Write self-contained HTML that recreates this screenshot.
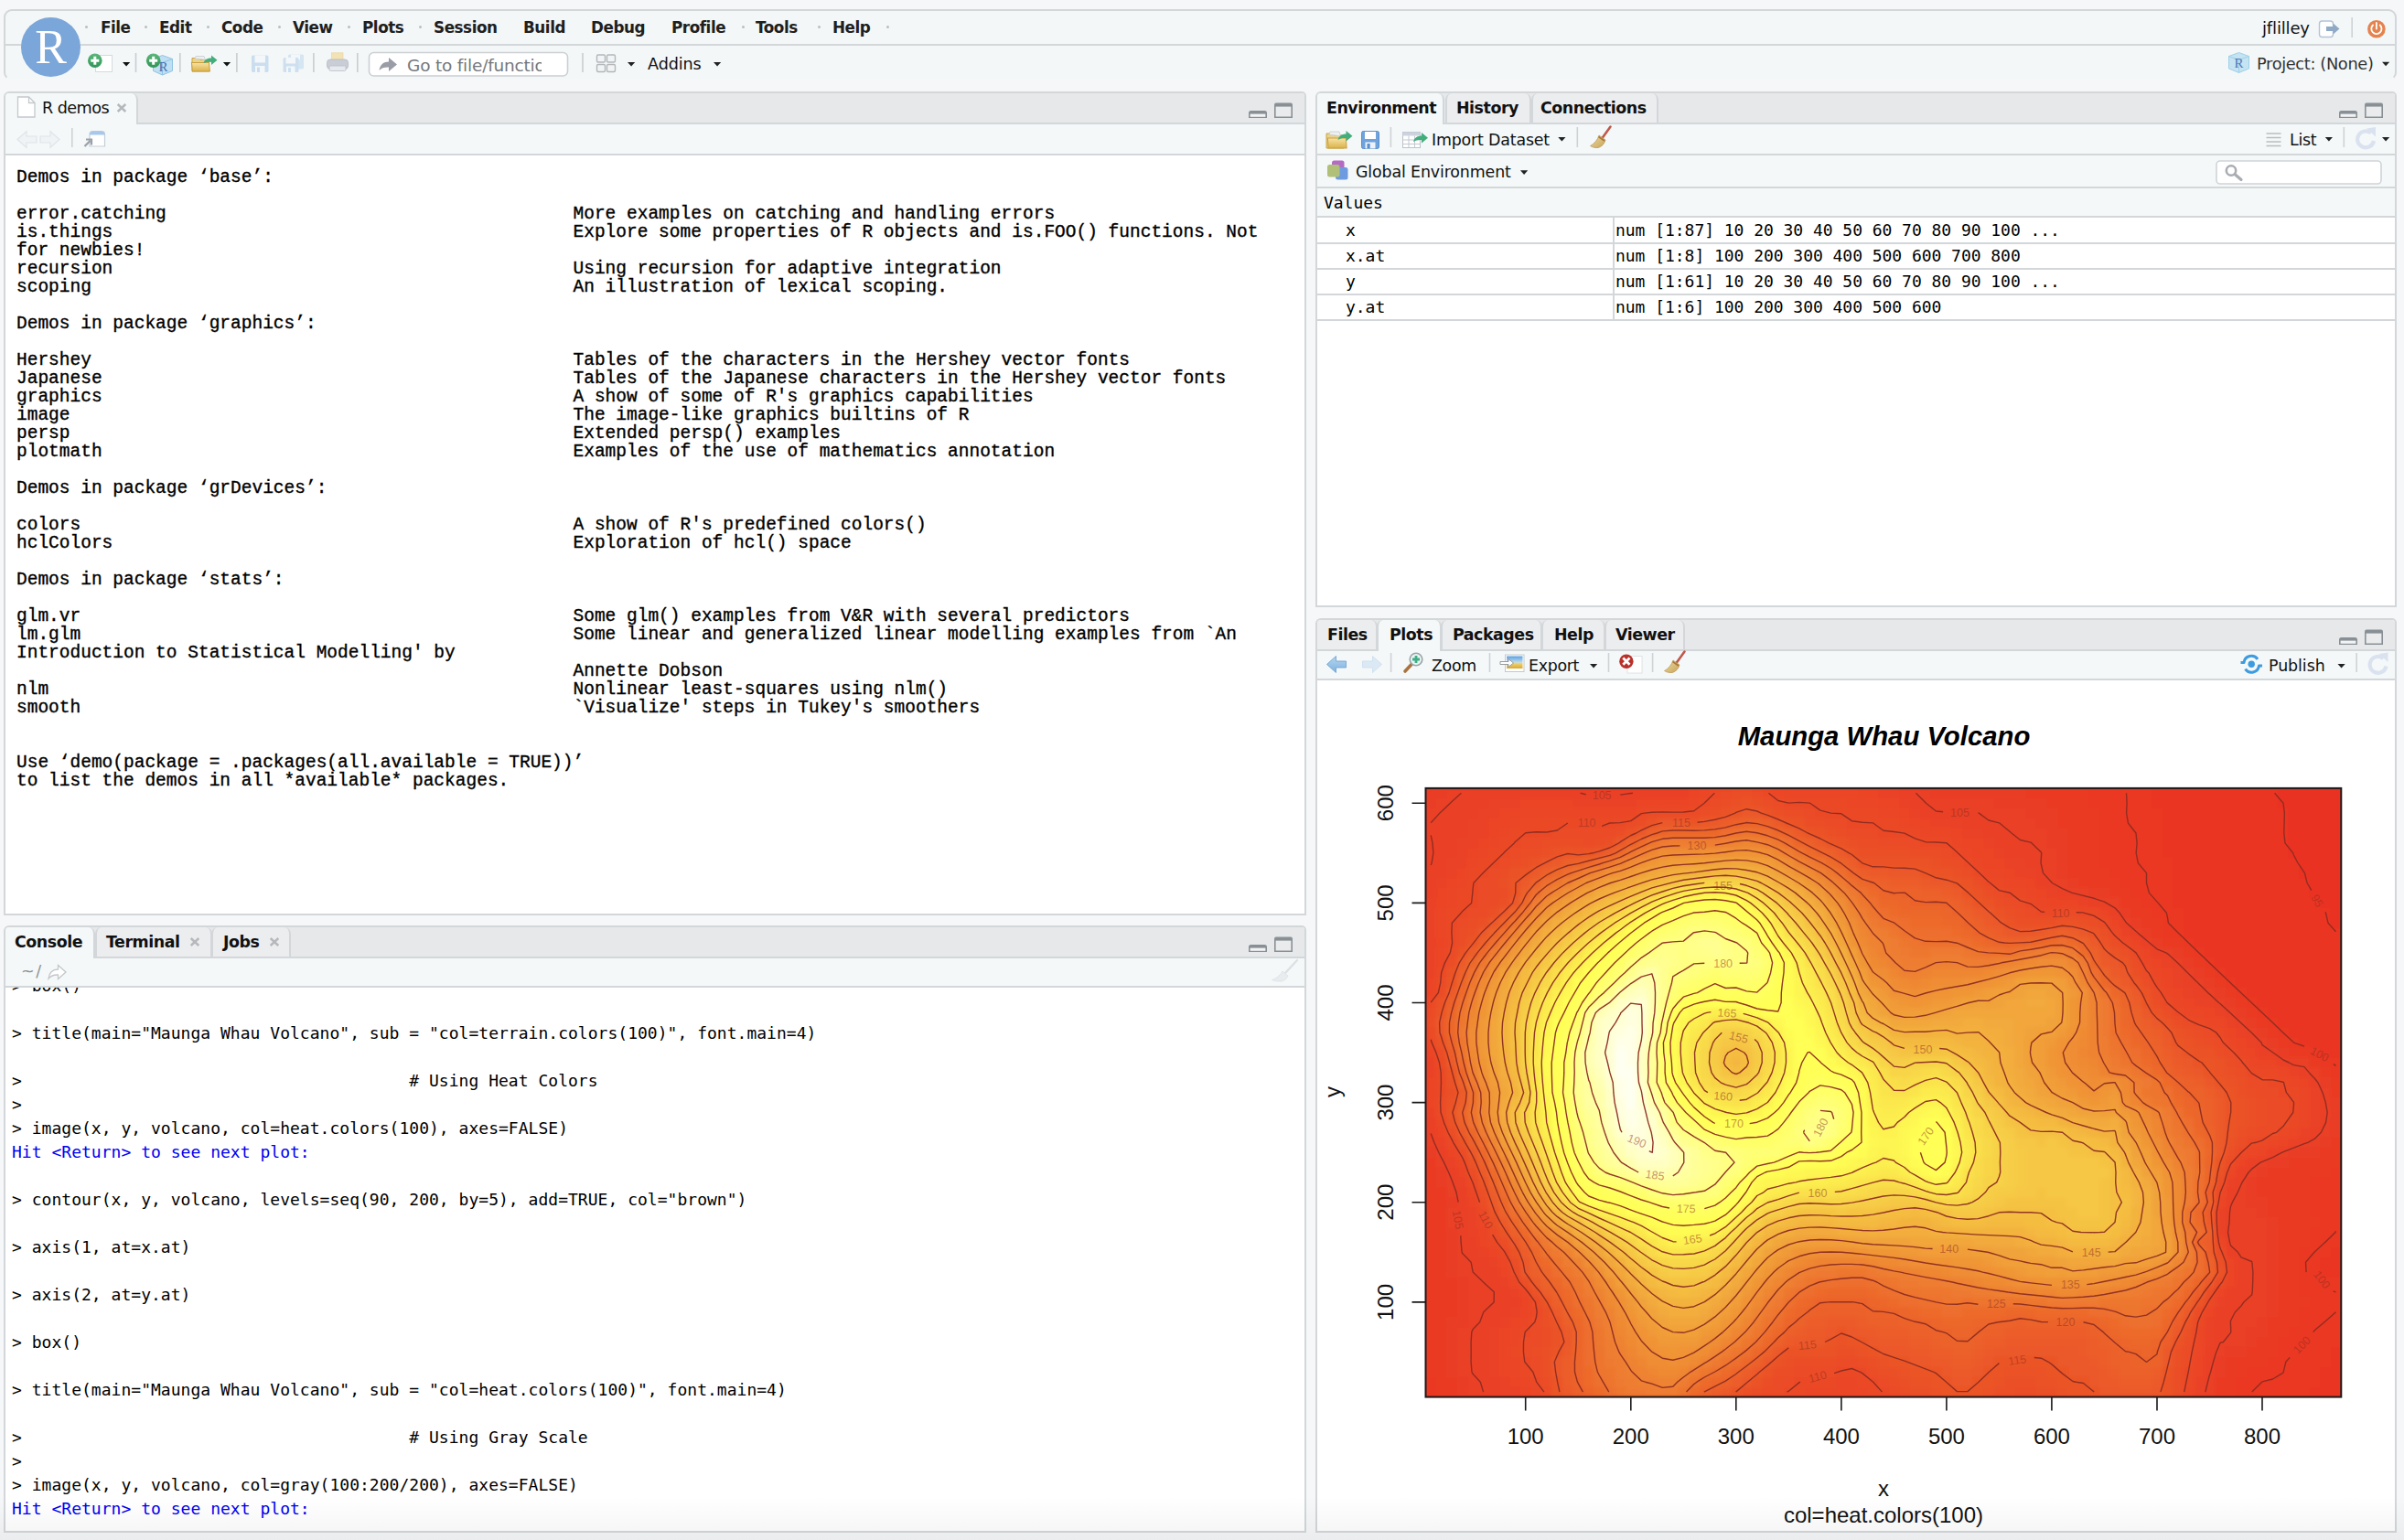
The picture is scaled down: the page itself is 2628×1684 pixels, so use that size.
<!DOCTYPE html>
<html lang="en">
<head>
<meta charset="utf-8">
<title>RStudio</title>
<style>
*{box-sizing:border-box;margin:0;padding:0}
html,body{width:2628px;height:1684px;overflow:hidden;background:#f5f7f8}
body{position:relative;font-family:"DejaVu Sans","Liberation Sans",sans-serif;font-size:17px;color:#000}
.abs{position:absolute}
.ui{position:absolute;font-family:"DejaVu Sans","Liberation Sans",sans-serif;font-size:17.4px;letter-spacing:-0.3px;white-space:nowrap;color:#111;line-height:22px}
#top{position:absolute;left:4px;top:10px;width:2616px;height:78px;border:2px solid #d3d7da;border-bottom-color:transparent;border-radius:9px;background:#f4f7f8;background-clip:padding-box}
#menuline{position:absolute;left:6px;top:48px;width:2612px;height:2px;background:#d3d7da}
#logo{position:absolute;left:23px;top:19px;width:65px;height:65px;border-radius:50%;background:#7ba6d9}
#logo span{position:absolute;left:0;top:0;width:65px;text-align:center;font-family:"Liberation Serif",serif;font-size:52px;line-height:65px;color:#fff}
.menu{position:absolute;top:19px;font-weight:bold;font-size:16.8px;letter-spacing:-0.45px;color:#202020;white-space:nowrap;line-height:22px}
.dot{position:absolute;top:28px;width:3px;height:3px;border-radius:50%;background:#b9bec2}
.pane{position:absolute;border:2px solid #d3d7da;background:#fff;border-radius:6px 5px 0 0}
.tabbar{position:absolute;height:34px;background:#e6e8ea;border-bottom:2px solid #d3d7da;border-radius:4px 3px 0 0}
.tab{position:absolute;height:32px;background:#ecedef;border:2px solid #d3d7da;border-bottom:0;border-top:0;border-radius:7px 7px 0 0}
.tab.sel{background:#f4f8f9;height:34px}
.tl{position:absolute;font-weight:bold;font-size:17.4px;letter-spacing:-0.45px;line-height:22px;white-space:nowrap;color:#111}
.tbar{position:absolute;background:#f4f8f9;border-bottom:2px solid #d3d7da}
.x{position:absolute;color:#b3b6b9;font-weight:bold;font-size:17px;line-height:22px}
pre{position:absolute;margin:0}
#help{left:18px;top:183.5px;font-family:"Liberation Mono",monospace;font-size:19.5px;line-height:20px;color:#000;-webkit-text-stroke:0.35px #000}
#conwrap{position:absolute;left:6px;top:1079.5px;width:1420px;height:594.5px;overflow:hidden;background:#fff}
#con{left:7px;top:-14.5px;font-family:"DejaVu Sans Mono",monospace;font-size:18px;line-height:26px;letter-spacing:0.02px;color:#000}
#con i{font-style:normal;color:#0000f0}
.mono{position:absolute;margin-top:1px;font-family:"DejaVu Sans Mono",monospace;font-size:18px;line-height:26px;white-space:pre;letter-spacing:-0.04px;color:#000}
.hl{position:absolute;height:2px;background:#d3d7da}
.vl{position:absolute;width:2px;background:#d3d7da}
</style>
</head>
<body>

<div id="top"></div><div id="menuline"></div><div id="logo"><span>R</span></div>

<div class="dot" style="left:93px"></div>
<div class="dot" style="left:158px"></div>
<div class="dot" style="left:226px"></div>
<div class="dot" style="left:304px"></div>
<div class="dot" style="left:380px"></div>
<div class="dot" style="left:458px"></div>
<div class="dot" style="left:811px"></div>
<div class="dot" style="left:894px"></div>
<div class="dot" style="left:969px"></div>
<div class="menu" style="left:110px">File</div>
<div class="menu" style="left:174px">Edit</div>
<div class="menu" style="left:242px">Code</div>
<div class="menu" style="left:320px">View</div>
<div class="menu" style="left:396px">Plots</div>
<div class="menu" style="left:474px">Session</div>
<div class="menu" style="left:572px">Build</div>
<div class="menu" style="left:646px">Debug</div>
<div class="menu" style="left:734px">Profile</div>
<div class="menu" style="left:826px">Tools</div>
<div class="menu" style="left:910px">Help</div>


<svg class="abs" style="left:90px;top:52px" width="720" height="36" viewBox="90 52 720 36">
<defs>
<linearGradient id="gfold" x1="0" y1="0" x2="0" y2="1"><stop offset="0" stop-color="#f7e3a3"/><stop offset="1" stop-color="#dcb24c"/></linearGradient>
<linearGradient id="ggreen" x1="0" y1="0" x2="0" y2="1"><stop offset="0" stop-color="#5cb87a"/><stop offset="1" stop-color="#2f9457"/></linearGradient>
</defs>
<!-- new file -->
<rect x="104.5" y="60.5" width="18" height="18" fill="#fff" stroke="#d5dadd" stroke-width="1"/>
<circle cx="103.8" cy="66.2" r="7.8" fill="url(#ggreen)"/>
<path d="M99.3 66.2h9M103.8 61.7v9" stroke="#fff" stroke-width="3" fill="none"/>
<path d="M134 68h8.2l-4.1 4.6z" fill="#111"/>
<path d="M148.5 58v21M196.8 58v21M258.9 58v21M342.9 58v21M390.8 58v21M637 58v21" stroke="#c9cdd0" stroke-width="1.6"/>
<!-- new project -->
<path d="M177.5 60.5l11 4v13l-11 4.5l-10-4.5v-13z" fill="#bfdff2" stroke="#8fc3e4" stroke-width="1"/>
<path d="M167.5 64.5l10 4l11-4M177.5 68.5v13.5" stroke="#8fc3e4" stroke-width="1" fill="none"/>
<text x="178.5" y="78" font-family="Liberation Serif,serif" font-size="15" fill="#3f6fb0" text-anchor="middle">R</text>
<circle cx="167.7" cy="66.2" r="7.8" fill="url(#ggreen)"/>
<path d="M163.2 66.2h9M167.7 61.7v9" stroke="#fff" stroke-width="3" fill="none"/>
<!-- open folder -->
<path d="M210 63.5h7l2 2h9.5v12.5h-18.5z" fill="#e9d28d" stroke="#c9a545" stroke-width="1"/>
<path d="M213 64l1-2.5h9l1.500 4z" fill="#eef0f0" stroke="#c8cccc" stroke-width=".8"/>
<path d="M208.500 68.500h19l3 9.500h-19z" fill="url(#gfold)" stroke="#c9a23f" stroke-width="1" transform="skewX(-12) translate(15.500 0)"/>
<path d="M222.500 69c1-4 4.500-5.500 8.500-5.500v-3l6.500 5.200l-6.500 5.200v-3c-3-.3-6 .1-8.500 1.100z" fill="#43ad7c"/>
<path d="M243.900 68h8.200l-4.100 4.600z" fill="#111"/>
<!-- save (disabled) -->
<g opacity=".55"><rect x="275" y="60.500" width="18.500" height="18.500" rx="1.500" fill="#a9cbe8"/><rect x="278.500" y="60.500" width="11.500" height="8" fill="#f4f8fb"/><rect x="279" y="72" width="10.500" height="7" fill="#f4f8fb"/><rect x="281" y="73.500" width="3" height="5.500" fill="#a9cbe8"/></g>
<g opacity=".5"><rect x="315" y="59.500" width="17" height="16" rx="1.500" fill="#b8d5ec"/><rect x="318" y="59.500" width="10" height="6" fill="#f4f8fb"/><rect x="309.500" y="63" width="17" height="16" rx="1.500" fill="#a9cbe8"/><rect x="312.500" y="63" width="10.500" height="6.500" fill="#f4f8fb"/><rect x="313" y="72.500" width="9.500" height="6.500" fill="#f4f8fb"/><rect x="315" y="74" width="3" height="5" fill="#a9cbe8"/></g>
<!-- printer -->
<rect x="362.500" y="57.800" width="12.500" height="10" fill="#f3e2b4" stroke="#e6d29c" stroke-width=".6"/>
<rect x="357.500" y="65" width="23" height="10.500" rx="3.500" fill="#c9ced6" stroke="#b4bac4" stroke-width=".8"/>
<rect x="360" y="72" width="18" height="5.500" rx="1.500" fill="#e6e9ee" stroke="#b9bfc9" stroke-width=".8"/>
<!-- goto box -->
<rect x="403.500" y="57.500" width="217" height="25.500" rx="5" fill="#fff" stroke="#ccd0d3" stroke-width="1.600"/>
<path d="M414.500 77c1-6.500 5-9.500 10.500-9.500v-4.500l9 7.500l-9 7.500v-4.500c-4.500-.2-8 .8-10.500 3.500z" fill="#9a9ca6"/>
<!-- grid icon -->
<g fill="#f1f3f4" stroke="#b3b7ba" stroke-width="1.400"><rect x="652.500" y="60" width="9" height="8" rx="1.500"/><rect x="663.500" y="60" width="9" height="8" rx="1.500"/><rect x="652.500" y="70.500" width="9" height="8" rx="1.500"/><rect x="663.500" y="70.500" width="9" height="8" rx="1.500"/></g>
<path d="M686 68h8.200l-4.100 4.600z" fill="#222"/>
<path d="M780 68h8.200l-4.100 4.600z" fill="#222"/>
</svg>
<div class="ui abs" style="left:445px;top:60.5px;font-size:18.5px;color:#74787c;letter-spacing:-0.2px;width:146.5px;overflow:hidden">Go to file/function</div>
<div class="ui abs" style="left:708px;top:59.2px;font-size:17.6px;color:#111;letter-spacing:-0.1px">Addins</div>



<div class="ui" style="left:2473px;top:20px;font-size:18px;letter-spacing:-0.15px">jflilley</div>
<div class="ui" style="left:2467px;top:59px;font-size:17.800px;letter-spacing:-0.35px;color:#333">Project: (None)</div>
<svg class="abs" style="left:2430px;top:14px" width="190" height="72" viewBox="2430 14 190 72">
<rect x="2535.500" y="23" width="15" height="17.500" rx="3" fill="#fff" stroke="#b5c3d6" stroke-width="1.400"/>
<path d="M2543 29h7.500v-3.500l7 6l-7 6v-3.500h-7.500z" fill="#8fa9c6"/>
<path d="M2571.200 19v22" stroke="#cfd3d6" stroke-width="1.600"/>
<circle cx="2597.900" cy="31.700" r="9.800" fill="#e5834f"/>
<path d="M2594 27.500a5.600 5.600 0 1 0 7.800 0" fill="none" stroke="#fff" stroke-width="1.800" stroke-linecap="round"/>
<path d="M2597.900 25v6.500" stroke="#fff" stroke-width="1.800" stroke-linecap="round"/>
<path d="M2447.500 57.500l11 4v13.500l-11 4.500l-11-4.500v-13.500z" fill="#c4e3f3" stroke="#9fd0e6" stroke-width="1"/>
<path d="M2436.500 61.500l11 4l11-4M2447.500 65.500v14" stroke="#9fd0e6" stroke-width="1" fill="none"/>
<text x="2447.500" y="74" font-family="Liberation Serif,serif" font-size="15" fill="#4b78b8" text-anchor="middle">R</text>
<path d="M2604 67.700h8.200l-4.100 4.600z" fill="#222"/>
</svg>


<div class="pane" style="left:4px;top:100px;width:1424px;height:901px"></div>
<div class="tabbar" style="left:6px;top:102px;width:1420px"></div>
<div class="tab sel" style="left:6px;top:102px;width:145px;border-left:0;border-top-left-radius:4px"></div>
<div class="tbar" style="left:6px;top:136px;width:1420px;height:34px"></div>
<svg class="abs" style="left:10px;top:102px" width="120" height="68" viewBox="10 102 120 68">
<path d="M19.500 106h12l6.500 6.500v15.500h-18.500z" fill="#fff" stroke="#c4c8cb" stroke-width="1.300"/>
<path d="M31.500 106v6.500h6.500" fill="none" stroke="#c4c8cb" stroke-width="1.300"/>
<path d="M19 152.500l10-9v5.500h11v7h-11v5.500z" fill="#f0f3f5" stroke="#dfe4e8" stroke-width="1.200"/>
<path d="M65 152.500l-10-9v5.500h-11v7h11v5.500z" fill="#f0f3f5" stroke="#dfe4e8" stroke-width="1.200"/>
<path d="M78.800 140v21" stroke="#cfd3d6" stroke-width="1.600"/>
<path d="M98 160h16.500v-13a3.500 3.500 0 0 0-3.500-3.500h-9.500a3.500 3.500 0 0 0-3.500 3.500z" fill="#fff" stroke="#c3cdd8" stroke-width="1.200"/>
<path d="M98 147.500a3.500 3.500 0 0 1 3.500-4h9.500a3.500 3.500 0 0 1 3.500 4z" fill="#a9c7ea"/>
<path d="M92.500 160l6-6M94 152.500h6v6" fill="none" stroke="#9aa0a8" stroke-width="2.200"/>
</svg>

<div class="tl" style="left:46px;top:107px;font-weight:normal;letter-spacing:-0.55px;font-size:17.6px">R demos</div><svg class="abs" style="left:127.30000000000001px;top:112.3px" width="12" height="12" viewBox="0 0 12 12"><path d="M1.700 2l8.600 8M10.300 2l-8.600 8" stroke="#b6b9bc" stroke-width="2.500" fill="none"/></svg>
<svg class="abs" style="left:1365px;top:111.5px" width="50" height="20" viewBox="0 0 50 20">
<path d="M0 17v-5.500a2.500 2.500 0 0 1 2.500-2.500h15a2.500 2.500 0 0 1 2.500 2.500v5.500z" fill="#899095"/><rect x="1.600" y="12.600" width="16.800" height="3.200" fill="#f2f3f4"/>
<path d="M28 17v-14.500a2 2 0 0 1 2-2h16a2 2 0 0 1 2 2v14.500z" fill="#899095"/><rect x="29.600" y="4.600" width="16.800" height="10.900" fill="#e9ebec"/>
</svg>
<pre id="help">Demos in package ‘base’:

error.catching                                      More examples on catching and handling errors
is.things                                           Explore some properties of R objects and is.FOO() functions. Not
for newbies!
recursion                                           Using recursion for adaptive integration
scoping                                             An illustration of lexical scoping.

Demos in package ‘graphics’:

Hershey                                             Tables of the characters in the Hershey vector fonts
Japanese                                            Tables of the Japanese characters in the Hershey vector fonts
graphics                                            A show of some of R's graphics capabilities
image                                               The image-like graphics builtins of R
persp                                               Extended persp() examples
plotmath                                            Examples of the use of mathematics annotation

Demos in package ‘grDevices’:

colors                                              A show of R's predefined colors()
hclColors                                           Exploration of hcl() space

Demos in package ‘stats’:

glm.vr                                              Some glm() examples from V&amp;R with several predictors
lm.glm                                              Some linear and generalized linear modelling examples from `An
Introduction to Statistical Modelling' by
                                                    Annette Dobson
nlm                                                 Nonlinear least-squares using nlm()
smooth                                              `Visualize' steps in Tukey's smoothers


Use ‘demo(package = .packages(all.available = TRUE))’
to list the demos in all *available* packages.</pre>

<div class="pane" style="left:4px;top:1012px;width:1424px;height:664px"></div>
<div class="tabbar" style="left:6px;top:1014px;width:1420px"></div>
<div class="tab sel" style="left:6px;top:1014px;width:98px;border-left:0;border-top-left-radius:4px"></div>
<div class="tab" style="left:104px;top:1014px;width:128px"></div>
<div class="tab" style="left:231px;top:1014px;width:87px"></div>
<div class="tl" style="left:16px;top:1019px">Console</div>
<div class="tl" style="left:116px;top:1019px">Terminal</div><svg class="abs" style="left:206.7px;top:1024.3px" width="12" height="12" viewBox="0 0 12 12"><path d="M1.700 2l8.600 8M10.300 2l-8.600 8" stroke="#b6b9bc" stroke-width="2.500" fill="none"/></svg>
<div class="tl" style="left:244px;top:1019px">Jobs</div><svg class="abs" style="left:293.6px;top:1024.3px" width="12" height="12" viewBox="0 0 12 12"><path d="M1.700 2l8.600 8M10.300 2l-8.600 8" stroke="#b6b9bc" stroke-width="2.500" fill="none"/></svg>
<svg class="abs" style="left:1365px;top:1023.5px" width="50" height="20" viewBox="0 0 50 20">
<path d="M0 17v-5.500a2.500 2.500 0 0 1 2.500-2.500h15a2.500 2.500 0 0 1 2.500 2.500v5.500z" fill="#899095"/><rect x="1.600" y="12.600" width="16.800" height="3.200" fill="#f2f3f4"/>
<path d="M28 17v-14.500a2 2 0 0 1 2-2h16a2 2 0 0 1 2 2v14.500z" fill="#899095"/><rect x="29.600" y="4.600" width="16.800" height="10.900" fill="#e9ebec"/>
</svg>
<div class="tbar" style="left:6px;top:1048px;width:1420px;height:31.500px"></div>
<div class="ui" style="left:23px;top:1051px;color:#8d9194;font-size:17.5px;letter-spacing:1.5px">~/</div>
<svg class="abs" style="left:50px;top:1048px" width="30" height="30" viewBox="50 1048 30 30">
<path d="M53 1070c1-7 5-10 10.500-10v-4.500l8.500 7.500l-8.500 7.500v-4.500c-4.500-.2-8 1-10.500 4z" fill="#fff" stroke="#c3c7ca" stroke-width="1.300"/>
</svg>
<svg class="abs" style="left:1385px;top:1046px" width="40" height="32" viewBox="1385 1046 40 32" opacity=".55">
<path d="M1418 1050l-13 14" stroke="#c9ced3" stroke-width="2.400" stroke-linecap="round"/>
<path d="M1402 1062l6 5c-1 3-3.500 5-7 6c-4 .3-8-.3-10.500-1.300c5-2 9-5 11.500-9.700z" fill="#dfe3e6" stroke="#c9ced3" stroke-width=".8"/>
</svg>

<div id="conwrap"><pre id="con">&gt; box()

&gt; title(main="Maunga Whau Volcano", sub = "col=terrain.colors(100)", font.main=4)

&gt;                                       # Using Heat Colors
&gt; 
&gt; image(x, y, volcano, col=heat.colors(100), axes=FALSE)
<i>Hit &lt;Return&gt; to see next plot: </i>

&gt; contour(x, y, volcano, levels=seq(90, 200, by=5), add=TRUE, col="brown")

&gt; axis(1, at=x.at)

&gt; axis(2, at=y.at)

&gt; box()

&gt; title(main="Maunga Whau Volcano", sub = "col=heat.colors(100)", font.main=4)

&gt;                                       # Using Gray Scale
&gt; 
&gt; image(x, y, volcano, col=gray(100:200/200), axes=FALSE)
<i>Hit &lt;Return&gt; to see next plot: </i></pre></div>

<div class="pane" style="left:1438px;top:100px;width:1182px;height:564px"></div>
<div class="tabbar" style="left:1440px;top:102px;width:1178px"></div>
<div class="tab sel" style="left:1440px;top:102px;width:139px;border-left:0;border-top-left-radius:4px"></div>
<div class="tab" style="left:1580px;top:102px;width:94px"></div>
<div class="tab" style="left:1674px;top:102px;width:139px"></div>
<div class="tl" style="left:1450px;top:107px">Environment</div>
<div class="tl" style="left:1592px;top:107px">History</div>
<div class="tl" style="left:1684px;top:107px">Connections</div>
<svg class="abs" style="left:2557px;top:111.5px" width="50" height="20" viewBox="0 0 50 20">
<path d="M0 17v-5.500a2.500 2.500 0 0 1 2.500-2.500h15a2.500 2.500 0 0 1 2.500 2.500v5.500z" fill="#899095"/><rect x="1.600" y="12.600" width="16.800" height="3.200" fill="#f2f3f4"/>
<path d="M28 17v-14.500a2 2 0 0 1 2-2h16a2 2 0 0 1 2 2v14.500z" fill="#899095"/><rect x="29.600" y="4.600" width="16.800" height="10.900" fill="#e9ebec"/>
</svg>
<div class="tbar" style="left:1440px;top:136px;width:1178px;height:34px"></div>
<div class="tbar" style="left:1440px;top:170px;width:1178px;height:36px"></div>
<div class="tbar" style="left:1440px;top:206px;width:1178px;height:32px"></div>
<svg class="abs" style="left:1444px;top:136px" width="330" height="70" viewBox="1444 136 330 70">
<!-- open -->
<path d="M1450 146h7l2 2h10v14h-19z" fill="#e9d28d" stroke="#c9a545" stroke-width="1"/>
<path d="M1453 147l1-3h10l1.500 5z" fill="#eef0f0" stroke="#c8cccc" stroke-width=".8"/>
<path d="M1448 151h20l3.500 11h-20z" fill="url(#gfold)" stroke="#c9a23f" stroke-width="1" transform="translate(4.500 0) skewX(-14) translate(36.500 0)"/>
<path d="M1462.500 153c1-4.500 5-6.500 9-6.500v-3.500l7 5.700l-7 5.700v-3.400c-3.500-.3-6.500 .3-9 2z" fill="#43ad7c"/>
<!-- save -->
<rect x="1488.500" y="143.500" width="19" height="19" rx="2" fill="#6fa3dc" stroke="#5a8fcb" stroke-width="1"/>
<rect x="1492" y="144" width="12" height="8" fill="#fff"/>
<rect x="1492.500" y="155.500" width="11" height="7" fill="#eef3f9"/><rect x="1494.500" y="157" width="3.200" height="5.500" fill="#5a8fcb"/>
<path d="M1520.400 139v22M1724.300 139v22" stroke="#cfd3d6" stroke-width="1.600"/>
<!-- import dataset -->
<rect x="1533.500" y="144.500" width="19" height="17" fill="#fff" stroke="#bcc2cb" stroke-width="1"/>
<rect x="1533.500" y="144.500" width="19" height="4" fill="#cdd3de"/>
<path d="M1533.500 153h19M1533.500 157.500h19M1540 148.500v13M1546.500 148.500v13" stroke="#c3c8d1" stroke-width="1"/>
<path d="M1545 155c1-4.500 5-6.500 9-6.500v-3.500l7 5.700l-7 5.700v-3.400c-3.500-.3-6.500 .3-9 2z" fill="#43ad7c"/>
<path d="M1703.300 150h8.200l-4.100 4.600z" fill="#222"/>
<!-- broom -->
<path d="M1760.500 138.500l-9 12.500" stroke="#c0584a" stroke-width="2.600" stroke-linecap="round"/>
<path d="M1748 148l7 5c-1 4-4 7.500-8 8.500c-3 .3-6.500-.5-8.500-2c4-2 8-6.500 9.500-11.500z" fill="url(#gbroom)" stroke="#b8934d" stroke-width=".7"/>
<path d="M1747.500 149.500l6.500 4.500" stroke="#a8773a" stroke-width="1.600"/>
<!-- global env icon -->
<rect x="1456" y="175.500" width="13.500" height="13.500" rx="2.500" fill="#b36bc4"/>
<rect x="1460" y="183" width="13.500" height="13.500" rx="2.500" fill="#6e9be0"/>
<rect x="1451" y="180" width="13.500" height="13.500" rx="2.500" fill="#b0c078"/>
<path d="M1662 186.300h8.200l-4.100 4.600z" fill="#222"/>
</svg>
<svg class="abs" style="left:2415px;top:136px" width="204" height="70" viewBox="2415 136 204 70">
<path d="M2477.500 146h16M2477.500 150.500h16M2477.500 155h16M2477.500 159.500h16" stroke="#b9bdc0" stroke-width="1.500"/>
<path d="M2541.800 150h8.200l-4.100 4.600z" fill="#222"/>
<path d="M2562.300 139v22" stroke="#cfd3d6" stroke-width="1.600"/>
<path d="M2592 145.500a9 9 0 1 0 3 8.500" fill="none" stroke="#dbe2ef" stroke-width="4.200"/>
<path d="M2587 140.500l10-1.500v10.500z" fill="#dbe2ef"/>
<path d="M2604 150h8.200l-4.100 4.600z" fill="#222"/>
<rect x="2423" y="176" width="180" height="25" rx="4" fill="#fff" stroke="#d0d4d7" stroke-width="1.600"/>
<circle cx="2439" cy="186.500" r="5.200" fill="none" stroke="#a9adb2" stroke-width="2.600"/>
<path d="M2443 190.500l7 6" stroke="#a9adb2" stroke-width="3.200" stroke-linecap="round"/>
</svg>

<div class="ui" style="left:1565px;top:142px;letter-spacing:-0.17px">Import Dataset</div>
<div class="ui" style="left:2503px;top:142px">List</div>
<div class="ui" style="left:1482px;top:177px;letter-spacing:-0.13px">Global Environment</div>
<div class="mono" style="left:1447px;top:208px">Values</div>
<div class="mono" style="left:1471px;top:238px">x</div><div class="mono" style="left:1766px;top:238px">num [1:87] 10 20 30 40 50 60 70 80 90 100 ...</div><div class="hl" style="left:1440px;top:265px;width:1178px"></div>
<div class="mono" style="left:1471px;top:266px">x.at</div><div class="mono" style="left:1766px;top:266px">num [1:8] 100 200 300 400 500 600 700 800</div><div class="hl" style="left:1440px;top:293px;width:1178px"></div>
<div class="mono" style="left:1471px;top:294px">y</div><div class="mono" style="left:1766px;top:294px">num [1:61] 10 20 30 40 50 60 70 80 90 100 ...</div><div class="hl" style="left:1440px;top:321px;width:1178px"></div>
<div class="mono" style="left:1471px;top:322px">y.at</div><div class="mono" style="left:1766px;top:322px">num [1:6] 100 200 300 400 500 600</div><div class="hl" style="left:1440px;top:349px;width:1178px"></div>
<div class="vl" style="left:1763px;top:238px;height:112px"></div>

<div class="pane" style="left:1438px;top:676px;width:1182px;height:1000px"></div>
<div class="tabbar" style="left:1440px;top:678px;width:1178px;height:34px"></div>
<div class="tab" style="left:1440px;top:678px;width:66px;border-left:0;height:32px;border-top-left-radius:4px"></div>
<div class="tab sel" style="left:1505px;top:678px;width:71px;height:34px"></div>
<div class="tab" style="left:1575px;top:678px;width:111px;height:32px"></div>
<div class="tab" style="left:1685px;top:678px;width:70px;height:32px"></div>
<div class="tab" style="left:1754px;top:678px;width:88px;height:32px"></div>
<div class="tl" style="left:1451px;top:683px">Files</div>
<div class="tl" style="left:1519px;top:683px">Plots</div>
<div class="tl" style="left:1588px;top:683px">Packages</div>
<div class="tl" style="left:1699px;top:683px">Help</div>
<div class="tl" style="left:1766px;top:683px">Viewer</div>
<svg class="abs" style="left:2557px;top:687.5px" width="50" height="20" viewBox="0 0 50 20">
<path d="M0 17v-5.500a2.500 2.500 0 0 1 2.500-2.500h15a2.500 2.500 0 0 1 2.500 2.500v5.500z" fill="#899095"/><rect x="1.600" y="12.600" width="16.800" height="3.200" fill="#f2f3f4"/>
<path d="M28 17v-14.500a2 2 0 0 1 2-2h16a2 2 0 0 1 2 2v14.500z" fill="#899095"/><rect x="29.600" y="4.600" width="16.800" height="10.900" fill="#e9ebec"/>
</svg>
<div class="tbar" style="left:1440px;top:712px;width:1178px;height:32px"></div>
<svg class="abs" style="left:1444px;top:708px" width="420" height="36" viewBox="1444 708 420 36">
<defs>
<linearGradient id="gbl" x1="0" y1="0" x2="0" y2="1"><stop offset="0" stop-color="#b5d6f0"/><stop offset="1" stop-color="#7fb2de"/></linearGradient>
<linearGradient id="gsky" x1="0" y1="0" x2="0" y2="1"><stop offset="0" stop-color="#5f9fe0"/><stop offset=".5" stop-color="#b9dcf4"/><stop offset=".55" stop-color="#f0d675"/><stop offset="1" stop-color="#d9a935"/></linearGradient>
<linearGradient id="gbroom" x1="0" y1="0" x2="1" y2="1"><stop offset="0" stop-color="#ecd9a0"/><stop offset="1" stop-color="#c9a55a"/></linearGradient>
</defs>
<path d="M1450.500 726.500l10-9v5.500h11v7h-11v5.500z" fill="url(#gbl)" stroke="#7aaad4" stroke-width="1"/>
<path d="M1510.500 726.500l-10-9v5.500h-11v7h11v5.500z" fill="#dbe9f4" stroke="#d0e1ef" stroke-width="1"/>
<path d="M1520.600 714v21M1628.500 714v21M1758.500 714v21M1806.600 714v21" stroke="#cfd3d6" stroke-width="1.600"/>
<!-- zoom -->
<path d="M1543 726.500l-7 7.500" stroke="#a9733f" stroke-width="3.600" stroke-linecap="round"/>
<circle cx="1548" cy="721" r="6.800" fill="#eaf4f3" stroke="#9aa3a8" stroke-width="1.600"/>
<path d="M1544 721h8M1548 717v8" stroke="#3fae86" stroke-width="2.800"/>
<!-- export -->
<rect x="1645.500" y="716" width="20.500" height="18.500" fill="#fff" stroke="#c5c9cc" stroke-width="1"/>
<rect x="1647" y="717.500" width="17.500" height="13.500" fill="url(#gsky)"/>
<path d="M1640 723.500h9v-3l5.500 4.500l-5.500 4.500v-3h-9z" fill="#fff" stroke="#8c9196" stroke-width=".9"/>
<path d="M1738 726h8.200l-4.100 4.600z" fill="#222"/>
<!-- remove -->
<rect x="1779" y="717.500" width="16" height="18.500" fill="#fff" stroke="#dfe2e4" stroke-width="1"/>
<circle cx="1777.900" cy="723.200" r="7.700" fill="#b8312b"/>
<path d="M1774.300 719.600l7.200 7.200M1781.500 719.600l-7.200 7.200" stroke="#fff" stroke-width="2.800"/>
<!-- broom -->
<path d="M1841.500 712.500l-9 12.500" stroke="#c0584a" stroke-width="2.600" stroke-linecap="round"/>
<path d="M1829 722l7 5c-1 4-4 7.500-8 8.500c-3 .3-6.500-.5-8.500-2c4-2 8-6.500 9.500-11.500z" fill="url(#gbroom)" stroke="#b8934d" stroke-width=".7"/>
<path d="M1828.500 723.500l6.500 4.500" stroke="#a8773a" stroke-width="1.600"/>
</svg>
<svg class="abs" style="left:2440px;top:708px" width="180" height="36" viewBox="2440 708 180 36">
<path d="M2449.500 724.500h3.500a8.300 8.300 0 0 1 15-3.700" fill="none" stroke="#3d9be0" stroke-width="3" stroke-linejoin="round"/>
<path d="M2473 728h-3.500a8.300 8.300 0 0 1-15 3.700" fill="none" stroke="#3d9be0" stroke-width="3" stroke-linejoin="round"/>
<circle cx="2461.200" cy="726.200" r="3.700" fill="#3d9be0"/>
<path d="M2555.500 726h8.200l-4.100 4.600z" fill="#222"/>
<path d="M2576.200 714v21" stroke="#cfd3d6" stroke-width="1.600"/>
<path d="M2605.500 720a9 9 0 1 0 3 8.500" fill="none" stroke="#dbe2ef" stroke-width="4.200"/>
<path d="M2600.500 715l10-1.500v10.500z" fill="#dbe2ef"/>
</svg>

<div class="ui" style="left:1565px;top:717px">Zoom</div>
<div class="ui" style="left:1671px;top:717px">Export</div>
<div class="ui" style="left:2480px;top:717px;letter-spacing:-0.05px">Publish</div>
<div class="abs" style="left:0;top:1636px;width:2628px;height:48px;background:linear-gradient(to bottom,rgba(0,0,0,0),rgba(0,0,0,0.045))"></div>

<!-- PLOT-START -->
<svg id="plot" style="position:absolute;left:1440px;top:746px" width="1179" height="928" viewBox="1440 746 1179 928">
<defs><filter id="soft" x="-2%" y="-2%" width="104%" height="104%"><feGaussianBlur stdDeviation="0.22"/></filter><clipPath id="boxclip"><rect x="1558.5" y="861.9" width="1000.8" height="665.7"/></clipPath></defs>
<g clip-path="url(#boxclip)"><g transform="translate(1558.45 861.85) scale(11.5040 10.9130)" filter="url(#soft)" shape-rendering="crispEdges">
<rect x="-1" y="-1" width="89" height="63" fill="#ea3323"/>
<path fill="#ea3323" stroke="#ea3323" stroke-width="0.04" d="M86 13h1v1h-1zM86 12h1v1h-1zM85 11h2v1h-2zM84 10h3v1h-3zM84 9h3v1h-3zM83 8h4v1h-4zM83 7h4v1h-4zM82 6h5v1h-5zM82 5h5v1h-5zM82 4h5v1h-5zM82 3h5v1h-5zM82 2h5v1h-5zM81 1h6v1h-6zM81 0h6v1h-6z"/>
<path fill="#ea3423" stroke="#ea3423" stroke-width="0.04" d="M86 16h1v1h-1zM85 15h2v1h-2zM85 14h2v1h-2zM84 13h2v1h-2zM83 12h3v1h-3zM83 11h2v1h-2zM82 10h2v1h-2zM82 9h2v1h-2zM81 8h2v1h-2zM81 7h2v1h-2zM80 6h2v1h-2zM80 5h2v1h-2zM79 4h3v1h-3zM79 3h3v1h-3zM79 2h3v1h-3zM78 1h3v1h-3zM78 0h3v1h-3z"/>
<path fill="#ea3524" stroke="#ea3524" stroke-width="0.04" d="M85 24h2v1h-2zM84 23h3v1h-3zM84 22h3v1h-3zM86 21h1v1h-1zM86 19h1v1h-1zM86 18h1v1h-1zM85 17h2v1h-2zM84 16h2v1h-2zM84 15h1v1h-1zM83 14h2v1h-2zM82 13h2v1h-2zM82 12h1v1h-1zM81 11h2v1h-2zM80 10h2v1h-2zM80 9h2v1h-2zM79 8h2v1h-2zM79 7h2v1h-2zM78 6h2v1h-2zM78 5h2v1h-2zM77 4h2v1h-2zM77 3h2v1h-2zM76 2h3v1h-3zM75 1h3v1h-3zM75 0h3v1h-3z"/>
<path fill="#ea3524" stroke="#ea3524" stroke-width="0.04" d="M86 47h1v1h-1zM85 25h2v1h-2zM83 24h2v1h-2zM82 23h2v1h-2zM81 22h3v1h-3zM81 21h5v1h-5zM80 20h7v1h-7zM79 19h7v1h-7zM77 18h9v1h-9zM76 17h9v1h-9zM75 16h9v1h-9zM74 15h10v1h-10zM74 14h9v1h-9zM73 13h9v1h-9zM73 12h9v1h-9zM73 11h8v1h-8zM73 10h7v1h-7zM73 9h7v1h-7zM73 8h6v1h-6zM73 7h6v1h-6zM73 6h5v1h-5zM73 5h5v1h-5zM73 4h4v1h-4zM73 3h4v1h-4zM72 2h4v1h-4zM72 1h3v1h-3zM72 0h3v1h-3z"/>
<path fill="#ea3624" stroke="#ea3624" stroke-width="0.04" d="M84 60h3v1h-3zM85 59h2v1h-2zM85 58h2v1h-2zM86 57h1v1h-1zM86 56h1v1h-1zM85 48h2v1h-2zM85 47h1v1h-1zM86 46h1v1h-1zM85 26h2v1h-2zM83 25h2v1h-2zM82 24h1v1h-1zM81 23h1v1h-1zM80 22h1v1h-1zM79 21h2v1h-2zM78 20h2v1h-2zM77 19h2v1h-2zM76 18h1v1h-1zM75 17h1v1h-1zM74 16h1v1h-1zM73 15h1v1h-1zM72 14h2v1h-2zM72 13h1v1h-1zM72 12h1v1h-1zM71 11h2v1h-2zM71 10h2v1h-2zM71 9h2v1h-2zM71 8h2v1h-2zM71 7h2v1h-2zM70 6h3v1h-3zM70 5h3v1h-3zM70 4h3v1h-3zM70 3h3v1h-3zM70 2h2v1h-2zM69 1h3v1h-3zM69 0h3v1h-3z"/>
<path fill="#ea3724" stroke="#ea3724" stroke-width="0.04" d="M78 60h6v1h-6zM79 59h6v1h-6zM81 58h4v1h-4zM82 57h4v1h-4zM82 56h4v1h-4zM83 55h4v1h-4zM84 54h3v1h-3zM85 53h2v1h-2zM86 52h1v1h-1zM86 50h1v1h-1zM84 49h3v1h-3zM84 48h1v1h-1zM84 47h1v1h-1zM84 46h2v1h-2zM85 45h2v1h-2zM86 44h1v1h-1zM86 27h1v1h-1zM84 26h1v1h-1zM82 25h1v1h-1zM81 24h1v1h-1zM80 23h1v1h-1zM79 22h1v1h-1zM78 21h1v1h-1zM77 20h1v1h-1zM76 19h1v1h-1zM75 18h1v1h-1zM74 17h1v1h-1zM73 16h1v1h-1zM72 15h1v1h-1zM71 14h1v1h-1zM71 13h1v1h-1zM70 12h2v1h-2zM69 11h2v1h-2zM69 10h2v1h-2zM68 9h3v1h-3zM68 8h3v1h-3zM67 7h4v1h-4zM67 6h3v1h-3zM67 5h3v1h-3zM67 4h3v1h-3zM66 3h4v1h-4zM66 2h4v1h-4zM66 1h3v1h-3zM66 0h3v1h-3z"/>
<path fill="#ea3924" stroke="#ea3924" stroke-width="0.04" d="M0 60h1v1h-1zM77 60h1v1h-1zM0 59h1v1h-1zM77 59h2v1h-2zM78 58h3v1h-3zM80 57h2v1h-2zM81 56h1v1h-1zM81 55h2v1h-2zM82 54h2v1h-2zM83 53h2v1h-2zM83 52h3v1h-3zM84 51h3v1h-3zM83 50h3v1h-3zM83 49h1v1h-1zM83 48h1v1h-1zM83 47h1v1h-1zM83 46h1v1h-1zM84 45h1v1h-1zM84 44h2v1h-2zM85 43h2v1h-2zM84 42h3v1h-3zM84 41h3v1h-3zM84 40h3v1h-3zM84 39h3v1h-3zM86 38h1v1h-1zM86 28h1v1h-1zM85 27h1v1h-1zM70 14h1v1h-1zM70 13h1v1h-1zM69 12h1v1h-1zM68 11h1v1h-1zM67 10h2v1h-2zM66 9h2v1h-2zM65 8h3v1h-3zM64 7h3v1h-3zM64 6h3v1h-3zM64 5h3v1h-3zM64 4h3v1h-3zM64 3h2v1h-2zM64 2h2v1h-2zM63 1h3v1h-3zM63 0h3v1h-3z"/>
<path fill="#ea3a24" stroke="#ea3a24" stroke-width="0.04" d="M1 60h1v1h-1zM76 60h1v1h-1zM1 59h1v1h-1zM76 59h1v1h-1zM0 58h1v1h-1zM77 58h1v1h-1zM0 57h1v1h-1zM78 57h2v1h-2zM0 56h1v1h-1zM79 56h2v1h-2zM0 55h1v1h-1zM80 55h1v1h-1zM0 54h1v1h-1zM81 54h1v1h-1zM0 53h1v1h-1zM81 53h2v1h-2zM0 52h1v1h-1zM82 52h1v1h-1zM0 51h1v1h-1zM82 51h2v1h-2zM0 50h1v1h-1zM82 50h1v1h-1zM0 49h1v1h-1zM82 49h1v1h-1zM0 48h1v1h-1zM82 48h1v1h-1zM0 47h1v1h-1zM82 47h1v1h-1zM0 46h1v1h-1zM82 46h1v1h-1zM0 45h1v1h-1zM82 45h2v1h-2zM0 44h1v1h-1zM83 44h1v1h-1zM0 43h1v1h-1zM83 43h2v1h-2zM0 42h1v1h-1zM82 42h2v1h-2zM0 41h1v1h-1zM82 41h2v1h-2zM0 40h1v1h-1zM81 40h3v1h-3zM0 39h1v1h-1zM81 39h3v1h-3zM82 38h4v1h-4zM85 37h2v1h-2zM86 36h1v1h-1zM83 26h1v1h-1zM81 25h1v1h-1zM80 24h1v1h-1zM79 23h1v1h-1zM78 22h1v1h-1zM77 21h1v1h-1zM76 20h1v1h-1zM75 19h1v1h-1zM74 18h1v1h-1zM73 17h1v1h-1zM72 16h1v1h-1zM71 15h1v1h-1zM69 13h1v1h-1zM68 12h1v1h-1zM67 11h1v1h-1zM66 10h1v1h-1zM64 9h2v1h-2zM63 8h2v1h-2zM62 7h2v1h-2zM62 6h2v1h-2zM62 5h2v1h-2zM62 4h2v1h-2zM62 3h2v1h-2zM62 2h2v1h-2zM61 1h2v1h-2zM60 0h3v1h-3z"/>
<path fill="#ea3b24" stroke="#ea3b24" stroke-width="0.04" d="M2 60h1v1h-1zM75 60h1v1h-1zM2 59h1v1h-1zM75 59h1v1h-1zM1 58h1v1h-1zM76 58h1v1h-1zM1 57h1v1h-1zM76 57h2v1h-2zM1 56h1v1h-1zM78 56h1v1h-1zM1 55h1v1h-1zM79 55h1v1h-1zM1 54h1v1h-1zM80 54h1v1h-1zM1 53h1v1h-1zM80 53h1v1h-1zM1 52h2v1h-2zM81 52h1v1h-1zM1 51h2v1h-2zM81 51h1v1h-1zM1 50h2v1h-2zM81 50h1v1h-1zM1 49h2v1h-2zM81 49h1v1h-1zM1 48h1v1h-1zM81 48h1v1h-1zM1 47h1v1h-1zM81 47h1v1h-1zM1 46h1v1h-1zM81 46h1v1h-1zM1 45h1v1h-1zM81 45h1v1h-1zM1 44h1v1h-1zM81 44h2v1h-2zM1 43h1v1h-1zM81 43h2v1h-2zM1 42h1v1h-1zM80 42h2v1h-2zM1 41h1v1h-1zM80 41h2v1h-2zM1 40h1v1h-1zM79 40h2v1h-2zM79 39h2v1h-2zM0 38h1v1h-1zM80 38h2v1h-2zM0 37h1v1h-1zM82 37h3v1h-3zM85 36h1v1h-1zM86 35h1v1h-1zM86 30h1v1h-1zM86 29h1v1h-1zM85 28h1v1h-1zM84 27h1v1h-1zM82 26h1v1h-1zM70 15h1v1h-1zM69 14h1v1h-1zM68 13h1v1h-1zM67 12h1v1h-1zM66 11h1v1h-1zM65 10h1v1h-1zM62 9h2v1h-2zM61 8h2v1h-2zM61 7h1v1h-1zM61 6h1v1h-1zM61 5h1v1h-1zM61 4h1v1h-1zM60 3h2v1h-2zM60 2h2v1h-2zM59 1h2v1h-2zM57 0h3v1h-3z"/>
<path fill="#ea3d25" stroke="#ea3d25" stroke-width="0.04" d="M3 60h1v1h-1zM3 59h1v1h-1zM2 58h1v1h-1zM75 58h1v1h-1zM2 57h1v1h-1zM75 57h1v1h-1zM2 56h1v1h-1zM76 56h2v1h-2zM2 55h1v1h-1zM78 55h1v1h-1zM2 54h1v1h-1zM78 54h2v1h-2zM2 53h2v1h-2zM79 53h1v1h-1zM3 52h1v1h-1zM80 52h1v1h-1zM3 51h1v1h-1zM80 51h1v1h-1zM3 50h1v1h-1zM80 50h1v1h-1zM3 49h1v1h-1zM80 49h1v1h-1zM2 48h1v1h-1zM80 48h1v1h-1zM2 47h1v1h-1zM80 47h1v1h-1zM2 46h1v1h-1zM80 46h1v1h-1zM2 45h1v1h-1zM80 45h1v1h-1zM2 44h1v1h-1zM80 44h1v1h-1zM80 43h1v1h-1zM79 42h1v1h-1zM2 41h1v1h-1zM78 41h2v1h-2zM78 40h1v1h-1zM1 39h1v1h-1zM78 39h1v1h-1zM1 38h1v1h-1zM79 38h1v1h-1zM80 37h2v1h-2zM0 36h1v1h-1zM82 36h3v1h-3zM85 35h1v1h-1zM86 34h1v1h-1zM86 33h1v1h-1zM86 32h1v1h-1zM86 31h1v1h-1zM85 29h1v1h-1zM81 26h1v1h-1zM80 25h1v1h-1zM79 24h1v1h-1zM78 23h1v1h-1zM77 22h1v1h-1zM76 21h1v1h-1zM75 20h1v1h-1zM74 19h1v1h-1zM73 18h1v1h-1zM72 17h1v1h-1zM71 16h1v1h-1zM69 15h1v1h-1zM68 14h1v1h-1zM67 13h1v1h-1zM66 12h1v1h-1zM63 10h2v1h-2zM61 9h1v1h-1zM60 8h1v1h-1zM60 7h1v1h-1zM60 6h1v1h-1zM59 5h2v1h-2zM59 4h2v1h-2zM58 3h2v1h-2zM57 2h3v1h-3zM0 1h1v1h-1zM54 1h5v1h-5zM0 0h2v1h-2zM48 0h9v1h-9z"/>
<path fill="#ea3f25" stroke="#ea3f25" stroke-width="0.04" d="M4 60h2v1h-2zM74 60h1v1h-1zM4 59h1v1h-1zM74 59h1v1h-1zM3 58h2v1h-2zM3 57h1v1h-1zM3 56h1v1h-1zM75 56h1v1h-1zM3 55h1v1h-1zM75 55h3v1h-3zM3 54h2v1h-2zM76 54h2v1h-2zM4 53h1v1h-1zM76 53h3v1h-3zM4 52h2v1h-2zM76 52h4v1h-4zM4 51h3v1h-3zM77 51h3v1h-3zM4 50h3v1h-3zM78 50h2v1h-2zM4 49h2v1h-2zM78 49h2v1h-2zM3 48h2v1h-2zM78 48h2v1h-2zM3 47h2v1h-2zM78 47h2v1h-2zM3 46h1v1h-1zM77 46h3v1h-3zM76 45h4v1h-4zM76 44h4v1h-4zM2 43h1v1h-1zM76 43h4v1h-4zM2 42h1v1h-1zM76 42h3v1h-3zM77 41h1v1h-1zM2 40h1v1h-1zM77 40h1v1h-1zM2 39h1v1h-1zM78 38h1v1h-1zM1 37h1v1h-1zM79 37h1v1h-1zM81 36h1v1h-1zM0 35h1v1h-1zM84 35h1v1h-1zM0 34h1v1h-1zM85 34h1v1h-1zM85 33h1v1h-1zM85 31h1v1h-1zM85 30h1v1h-1zM84 28h1v1h-1zM82 27h2v1h-2zM80 26h1v1h-1zM79 25h1v1h-1zM78 24h1v1h-1zM77 23h1v1h-1zM76 22h1v1h-1zM75 21h1v1h-1zM74 20h1v1h-1zM73 19h1v1h-1zM72 18h1v1h-1zM71 17h1v1h-1zM70 16h1v1h-1zM65 11h1v1h-1zM61 10h2v1h-2zM59 9h2v1h-2zM59 8h1v1h-1zM0 7h1v1h-1zM58 7h2v1h-2zM0 6h1v1h-1zM58 6h2v1h-2zM0 5h1v1h-1zM56 5h3v1h-3zM0 4h1v1h-1zM55 4h4v1h-4zM0 3h1v1h-1zM53 3h5v1h-5zM0 2h2v1h-2zM49 2h8v1h-8zM1 1h2v1h-2zM47 1h7v1h-7zM2 0h2v1h-2zM14 0h6v1h-6zM22 0h1v1h-1zM46 0h2v1h-2z"/>
<path fill="#ea4025" stroke="#ea4025" stroke-width="0.04" d="M6 60h1v1h-1zM5 59h2v1h-2zM5 58h1v1h-1zM74 58h1v1h-1zM4 57h2v1h-2zM74 57h1v1h-1zM4 56h2v1h-2zM74 56h1v1h-1zM4 55h2v1h-2zM5 54h1v1h-1zM75 54h1v1h-1zM5 53h2v1h-2zM75 53h1v1h-1zM6 52h2v1h-2zM75 52h1v1h-1zM7 51h2v1h-2zM76 51h1v1h-1zM7 50h1v1h-1zM76 50h2v1h-2zM6 49h1v1h-1zM77 49h1v1h-1zM5 48h2v1h-2zM77 48h1v1h-1zM5 47h1v1h-1zM77 47h1v1h-1zM4 46h1v1h-1zM76 46h1v1h-1zM3 45h2v1h-2zM3 44h1v1h-1zM3 43h1v1h-1zM3 42h1v1h-1zM3 41h1v1h-1zM76 41h1v1h-1zM3 40h1v1h-1zM76 40h1v1h-1zM77 39h1v1h-1zM2 38h1v1h-1zM77 38h1v1h-1zM78 37h1v1h-1zM1 36h1v1h-1zM80 36h1v1h-1zM83 35h1v1h-1zM84 34h1v1h-1zM0 33h1v1h-1zM85 32h1v1h-1zM84 29h1v1h-1zM83 28h1v1h-1zM81 27h1v1h-1zM79 26h1v1h-1zM73 20h1v1h-1zM72 19h1v1h-1zM69 16h1v1h-1zM68 15h1v1h-1zM67 14h1v1h-1zM66 13h1v1h-1zM65 12h1v1h-1zM63 11h2v1h-2zM0 10h1v1h-1zM60 10h1v1h-1zM0 9h1v1h-1zM58 9h1v1h-1zM0 8h2v1h-2zM58 8h1v1h-1zM1 7h1v1h-1zM57 7h1v1h-1zM1 6h2v1h-2zM55 6h3v1h-3zM1 5h2v1h-2zM54 5h2v1h-2zM1 4h3v1h-3zM53 4h2v1h-2zM1 3h3v1h-3zM51 3h2v1h-2zM2 2h3v1h-3zM47 2h2v1h-2zM3 1h3v1h-3zM46 1h1v1h-1zM4 0h10v1h-10zM20 0h2v1h-2zM23 0h2v1h-2zM45 0h1v1h-1z"/>
<path fill="#ea4225" stroke="#ea4225" stroke-width="0.04" d="M7 60h2v1h-2zM73 60h1v1h-1zM7 59h1v1h-1zM73 59h1v1h-1zM6 58h1v1h-1zM6 57h1v1h-1zM6 56h1v1h-1zM6 55h1v1h-1zM74 55h1v1h-1zM6 54h1v1h-1zM74 54h1v1h-1zM7 53h1v1h-1zM74 53h1v1h-1zM8 52h1v1h-1zM75 51h1v1h-1zM8 50h1v1h-1zM7 49h1v1h-1zM6 47h1v1h-1zM5 46h1v1h-1zM4 44h1v1h-1zM75 44h1v1h-1zM4 43h1v1h-1zM75 43h1v1h-1zM4 42h1v1h-1zM75 42h1v1h-1zM3 39h1v1h-1zM76 39h1v1h-1zM2 37h1v1h-1zM1 35h1v1h-1zM82 35h1v1h-1zM83 34h1v1h-1zM84 33h1v1h-1zM0 32h1v1h-1zM84 32h1v1h-1zM84 31h1v1h-1zM84 30h1v1h-1zM0 28h1v1h-1zM82 28h1v1h-1zM0 27h1v1h-1zM78 25h1v1h-1zM77 24h1v1h-1zM76 23h1v1h-1zM75 22h1v1h-1zM73 21h2v1h-2zM72 20h1v1h-1zM71 19h1v1h-1zM0 18h1v1h-1zM71 18h1v1h-1zM0 17h1v1h-1zM70 17h1v1h-1zM0 16h1v1h-1zM0 15h1v1h-1zM0 14h1v1h-1zM66 14h1v1h-1zM0 13h1v1h-1zM0 12h1v1h-1zM0 11h1v1h-1zM62 11h1v1h-1zM59 10h1v1h-1zM1 9h1v1h-1zM2 8h1v1h-1zM56 8h2v1h-2zM2 7h2v1h-2zM55 7h2v1h-2zM3 6h1v1h-1zM54 6h1v1h-1zM3 5h2v1h-2zM53 5h1v1h-1zM4 4h2v1h-2zM51 4h2v1h-2zM4 3h2v1h-2zM48 3h3v1h-3zM5 2h2v1h-2zM46 2h1v1h-1zM6 1h3v1h-3zM14 1h6v1h-6zM45 1h1v1h-1zM43 0h2v1h-2z"/>
<path fill="#eb4426" stroke="#eb4426" stroke-width="0.04" d="M9 60h1v1h-1zM8 59h1v1h-1zM7 58h1v1h-1zM73 58h1v1h-1zM7 57h1v1h-1zM73 57h1v1h-1zM7 56h1v1h-1zM7 55h1v1h-1zM7 54h1v1h-1zM8 53h1v1h-1zM9 52h1v1h-1zM74 52h1v1h-1zM9 51h1v1h-1zM75 50h1v1h-1zM76 49h1v1h-1zM7 48h1v1h-1zM76 48h1v1h-1zM76 47h1v1h-1zM6 46h1v1h-1zM5 45h1v1h-1zM5 44h1v1h-1zM4 41h1v1h-1zM3 38h1v1h-1zM77 37h1v1h-1zM2 36h1v1h-1zM79 36h1v1h-1zM81 35h1v1h-1zM1 34h1v1h-1zM0 31h1v1h-1zM0 30h1v1h-1zM0 29h1v1h-1zM83 29h1v1h-1zM79 27h2v1h-2zM0 26h1v1h-1zM78 26h1v1h-1zM77 25h1v1h-1zM76 24h1v1h-1zM74 22h1v1h-1zM72 21h1v1h-1zM0 20h1v1h-1zM71 20h1v1h-1zM0 19h1v1h-1zM70 19h1v1h-1zM70 18h1v1h-1zM69 17h1v1h-1zM68 16h1v1h-1zM1 15h1v1h-1zM67 15h1v1h-1zM65 13h1v1h-1zM64 12h1v1h-1zM1 11h1v1h-1zM59 11h3v1h-3zM1 10h1v1h-1zM58 10h1v1h-1zM2 9h1v1h-1zM57 9h1v1h-1zM3 8h1v1h-1zM55 8h1v1h-1zM53 7h2v1h-2zM4 6h1v1h-1zM52 6h2v1h-2zM5 5h1v1h-1zM51 5h2v1h-2zM6 4h1v1h-1zM50 4h1v1h-1zM6 3h2v1h-2zM46 3h2v1h-2zM7 2h2v1h-2zM45 2h1v1h-1zM9 1h5v1h-5zM20 1h5v1h-5zM43 1h2v1h-2zM25 0h1v1h-1zM41 0h2v1h-2z"/>
<path fill="#eb4626" stroke="#eb4626" stroke-width="0.04" d="M10 60h1v1h-1zM36 60h6v1h-6zM72 60h1v1h-1zM9 59h1v1h-1zM39 59h2v1h-2zM8 58h1v1h-1zM8 57h1v1h-1zM73 56h1v1h-1zM8 55h1v1h-1zM73 55h1v1h-1zM8 54h1v1h-1zM73 54h1v1h-1zM9 53h1v1h-1zM9 50h1v1h-1zM8 49h1v1h-1zM7 47h1v1h-1zM75 45h1v1h-1zM5 43h1v1h-1zM75 41h1v1h-1zM4 40h1v1h-1zM76 38h1v1h-1zM3 37h1v1h-1zM78 36h1v1h-1zM80 35h1v1h-1zM82 34h1v1h-1zM1 33h1v1h-1zM83 33h1v1h-1zM83 32h1v1h-1zM83 31h1v1h-1zM83 30h1v1h-1zM82 29h1v1h-1zM81 28h1v1h-1zM78 27h1v1h-1zM77 26h1v1h-1zM76 25h1v1h-1zM74 23h2v1h-2zM72 22h2v1h-2zM71 21h1v1h-1zM70 20h1v1h-1zM69 18h1v1h-1zM1 17h1v1h-1zM68 17h1v1h-1zM1 16h1v1h-1zM1 14h1v1h-1zM1 13h1v1h-1zM1 12h1v1h-1zM2 11h1v1h-1zM58 11h1v1h-1zM2 10h1v1h-1zM57 10h1v1h-1zM3 9h1v1h-1zM55 9h2v1h-2zM53 8h2v1h-2zM4 7h1v1h-1zM52 7h1v1h-1zM5 6h1v1h-1zM51 6h1v1h-1zM6 5h1v1h-1zM50 5h1v1h-1zM7 4h1v1h-1zM47 4h3v1h-3zM8 3h1v1h-1zM45 3h1v1h-1zM9 2h11v1h-11zM43 2h2v1h-2zM25 1h1v1h-1zM40 1h3v1h-3zM26 0h1v1h-1zM33 0h8v1h-8z"/>
<path fill="#eb4926" stroke="#eb4926" stroke-width="0.04" d="M34 60h2v1h-2zM42 60h2v1h-2zM10 59h1v1h-1zM35 59h4v1h-4zM41 59h2v1h-2zM72 59h1v1h-1zM9 58h1v1h-1zM39 58h3v1h-3zM72 58h1v1h-1zM9 57h1v1h-1zM8 56h1v1h-1zM9 54h1v1h-1zM73 53h1v1h-1zM10 52h1v1h-1zM74 51h1v1h-1zM7 46h1v1h-1zM6 45h1v1h-1zM5 42h1v1h-1zM75 40h1v1h-1zM4 39h1v1h-1zM77 36h1v1h-1zM2 35h1v1h-1zM78 35h2v1h-2zM81 34h1v1h-1zM82 33h1v1h-1zM82 32h1v1h-1zM82 31h1v1h-1zM1 30h1v1h-1zM81 30h2v1h-2zM1 29h1v1h-1zM80 29h2v1h-2zM1 28h1v1h-1zM78 28h3v1h-3zM0 25h1v1h-1zM75 24h1v1h-1zM73 23h1v1h-1zM71 22h1v1h-1zM0 21h1v1h-1zM70 21h1v1h-1zM69 19h1v1h-1zM1 18h1v1h-1zM67 16h1v1h-1zM2 15h1v1h-1zM66 15h1v1h-1zM2 14h1v1h-1zM65 14h1v1h-1zM2 13h1v1h-1zM2 12h2v1h-2zM58 12h2v1h-2zM62 12h2v1h-2zM3 11h2v1h-2zM57 11h1v1h-1zM3 10h2v1h-2zM55 10h2v1h-2zM4 9h1v1h-1zM53 9h2v1h-2zM4 8h2v1h-2zM52 8h1v1h-1zM5 7h2v1h-2zM51 7h1v1h-1zM6 6h2v1h-2zM50 6h1v1h-1zM7 5h2v1h-2zM47 5h3v1h-3zM8 4h4v1h-4zM43 4h4v1h-4zM9 3h10v1h-10zM40 3h5v1h-5zM20 2h1v1h-1zM37 2h6v1h-6zM26 1h1v1h-1zM34 1h6v1h-6zM27 0h1v1h-1zM32 0h1v1h-1z"/>
<path fill="#eb4b27" stroke="#eb4b27" stroke-width="0.04" d="M11 60h1v1h-1zM32 60h2v1h-2zM44 60h1v1h-1zM33 59h2v1h-2zM43 59h1v1h-1zM10 58h1v1h-1zM35 58h4v1h-4zM10 57h1v1h-1zM39 57h2v1h-2zM72 57h1v1h-1zM9 56h1v1h-1zM72 56h1v1h-1zM9 55h2v1h-2zM10 54h1v1h-1zM10 53h1v1h-1zM73 52h1v1h-1zM10 51h1v1h-1zM75 49h1v1h-1zM8 48h1v1h-1zM75 46h1v1h-1zM6 44h1v1h-1zM76 37h1v1h-1zM3 36h1v1h-1zM79 34h2v1h-2zM80 33h2v1h-2zM1 32h1v1h-1zM80 32h2v1h-2zM1 31h1v1h-1zM80 31h2v1h-2zM79 30h2v1h-2zM78 29h2v1h-2zM1 27h1v1h-1zM77 27h1v1h-1zM76 26h1v1h-1zM75 25h1v1h-1zM0 24h1v1h-1zM74 24h1v1h-1zM72 23h1v1h-1zM0 22h1v1h-1zM1 20h1v1h-1zM69 20h1v1h-1zM1 19h1v1h-1zM68 18h1v1h-1zM2 16h1v1h-1zM3 13h1v1h-1zM64 13h1v1h-1zM4 12h2v1h-2zM57 12h1v1h-1zM60 12h2v1h-2zM5 11h2v1h-2zM55 11h2v1h-2zM5 10h2v1h-2zM54 10h1v1h-1zM5 9h2v1h-2zM6 8h1v1h-1zM7 7h1v1h-1zM8 6h1v1h-1zM49 6h1v1h-1zM9 5h2v1h-2zM15 5h1v1h-1zM43 5h4v1h-4zM12 4h6v1h-6zM40 4h3v1h-3zM19 3h1v1h-1zM38 3h2v1h-2zM21 2h5v1h-5zM36 2h1v1h-1zM27 1h1v1h-1zM33 1h1v1h-1zM28 0h1v1h-1zM31 0h1v1h-1z"/>
<path fill="#eb4d27" stroke="#eb4d27" stroke-width="0.04" d="M31 60h1v1h-1zM45 60h1v1h-1zM56 60h2v1h-2zM71 60h1v1h-1zM11 59h1v1h-1zM32 59h1v1h-1zM44 59h1v1h-1zM71 59h1v1h-1zM33 58h2v1h-2zM42 58h1v1h-1zM71 58h1v1h-1zM35 57h4v1h-4zM41 57h1v1h-1zM10 56h1v1h-1zM11 55h1v1h-1zM72 55h1v1h-1zM11 54h1v1h-1zM74 50h1v1h-1zM8 47h1v1h-1zM7 45h1v1h-1zM5 41h1v1h-1zM75 39h1v1h-1zM4 38h1v1h-1zM77 35h1v1h-1zM2 34h1v1h-1zM78 34h1v1h-1zM79 33h1v1h-1zM79 32h1v1h-1zM79 31h1v1h-1zM78 30h1v1h-1zM77 28h1v1h-1zM76 27h1v1h-1zM1 26h1v1h-1zM75 26h1v1h-1zM74 25h1v1h-1zM73 24h1v1h-1zM0 23h1v1h-1zM71 23h1v1h-1zM70 22h1v1h-1zM69 21h1v1h-1zM68 19h1v1h-1zM2 17h1v1h-1zM67 17h1v1h-1zM3 15h1v1h-1zM65 15h1v1h-1zM3 14h1v1h-1zM4 13h1v1h-1zM63 13h1v1h-1zM56 12h1v1h-1zM54 11h1v1h-1zM7 10h1v1h-1zM53 10h1v1h-1zM52 9h1v1h-1zM7 8h1v1h-1zM51 8h1v1h-1zM8 7h1v1h-1zM49 7h2v1h-2zM9 6h2v1h-2zM46 6h3v1h-3zM11 5h4v1h-4zM16 5h1v1h-1zM41 5h2v1h-2zM18 4h1v1h-1zM39 4h1v1h-1zM20 3h1v1h-1zM36 3h2v1h-2zM26 2h1v1h-1zM34 2h2v1h-2zM28 1h1v1h-1zM32 1h1v1h-1zM29 0h2v1h-2z"/>
<path fill="#eb5027" stroke="#eb5027" stroke-width="0.04" d="M30 60h1v1h-1zM46 60h2v1h-2zM54 60h2v1h-2zM58 60h2v1h-2zM45 59h1v1h-1zM55 59h3v1h-3zM11 58h1v1h-1zM43 58h2v1h-2zM11 57h1v1h-1zM34 57h1v1h-1zM42 57h1v1h-1zM71 57h1v1h-1zM11 56h1v1h-1zM39 56h2v1h-2zM71 56h1v1h-1zM72 54h1v1h-1zM11 53h1v1h-1zM11 52h1v1h-1zM9 49h1v1h-1zM75 47h1v1h-1zM6 43h1v1h-1zM5 40h1v1h-1zM76 36h1v1h-1zM77 34h1v1h-1zM78 33h1v1h-1zM78 32h1v1h-1zM78 31h1v1h-1zM2 30h1v1h-1zM77 30h1v1h-1zM77 29h1v1h-1zM76 28h1v1h-1zM73 25h1v1h-1zM72 24h1v1h-1zM67 18h1v1h-1zM66 16h1v1h-1zM4 14h1v1h-1zM64 14h1v1h-1zM5 13h1v1h-1zM56 13h4v1h-4zM62 13h1v1h-1zM6 12h1v1h-1zM55 12h1v1h-1zM7 11h1v1h-1zM7 9h1v1h-1zM50 8h1v1h-1zM9 7h1v1h-1zM48 7h1v1h-1zM11 6h1v1h-1zM41 6h5v1h-5zM17 5h1v1h-1zM40 5h1v1h-1zM38 4h1v1h-1zM27 2h1v1h-1zM33 2h1v1h-1zM29 1h1v1h-1zM31 1h1v1h-1z"/>
<path fill="#eb5228" stroke="#eb5228" stroke-width="0.04" d="M48 60h1v1h-1zM53 60h1v1h-1zM60 60h1v1h-1zM70 60h1v1h-1zM31 59h1v1h-1zM46 59h2v1h-2zM54 59h1v1h-1zM58 59h2v1h-2zM70 59h1v1h-1zM32 58h1v1h-1zM45 58h1v1h-1zM55 58h4v1h-4zM33 57h1v1h-1zM43 57h1v1h-1zM34 56h5v1h-5zM41 56h1v1h-1zM12 55h1v1h-1zM39 55h1v1h-1zM71 55h1v1h-1zM12 54h1v1h-1zM72 53h1v1h-1zM10 50h1v1h-1zM75 48h1v1h-1zM8 46h1v1h-1zM75 38h1v1h-1zM4 37h1v1h-1zM3 35h1v1h-1zM76 35h1v1h-1zM2 33h1v1h-1zM77 33h1v1h-1zM77 32h1v1h-1zM2 31h1v1h-1zM77 31h1v1h-1zM2 29h1v1h-1zM76 29h1v1h-1zM75 28h1v1h-1zM75 27h1v1h-1zM73 26h2v1h-2zM1 25h1v1h-1zM72 25h1v1h-1zM71 24h1v1h-1zM70 23h1v1h-1zM69 22h1v1h-1zM1 21h1v1h-1zM68 20h1v1h-1zM2 18h1v1h-1zM3 16h1v1h-1zM65 16h1v1h-1zM64 15h1v1h-1zM55 13h1v1h-1zM60 13h2v1h-2zM54 12h1v1h-1zM53 11h1v1h-1zM52 10h1v1h-1zM51 9h1v1h-1zM8 8h1v1h-1zM48 8h2v1h-2zM10 7h1v1h-1zM42 7h6v1h-6zM12 6h1v1h-1zM14 6h1v1h-1zM39 5h1v1h-1zM19 4h1v1h-1zM37 4h1v1h-1zM21 3h1v1h-1zM35 3h1v1h-1zM28 2h1v1h-1zM32 2h1v1h-1zM30 1h1v1h-1z"/>
<path fill="#eb5528" stroke="#eb5528" stroke-width="0.04" d="M12 60h1v1h-1zM29 60h1v1h-1zM49 60h4v1h-4zM61 60h3v1h-3zM12 59h1v1h-1zM48 59h2v1h-2zM52 59h2v1h-2zM60 59h3v1h-3zM46 58h3v1h-3zM53 58h2v1h-2zM59 58h2v1h-2zM70 58h1v1h-1zM44 57h2v1h-2zM54 57h6v1h-6zM12 56h1v1h-1zM42 56h1v1h-1zM38 55h1v1h-1zM40 55h2v1h-2zM39 54h1v1h-1zM12 53h1v1h-1zM11 51h1v1h-1zM73 51h1v1h-1zM7 44h1v1h-1zM6 42h1v1h-1zM5 39h1v1h-1zM75 37h1v1h-1zM76 34h1v1h-1zM76 33h1v1h-1zM2 32h1v1h-1zM76 32h1v1h-1zM76 31h1v1h-1zM76 30h1v1h-1zM75 29h1v1h-1zM2 28h1v1h-1zM74 28h1v1h-1zM73 27h2v1h-2zM72 26h1v1h-1zM71 25h1v1h-1zM1 22h1v1h-1zM68 21h1v1h-1zM2 19h1v1h-1zM67 19h1v1h-1zM66 17h1v1h-1zM4 15h1v1h-1zM63 14h1v1h-1zM52 11h1v1h-1zM8 10h1v1h-1zM51 10h1v1h-1zM8 9h1v1h-1zM50 9h1v1h-1zM9 8h1v1h-1zM47 8h1v1h-1zM41 7h1v1h-1zM13 6h1v1h-1zM15 6h1v1h-1zM40 6h1v1h-1zM38 5h1v1h-1zM36 4h1v1h-1zM25 3h1v1h-1zM34 3h1v1h-1zM29 2h1v1h-1z"/>
<path fill="#eb5829" stroke="#eb5829" stroke-width="0.04" d="M64 60h2v1h-2zM69 60h1v1h-1zM30 59h1v1h-1zM50 59h2v1h-2zM63 59h1v1h-1zM12 58h1v1h-1zM31 58h1v1h-1zM49 58h1v1h-1zM52 58h1v1h-1zM61 58h3v1h-3zM12 57h1v1h-1zM32 57h1v1h-1zM46 57h2v1h-2zM53 57h1v1h-1zM60 57h3v1h-3zM70 57h1v1h-1zM33 56h1v1h-1zM43 56h3v1h-3zM54 56h8v1h-8zM70 56h1v1h-1zM13 55h1v1h-1zM35 55h3v1h-3zM42 55h1v1h-1zM38 54h1v1h-1zM40 54h1v1h-1zM71 54h1v1h-1zM72 52h1v1h-1zM74 49h1v1h-1zM9 48h1v1h-1zM9 47h1v1h-1zM8 45h1v1h-1zM4 36h1v1h-1zM75 30h1v1h-1zM74 29h1v1h-1zM73 28h1v1h-1zM72 27h1v1h-1zM71 26h1v1h-1zM1 24h1v1h-1zM70 24h1v1h-1zM1 23h1v1h-1zM69 23h1v1h-1zM68 22h1v1h-1zM66 18h1v1h-1zM65 17h1v1h-1zM64 16h1v1h-1zM5 14h1v1h-1zM55 14h3v1h-3zM62 14h1v1h-1zM6 13h1v1h-1zM54 13h1v1h-1zM7 12h1v1h-1zM53 12h1v1h-1zM8 11h1v1h-1zM48 9h2v1h-2zM44 8h3v1h-3zM11 7h1v1h-1zM16 6h1v1h-1zM18 5h1v1h-1zM20 4h1v1h-1zM22 3h3v1h-3zM26 3h1v1h-1zM30 2h2v1h-2z"/>
<path fill="#ec5a29" stroke="#ec5a29" stroke-width="0.04" d="M13 60h1v1h-1zM28 60h1v1h-1zM66 60h3v1h-3zM64 59h2v1h-2zM69 59h1v1h-1zM50 58h2v1h-2zM64 58h1v1h-1zM48 57h2v1h-2zM52 57h1v1h-1zM63 57h1v1h-1zM13 56h1v1h-1zM46 56h2v1h-2zM53 56h1v1h-1zM62 56h1v1h-1zM34 55h1v1h-1zM43 55h3v1h-3zM55 55h8v1h-8zM13 54h1v1h-1zM36 54h2v1h-2zM41 54h2v1h-2zM38 53h3v1h-3zM12 52h1v1h-1zM10 49h1v1h-1zM7 43h1v1h-1zM74 43h1v1h-1zM74 42h1v1h-1zM6 41h1v1h-1zM5 38h1v1h-1zM75 36h1v1h-1zM75 35h1v1h-1zM3 34h1v1h-1zM75 34h1v1h-1zM75 33h1v1h-1zM75 32h1v1h-1zM75 31h1v1h-1zM3 30h1v1h-1zM72 28h1v1h-1zM2 27h1v1h-1zM71 27h1v1h-1zM70 25h1v1h-1zM2 20h1v1h-1zM67 20h1v1h-1zM66 19h1v1h-1zM65 18h1v1h-1zM3 17h1v1h-1zM64 17h1v1h-1zM63 15h1v1h-1zM58 14h1v1h-1zM53 13h1v1h-1zM52 12h1v1h-1zM51 11h1v1h-1zM50 10h1v1h-1zM9 9h1v1h-1zM47 9h1v1h-1zM10 8h1v1h-1zM42 8h2v1h-2zM12 7h1v1h-1zM39 6h1v1h-1zM37 5h1v1h-1zM35 4h1v1h-1zM27 3h1v1h-1zM33 3h1v1h-1z"/>
<path fill="#ec5d2a" stroke="#ec5d2a" stroke-width="0.04" d="M27 60h1v1h-1zM13 59h1v1h-1zM29 59h1v1h-1zM66 59h3v1h-3zM13 58h1v1h-1zM30 58h1v1h-1zM65 58h1v1h-1zM69 58h1v1h-1zM13 57h1v1h-1zM50 57h2v1h-2zM64 57h1v1h-1zM48 56h2v1h-2zM52 56h1v1h-1zM63 56h2v1h-2zM46 55h2v1h-2zM53 55h2v1h-2zM63 55h1v1h-1zM70 55h1v1h-1zM35 54h1v1h-1zM43 54h3v1h-3zM55 54h8v1h-8zM36 53h2v1h-2zM41 53h1v1h-1zM71 53h1v1h-1zM11 50h1v1h-1zM73 50h1v1h-1zM9 46h1v1h-1zM74 46h1v1h-1zM74 45h1v1h-1zM6 40h1v1h-1zM74 40h1v1h-1zM3 31h1v1h-1zM74 30h1v1h-1zM73 29h1v1h-1zM71 28h1v1h-1zM2 26h1v1h-1zM70 26h1v1h-1zM69 24h1v1h-1zM68 23h1v1h-1zM67 21h1v1h-1zM4 16h1v1h-1zM54 14h1v1h-1zM59 14h1v1h-1zM61 14h1v1h-1zM49 10h1v1h-1zM44 9h3v1h-3zM41 8h1v1h-1zM40 7h1v1h-1zM17 6h1v1h-1zM28 3h1v1h-1z"/>
<path fill="#ec602a" stroke="#ec602a" stroke-width="0.04" d="M14 60h1v1h-1zM66 58h3v1h-3zM31 57h1v1h-1zM65 57h2v1h-2zM32 56h1v1h-1zM50 56h2v1h-2zM65 56h1v1h-1zM33 55h1v1h-1zM48 55h1v1h-1zM52 55h1v1h-1zM64 55h1v1h-1zM34 54h1v1h-1zM46 54h2v1h-2zM53 54h2v1h-2zM63 54h1v1h-1zM13 53h1v1h-1zM42 53h3v1h-3zM56 53h1v1h-1zM37 52h5v1h-5zM12 51h1v1h-1zM72 51h1v1h-1zM10 48h1v1h-1zM73 45h1v1h-1zM8 44h1v1h-1zM74 44h1v1h-1zM74 41h1v1h-1zM5 37h1v1h-1zM4 35h1v1h-1zM3 33h1v1h-1zM74 33h1v1h-1zM74 32h1v1h-1zM74 31h1v1h-1zM72 29h1v1h-1zM70 27h1v1h-1zM69 25h1v1h-1zM68 24h1v1h-1zM67 22h1v1h-1zM2 21h1v1h-1zM65 19h1v1h-1zM3 18h1v1h-1zM63 16h1v1h-1zM5 15h1v1h-1zM53 14h1v1h-1zM60 14h1v1h-1zM52 13h1v1h-1zM51 12h1v1h-1zM50 11h1v1h-1zM9 10h1v1h-1zM47 10h2v1h-2zM43 9h1v1h-1zM11 8h1v1h-1zM13 7h1v1h-1zM38 6h1v1h-1zM19 5h1v1h-1zM36 5h1v1h-1zM21 4h1v1h-1zM34 4h1v1h-1zM29 3h1v1h-1zM32 3h1v1h-1z"/>
<path fill="#ec632b" stroke="#ec632b" stroke-width="0.04" d="M26 60h1v1h-1zM14 59h1v1h-1zM28 59h1v1h-1zM67 57h3v1h-3zM66 56h2v1h-2zM69 56h1v1h-1zM49 55h3v1h-3zM65 55h1v1h-1zM48 54h2v1h-2zM52 54h1v1h-1zM64 54h1v1h-1zM70 54h1v1h-1zM35 53h1v1h-1zM45 53h3v1h-3zM54 53h2v1h-2zM57 53h6v1h-6zM13 52h1v1h-1zM36 52h1v1h-1zM42 52h3v1h-3zM71 52h1v1h-1zM37 51h5v1h-5zM12 50h1v1h-1zM11 49h1v1h-1zM74 48h1v1h-1zM10 47h1v1h-1zM74 47h1v1h-1zM9 45h1v1h-1zM7 42h1v1h-1zM74 39h1v1h-1zM74 34h1v1h-1zM3 32h1v1h-1zM73 31h1v1h-1zM72 30h2v1h-2zM3 29h1v1h-1zM71 29h1v1h-1zM70 28h1v1h-1zM69 26h1v1h-1zM2 25h1v1h-1zM67 23h1v1h-1zM66 20h1v1h-1zM64 18h1v1h-1zM54 15h3v1h-3zM62 15h1v1h-1zM6 14h1v1h-1zM52 14h1v1h-1zM7 13h1v1h-1zM51 13h1v1h-1zM50 12h1v1h-1zM46 11h4v1h-4zM44 10h3v1h-3zM10 9h1v1h-1zM42 9h1v1h-1zM14 7h1v1h-1zM39 7h1v1h-1zM30 3h2v1h-2z"/>
<path fill="#ec652b" stroke="#ec652b" stroke-width="0.04" d="M15 60h1v1h-1zM14 58h1v1h-1zM29 58h1v1h-1zM14 57h1v1h-1zM14 56h1v1h-1zM68 56h1v1h-1zM14 55h1v1h-1zM66 55h1v1h-1zM69 55h1v1h-1zM14 54h1v1h-1zM50 54h2v1h-2zM34 53h1v1h-1zM48 53h1v1h-1zM52 53h2v1h-2zM63 53h1v1h-1zM35 52h1v1h-1zM45 52h1v1h-1zM42 51h1v1h-1zM73 49h1v1h-1zM11 48h1v1h-1zM6 39h1v1h-1zM74 38h1v1h-1zM74 37h1v1h-1zM74 35h1v1h-1zM73 33h1v1h-1zM73 32h1v1h-1zM72 31h1v1h-1zM69 27h1v1h-1zM68 25h1v1h-1zM67 24h1v1h-1zM2 22h1v1h-1zM66 21h1v1h-1zM3 19h1v1h-1zM63 17h1v1h-1zM57 15h1v1h-1zM8 12h1v1h-1zM49 12h1v1h-1zM45 11h1v1h-1zM43 10h1v1h-1zM40 8h1v1h-1zM37 6h1v1h-1zM35 5h1v1h-1zM22 4h1v1h-1z"/>
<path fill="#ec682c" stroke="#ec682c" stroke-width="0.04" d="M27 59h1v1h-1zM30 57h1v1h-1zM31 56h1v1h-1zM32 55h1v1h-1zM67 55h2v1h-2zM33 54h1v1h-1zM65 54h1v1h-1zM14 53h1v1h-1zM49 53h3v1h-3zM64 53h1v1h-1zM70 53h1v1h-1zM46 52h1v1h-1zM55 52h3v1h-3zM13 51h1v1h-1zM36 51h1v1h-1zM43 51h1v1h-1zM38 50h4v1h-4zM72 50h1v1h-1zM12 49h1v1h-1zM10 46h1v1h-1zM8 43h1v1h-1zM73 42h1v1h-1zM7 41h1v1h-1zM5 36h1v1h-1zM74 36h1v1h-1zM4 34h1v1h-1zM73 34h1v1h-1zM72 32h1v1h-1zM71 30h1v1h-1zM3 28h1v1h-1zM68 26h1v1h-1zM67 25h1v1h-1zM2 24h1v1h-1zM2 23h1v1h-1zM66 23h1v1h-1zM66 22h1v1h-1zM65 20h1v1h-1zM64 19h1v1h-1zM4 17h1v1h-1zM53 15h1v1h-1zM58 15h1v1h-1zM51 14h1v1h-1zM49 13h2v1h-2zM45 12h4v1h-4zM9 11h1v1h-1zM43 11h2v1h-2zM41 9h1v1h-1zM12 8h1v1h-1zM15 7h1v1h-1zM18 6h1v1h-1zM23 4h5v1h-5zM33 4h1v1h-1z"/>
<path fill="#ed6b2c" stroke="#ed6b2c" stroke-width="0.04" d="M16 60h1v1h-1zM25 60h1v1h-1zM15 59h1v1h-1zM26 59h1v1h-1zM15 58h1v1h-1zM28 58h1v1h-1zM66 54h4v1h-4zM65 53h1v1h-1zM14 52h1v1h-1zM34 52h1v1h-1zM47 52h2v1h-2zM51 52h4v1h-4zM58 52h5v1h-5zM70 52h1v1h-1zM35 51h1v1h-1zM44 51h1v1h-1zM71 51h1v1h-1zM13 50h1v1h-1zM37 50h1v1h-1zM42 50h1v1h-1zM11 47h1v1h-1zM9 44h1v1h-1zM73 43h1v1h-1zM6 38h1v1h-1zM71 31h1v1h-1zM70 29h1v1h-1zM69 28h1v1h-1zM68 27h1v1h-1zM66 24h1v1h-1zM3 20h1v1h-1zM5 16h1v1h-1zM62 16h1v1h-1zM52 15h1v1h-1zM59 15h1v1h-1zM61 15h1v1h-1zM50 14h1v1h-1zM46 13h3v1h-3zM44 12h1v1h-1zM42 10h1v1h-1zM38 7h1v1h-1zM36 6h1v1h-1zM20 5h1v1h-1z"/>
<path fill="#ed6e2d" stroke="#ed6e2d" stroke-width="0.04" d="M15 57h1v1h-1zM29 57h1v1h-1zM15 56h1v1h-1zM15 55h1v1h-1zM15 54h1v1h-1zM32 54h1v1h-1zM33 53h1v1h-1zM66 53h1v1h-1zM69 53h1v1h-1zM49 52h2v1h-2zM63 52h2v1h-2zM45 51h2v1h-2zM36 50h1v1h-1zM43 50h1v1h-1zM39 49h3v1h-3zM72 49h1v1h-1zM12 48h1v1h-1zM73 48h1v1h-1zM73 47h1v1h-1zM73 46h1v1h-1zM10 45h1v1h-1zM73 44h1v1h-1zM7 40h1v1h-1zM73 35h1v1h-1zM72 33h1v1h-1zM3 27h1v1h-1zM67 26h1v1h-1zM66 25h1v1h-1zM65 21h1v1h-1zM63 18h1v1h-1zM55 16h1v1h-1zM6 15h1v1h-1zM51 15h1v1h-1zM60 15h1v1h-1zM46 14h4v1h-4zM45 13h1v1h-1zM43 12h1v1h-1zM10 10h1v1h-1zM11 9h1v1h-1zM40 9h1v1h-1zM13 8h1v1h-1zM39 8h1v1h-1zM16 7h1v1h-1zM34 5h1v1h-1zM28 4h1v1h-1zM32 4h1v1h-1z"/>
<path fill="#ed712e" stroke="#ed712e" stroke-width="0.04" d="M17 60h1v1h-1zM16 59h1v1h-1zM27 58h1v1h-1zM30 56h1v1h-1zM31 55h1v1h-1zM15 53h1v1h-1zM67 53h2v1h-2zM65 52h1v1h-1zM68 52h2v1h-2zM14 51h1v1h-1zM34 51h1v1h-1zM47 51h2v1h-2zM51 51h1v1h-1zM70 51h1v1h-1zM35 50h1v1h-1zM44 50h1v1h-1zM71 50h1v1h-1zM13 49h1v1h-1zM37 49h2v1h-2zM42 49h1v1h-1zM8 42h1v1h-1zM73 41h1v1h-1zM73 40h1v1h-1zM73 39h1v1h-1zM73 37h1v1h-1zM73 36h1v1h-1zM5 35h1v1h-1zM72 34h1v1h-1zM4 33h1v1h-1zM71 32h1v1h-1zM4 31h1v1h-1zM4 30h1v1h-1zM70 30h1v1h-1zM68 28h1v1h-1zM67 27h1v1h-1zM66 26h1v1h-1zM65 24h1v1h-1zM65 23h1v1h-1zM65 22h1v1h-1zM3 21h1v1h-1zM4 18h1v1h-1zM53 16h2v1h-2zM47 15h4v1h-4zM7 14h1v1h-1zM45 14h1v1h-1zM44 13h1v1h-1zM42 11h1v1h-1zM41 10h1v1h-1zM29 4h1v1h-1zM31 4h1v1h-1z"/>
<path fill="#ed742e" stroke="#ed742e" stroke-width="0.04" d="M24 60h1v1h-1zM17 59h1v1h-1zM25 59h1v1h-1zM16 58h1v1h-1zM16 57h1v1h-1zM28 57h1v1h-1zM16 56h1v1h-1zM32 53h1v1h-1zM15 52h1v1h-1zM33 52h1v1h-1zM66 52h2v1h-2zM49 51h2v1h-2zM52 51h5v1h-5zM68 51h2v1h-2zM14 50h1v1h-1zM45 50h2v1h-2zM70 50h1v1h-1zM36 49h1v1h-1zM43 49h1v1h-1zM71 49h1v1h-1zM72 48h1v1h-1zM12 47h1v1h-1zM11 46h1v1h-1zM9 43h1v1h-1zM72 43h1v1h-1zM72 42h1v1h-1zM73 38h1v1h-1zM6 37h1v1h-1zM72 35h1v1h-1zM71 33h1v1h-1zM4 32h1v1h-1zM70 31h1v1h-1zM69 30h1v1h-1zM69 29h1v1h-1zM66 27h1v1h-1zM3 26h1v1h-1zM65 25h1v1h-1zM64 20h1v1h-1zM52 16h1v1h-1zM56 16h1v1h-1zM46 15h1v1h-1zM8 13h1v1h-1zM43 13h1v1h-1zM42 12h1v1h-1zM37 7h1v1h-1zM19 6h1v1h-1zM35 6h1v1h-1zM21 5h1v1h-1zM30 4h1v1h-1z"/>
<path fill="#ed772f" stroke="#ed772f" stroke-width="0.04" d="M18 60h1v1h-1zM17 58h1v1h-1zM26 58h1v1h-1zM29 56h1v1h-1zM16 55h1v1h-1zM30 55h1v1h-1zM16 54h1v1h-1zM31 54h1v1h-1zM15 51h1v1h-1zM57 51h2v1h-2zM64 51h4v1h-4zM34 50h1v1h-1zM47 50h3v1h-3zM69 50h1v1h-1zM14 49h1v1h-1zM44 49h1v1h-1zM13 48h1v1h-1zM39 48h3v1h-3zM7 39h1v1h-1zM71 34h1v1h-1zM69 31h1v1h-1zM68 30h1v1h-1zM67 28h1v1h-1zM65 26h1v1h-1zM3 25h1v1h-1zM3 23h1v1h-1zM3 22h1v1h-1zM4 19h1v1h-1zM63 19h1v1h-1zM5 17h1v1h-1zM46 16h2v1h-2zM51 16h1v1h-1zM45 15h1v1h-1zM44 14h1v1h-1zM9 12h1v1h-1zM41 11h1v1h-1zM12 9h1v1h-1zM14 8h1v1h-1zM38 8h1v1h-1zM17 7h1v1h-1zM33 5h1v1h-1z"/>
<path fill="#ee7a30" stroke="#ee7a30" stroke-width="0.04" d="M19 60h2v1h-2zM18 59h1v1h-1zM17 57h1v1h-1zM27 57h1v1h-1zM16 53h1v1h-1zM32 52h1v1h-1zM33 51h1v1h-1zM59 51h5v1h-5zM50 50h2v1h-2zM68 50h1v1h-1zM35 49h1v1h-1zM45 49h2v1h-2zM70 49h1v1h-1zM37 48h2v1h-2zM42 48h1v1h-1zM71 48h1v1h-1zM12 46h1v1h-1zM11 45h1v1h-1zM10 44h1v1h-1zM72 44h1v1h-1zM8 41h1v1h-1zM72 37h1v1h-1zM72 36h1v1h-1zM71 35h1v1h-1zM70 32h1v1h-1zM4 29h1v1h-1zM68 29h1v1h-1zM65 27h1v1h-1zM3 24h1v1h-1zM64 24h1v1h-1zM64 23h1v1h-1zM64 22h1v1h-1zM64 21h1v1h-1zM62 17h1v1h-1zM45 16h1v1h-1zM48 16h3v1h-3zM57 16h1v1h-1zM61 16h1v1h-1zM42 13h1v1h-1zM40 10h1v1h-1zM39 9h1v1h-1zM36 7h1v1h-1zM22 5h1v1h-1z"/>
<path fill="#ee7d30" stroke="#ee7d30" stroke-width="0.04" d="M21 60h3v1h-3zM19 59h1v1h-1zM24 59h1v1h-1zM18 58h1v1h-1zM25 58h1v1h-1zM18 57h1v1h-1zM17 56h1v1h-1zM28 56h1v1h-1zM17 55h1v1h-1zM31 53h1v1h-1zM16 52h1v1h-1zM15 50h1v1h-1zM52 50h2v1h-2zM67 50h1v1h-1zM47 49h2v1h-2zM69 49h1v1h-1zM14 48h1v1h-1zM36 48h1v1h-1zM43 48h1v1h-1zM13 47h1v1h-1zM72 47h1v1h-1zM72 45h1v1h-1zM72 41h1v1h-1zM72 40h1v1h-1zM72 39h1v1h-1zM72 38h1v1h-1zM6 36h1v1h-1zM71 36h1v1h-1zM5 34h1v1h-1zM70 34h1v1h-1zM70 33h1v1h-1zM68 31h1v1h-1zM67 29h1v1h-1zM65 28h2v1h-2zM64 26h1v1h-1zM64 25h1v1h-1zM4 20h1v1h-1zM45 17h3v1h-3zM51 17h3v1h-3zM6 16h1v1h-1zM44 16h1v1h-1zM58 16h1v1h-1zM44 15h1v1h-1zM43 14h1v1h-1zM41 12h1v1h-1zM10 11h1v1h-1zM11 10h1v1h-1zM20 6h1v1h-1zM34 6h1v1h-1zM23 5h5v1h-5zM32 5h1v1h-1z"/>
<path fill="#ee8031" stroke="#ee8031" stroke-width="0.04" d="M20 59h2v1h-2zM19 58h1v1h-1zM18 56h1v1h-1zM29 55h1v1h-1zM17 54h1v1h-1zM30 54h1v1h-1zM17 53h1v1h-1zM16 51h1v1h-1zM32 51h1v1h-1zM33 50h1v1h-1zM54 50h2v1h-2zM65 50h2v1h-2zM15 49h1v1h-1zM34 49h1v1h-1zM49 49h2v1h-2zM68 49h1v1h-1zM35 48h1v1h-1zM44 48h2v1h-2zM72 46h1v1h-1zM9 42h1v1h-1zM7 38h1v1h-1zM67 30h1v1h-1zM4 28h1v1h-1zM64 27h1v1h-1zM63 20h1v1h-1zM5 18h1v1h-1zM45 18h2v1h-2zM62 18h1v1h-1zM44 17h1v1h-1zM48 17h3v1h-3zM54 17h1v1h-1zM43 16h1v1h-1zM59 16h2v1h-2zM7 15h1v1h-1zM43 15h1v1h-1zM42 14h1v1h-1zM40 11h1v1h-1zM13 9h1v1h-1zM15 8h1v1h-1zM37 8h1v1h-1zM18 7h1v1h-1zM28 5h1v1h-1z"/>
<path fill="#ee8332" stroke="#ee8332" stroke-width="0.04" d="M22 59h2v1h-2zM20 58h1v1h-1zM19 57h1v1h-1zM26 57h1v1h-1zM18 55h1v1h-1zM17 52h1v1h-1zM31 52h1v1h-1zM16 50h1v1h-1zM56 50h2v1h-2zM64 50h1v1h-1zM51 49h1v1h-1zM46 48h1v1h-1zM70 48h1v1h-1zM14 47h1v1h-1zM37 47h5v1h-5zM13 46h1v1h-1zM8 40h1v1h-1zM71 37h1v1h-1zM70 35h1v1h-1zM5 33h1v1h-1zM69 32h1v1h-1zM64 28h1v1h-1zM63 26h1v1h-1zM63 25h1v1h-1zM63 24h1v1h-1zM63 23h1v1h-1zM63 22h1v1h-1zM4 21h1v1h-1zM63 21h1v1h-1zM47 18h1v1h-1zM55 17h1v1h-1zM42 15h1v1h-1zM8 14h1v1h-1zM41 13h1v1h-1zM39 10h1v1h-1zM38 9h1v1h-1zM35 7h1v1h-1zM29 5h1v1h-1zM31 5h1v1h-1z"/>
<path fill="#ef8633" stroke="#ef8633" stroke-width="0.04" d="M21 58h1v1h-1zM24 58h1v1h-1zM20 57h1v1h-1zM19 56h1v1h-1zM27 56h1v1h-1zM28 55h1v1h-1zM18 54h1v1h-1zM29 54h1v1h-1zM30 53h1v1h-1zM32 50h1v1h-1zM58 50h2v1h-2zM62 50h2v1h-2zM33 49h1v1h-1zM52 49h1v1h-1zM67 49h1v1h-1zM15 48h1v1h-1zM34 48h1v1h-1zM47 48h2v1h-2zM36 47h1v1h-1zM42 47h1v1h-1zM71 47h1v1h-1zM12 45h1v1h-1zM11 44h1v1h-1zM10 43h1v1h-1zM71 38h1v1h-1zM7 37h1v1h-1zM70 36h1v1h-1zM6 35h1v1h-1zM69 34h1v1h-1zM69 33h1v1h-1zM5 32h1v1h-1zM5 31h1v1h-1zM67 31h1v1h-1zM5 30h1v1h-1zM4 27h1v1h-1zM63 27h1v1h-1zM62 26h1v1h-1zM4 22h1v1h-1zM46 19h1v1h-1zM62 19h1v1h-1zM44 18h1v1h-1zM48 18h5v1h-5zM43 17h1v1h-1zM56 17h1v1h-1zM61 17h1v1h-1zM42 16h1v1h-1zM41 14h1v1h-1zM9 13h1v1h-1zM40 12h1v1h-1zM12 10h1v1h-1zM16 8h1v1h-1zM21 6h1v1h-1zM33 6h1v1h-1zM30 5h1v1h-1z"/>
<path fill="#ef8a33" stroke="#ef8a33" stroke-width="0.04" d="M22 58h2v1h-2zM25 57h1v1h-1zM19 55h1v1h-1zM18 53h1v1h-1zM17 51h1v1h-1zM31 51h1v1h-1zM60 50h2v1h-2zM16 49h1v1h-1zM53 49h2v1h-2zM66 49h1v1h-1zM49 48h1v1h-1zM69 48h1v1h-1zM35 47h1v1h-1zM43 47h2v1h-2zM71 43h1v1h-1zM71 42h1v1h-1zM71 41h1v1h-1zM71 40h1v1h-1zM8 39h1v1h-1zM71 39h1v1h-1zM68 32h1v1h-1zM66 30h1v1h-1zM66 29h1v1h-1zM63 28h1v1h-1zM62 27h1v1h-1zM4 26h1v1h-1zM62 25h1v1h-1zM62 24h1v1h-1zM4 23h1v1h-1zM5 19h1v1h-1zM45 19h1v1h-1zM47 19h1v1h-1zM53 18h1v1h-1zM6 17h1v1h-1zM42 17h1v1h-1zM57 17h1v1h-1zM41 15h1v1h-1zM10 12h1v1h-1zM11 11h1v1h-1zM14 9h1v1h-1zM36 8h1v1h-1zM19 7h1v1h-1z"/>
<path fill="#ef8d34" stroke="#ef8d34" stroke-width="0.04" d="M21 57h2v1h-2zM24 57h1v1h-1zM20 56h1v1h-1zM26 56h1v1h-1zM27 55h1v1h-1zM19 54h1v1h-1zM18 52h1v1h-1zM30 52h1v1h-1zM17 50h1v1h-1zM32 49h1v1h-1zM55 49h1v1h-1zM65 49h1v1h-1zM33 48h1v1h-1zM50 48h2v1h-2zM45 47h1v1h-1zM71 44h1v1h-1zM9 41h1v1h-1zM70 37h1v1h-1zM69 35h1v1h-1zM68 33h1v1h-1zM66 31h1v1h-1zM5 29h1v1h-1zM63 29h1v1h-1zM62 28h1v1h-1zM61 27h1v1h-1zM61 26h1v1h-1zM4 25h1v1h-1zM61 25h1v1h-1zM4 24h1v1h-1zM62 23h1v1h-1zM62 22h1v1h-1zM62 21h1v1h-1zM46 20h1v1h-1zM44 19h1v1h-1zM48 19h3v1h-3zM43 18h1v1h-1zM54 18h1v1h-1zM61 18h1v1h-1zM58 17h3v1h-3zM7 16h1v1h-1zM40 13h1v1h-1zM39 11h1v1h-1zM38 10h1v1h-1zM37 9h1v1h-1zM34 7h1v1h-1zM22 6h4v1h-4zM32 6h1v1h-1z"/>
<path fill="#f09035" stroke="#f09035" stroke-width="0.04" d="M23 57h1v1h-1zM21 56h1v1h-1zM25 56h1v1h-1zM20 55h1v1h-1zM28 54h1v1h-1zM19 53h1v1h-1zM29 53h1v1h-1zM18 51h1v1h-1zM31 50h1v1h-1zM56 49h2v1h-2zM64 49h1v1h-1zM16 48h1v1h-1zM52 48h2v1h-2zM68 48h1v1h-1zM15 47h1v1h-1zM34 47h1v1h-1zM46 47h2v1h-2zM70 47h1v1h-1zM14 46h1v1h-1zM37 46h4v1h-4zM71 46h1v1h-1zM13 45h1v1h-1zM71 45h1v1h-1zM69 36h1v1h-1zM6 34h1v1h-1zM63 30h1v1h-1zM62 29h1v1h-1zM64 29h2v1h-2zM61 28h1v1h-1zM60 26h1v1h-1zM5 20h1v1h-1zM44 20h2v1h-2zM47 20h1v1h-1zM62 20h1v1h-1zM51 19h2v1h-2zM6 18h1v1h-1zM42 18h1v1h-1zM55 18h1v1h-1zM41 16h1v1h-1zM8 15h1v1h-1zM13 10h1v1h-1zM17 8h1v1h-1zM20 7h1v1h-1zM26 6h2v1h-2z"/>
<path fill="#f09336" stroke="#f09336" stroke-width="0.04" d="M22 56h1v1h-1zM24 56h1v1h-1zM21 55h1v1h-1zM26 55h1v1h-1zM20 54h1v1h-1zM30 51h1v1h-1zM17 49h1v1h-1zM58 49h6v1h-6zM54 48h1v1h-1zM67 48h1v1h-1zM48 47h2v1h-2zM35 46h2v1h-2zM41 46h1v1h-1zM12 44h1v1h-1zM10 42h1v1h-1zM8 38h1v1h-1zM70 38h1v1h-1zM7 36h1v1h-1zM68 34h1v1h-1zM67 32h1v1h-1zM62 30h1v1h-1zM61 29h1v1h-1zM5 28h1v1h-1zM60 28h1v1h-1zM60 27h1v1h-1zM60 25h1v1h-1zM61 24h1v1h-1zM5 21h1v1h-1zM46 21h1v1h-1zM48 20h2v1h-2zM43 19h1v1h-1zM53 19h1v1h-1zM61 19h1v1h-1zM56 18h1v1h-1zM60 18h1v1h-1zM9 14h1v1h-1zM40 14h1v1h-1zM39 12h1v1h-1zM15 9h1v1h-1zM18 8h1v1h-1zM35 8h1v1h-1zM28 6h4v1h-4z"/>
<path fill="#f09636" stroke="#f09636" stroke-width="0.04" d="M23 56h1v1h-1zM27 54h1v1h-1zM28 53h1v1h-1zM19 52h1v1h-1zM29 52h1v1h-1zM18 50h1v1h-1zM31 49h1v1h-1zM32 48h1v1h-1zM55 48h1v1h-1zM66 48h1v1h-1zM33 47h1v1h-1zM50 47h3v1h-3zM42 46h3v1h-3zM11 43h1v1h-1zM9 40h1v1h-1zM70 40h1v1h-1zM70 39h1v1h-1zM69 37h1v1h-1zM68 35h1v1h-1zM6 33h1v1h-1zM67 33h1v1h-1zM63 31h1v1h-1zM64 30h1v1h-1zM5 27h1v1h-1zM59 27h1v1h-1zM59 26h1v1h-1zM61 23h1v1h-1zM5 22h1v1h-1zM61 22h1v1h-1zM45 21h1v1h-1zM47 21h1v1h-1zM61 21h1v1h-1zM50 20h2v1h-2zM42 19h1v1h-1zM54 19h1v1h-1zM57 18h3v1h-3zM7 17h1v1h-1zM41 17h1v1h-1zM40 15h1v1h-1zM10 13h1v1h-1zM11 12h1v1h-1zM12 11h1v1h-1zM38 11h1v1h-1zM36 9h1v1h-1zM21 7h1v1h-1zM33 7h1v1h-1z"/>
<path fill="#f09937" stroke="#f09937" stroke-width="0.04" d="M22 55h4v1h-4zM21 54h1v1h-1zM26 54h1v1h-1zM20 53h1v1h-1zM19 51h1v1h-1zM30 50h1v1h-1zM56 48h1v1h-1zM64 48h2v1h-2zM16 47h1v1h-1zM53 47h1v1h-1zM69 47h1v1h-1zM15 46h1v1h-1zM34 46h1v1h-1zM45 46h2v1h-2zM70 43h1v1h-1zM70 42h1v1h-1zM70 41h1v1h-1zM67 34h1v1h-1zM6 32h1v1h-1zM66 32h1v1h-1zM6 31h1v1h-1zM62 31h1v1h-1zM64 31h1v1h-1zM6 30h1v1h-1zM61 30h1v1h-1zM65 30h1v1h-1zM60 29h1v1h-1zM59 28h1v1h-1zM5 26h1v1h-1zM5 25h1v1h-1zM59 25h1v1h-1zM5 24h1v1h-1zM60 24h1v1h-1zM5 23h1v1h-1zM44 21h1v1h-1zM48 21h2v1h-2zM43 20h1v1h-1zM52 20h1v1h-1zM61 20h1v1h-1zM6 19h1v1h-1zM55 19h1v1h-1zM8 16h1v1h-1zM39 13h1v1h-1zM14 10h1v1h-1zM37 10h1v1h-1zM16 9h1v1h-1zM19 8h1v1h-1zM34 8h1v1h-1zM22 7h1v1h-1z"/>
<path fill="#f19d38" stroke="#f19d38" stroke-width="0.04" d="M22 54h1v1h-1zM21 53h1v1h-1zM27 53h1v1h-1zM20 52h1v1h-1zM28 52h1v1h-1zM29 51h1v1h-1zM17 48h1v1h-1zM31 48h1v1h-1zM57 48h2v1h-2zM60 48h1v1h-1zM62 48h2v1h-2zM32 47h1v1h-1zM54 47h1v1h-1zM68 47h1v1h-1zM33 46h1v1h-1zM47 46h5v1h-5zM14 45h1v1h-1zM36 45h4v1h-4zM70 44h1v1h-1zM69 38h1v1h-1zM8 37h1v1h-1zM68 36h1v1h-1zM7 35h1v1h-1zM65 31h1v1h-1zM60 30h1v1h-1zM6 29h1v1h-1zM59 29h1v1h-1zM58 27h1v1h-1zM58 26h1v1h-1zM58 25h1v1h-1zM44 22h4v1h-4zM50 21h1v1h-1zM6 20h1v1h-1zM53 20h1v1h-1zM60 19h1v1h-1zM41 18h1v1h-1zM9 15h1v1h-1zM13 11h1v1h-1zM23 7h2v1h-2zM32 7h1v1h-1z"/>
<path fill="#f1a039" stroke="#f1a039" stroke-width="0.04" d="M23 54h3v1h-3zM19 50h1v1h-1zM18 49h1v1h-1zM30 49h1v1h-1zM59 48h1v1h-1zM61 48h1v1h-1zM55 47h5v1h-5zM66 47h2v1h-2zM52 46h2v1h-2zM70 46h1v1h-1zM35 45h1v1h-1zM40 45h1v1h-1zM70 45h1v1h-1zM13 44h1v1h-1zM10 41h1v1h-1zM9 39h1v1h-1zM69 39h1v1h-1zM68 37h1v1h-1zM67 35h1v1h-1zM66 33h1v1h-1zM64 32h2v1h-2zM61 31h1v1h-1zM59 30h1v1h-1zM58 29h1v1h-1zM6 28h1v1h-1zM58 28h1v1h-1zM57 27h1v1h-1zM57 26h1v1h-1zM57 25h1v1h-1zM58 24h2v1h-2zM60 23h1v1h-1zM48 22h1v1h-1zM60 22h1v1h-1zM6 21h1v1h-1zM43 21h1v1h-1zM51 21h1v1h-1zM53 21h1v1h-1zM60 21h1v1h-1zM42 20h1v1h-1zM54 20h2v1h-2zM60 20h1v1h-1zM56 19h4v1h-4zM7 18h1v1h-1zM40 16h1v1h-1zM10 14h1v1h-1zM39 14h1v1h-1zM12 12h1v1h-1zM38 12h1v1h-1zM15 10h1v1h-1zM17 9h1v1h-1zM35 9h1v1h-1zM20 8h1v1h-1zM25 7h2v1h-2zM31 7h1v1h-1z"/>
<path fill="#f1a33a" stroke="#f1a33a" stroke-width="0.04" d="M22 53h1v1h-1zM26 53h1v1h-1zM21 52h1v1h-1zM27 52h1v1h-1zM20 51h1v1h-1zM28 51h1v1h-1zM29 50h1v1h-1zM60 47h1v1h-1zM32 46h1v1h-1zM54 46h3v1h-3zM69 46h1v1h-1zM34 45h1v1h-1zM41 45h5v1h-5zM69 42h1v1h-1zM69 41h1v1h-1zM69 40h1v1h-1zM68 38h1v1h-1zM67 36h1v1h-1zM7 34h1v1h-1zM66 34h1v1h-1zM62 32h2v1h-2zM60 31h1v1h-1zM58 30h1v1h-1zM57 28h1v1h-1zM6 27h1v1h-1zM57 24h1v1h-1zM59 23h1v1h-1zM6 22h1v1h-1zM43 22h1v1h-1zM49 22h1v1h-1zM52 21h1v1h-1zM54 21h1v1h-1zM56 20h1v1h-1zM59 20h1v1h-1zM41 19h1v1h-1zM8 17h1v1h-1zM11 13h1v1h-1zM37 11h1v1h-1zM36 10h1v1h-1zM33 8h1v1h-1zM27 7h2v1h-2zM30 7h1v1h-1z"/>
<path fill="#f2a63b" stroke="#f2a63b" stroke-width="0.04" d="M23 53h3v1h-3zM18 48h1v1h-1zM30 48h1v1h-1zM17 47h1v1h-1zM31 47h1v1h-1zM61 47h5v1h-5zM16 46h1v1h-1zM57 46h1v1h-1zM67 46h2v1h-2zM33 45h1v1h-1zM46 45h6v1h-6zM69 45h1v1h-1zM69 44h1v1h-1zM12 43h1v1h-1zM69 43h1v1h-1zM11 42h1v1h-1zM67 37h1v1h-1zM8 36h1v1h-1zM61 32h1v1h-1zM59 31h1v1h-1zM7 30h1v1h-1zM57 29h1v1h-1zM56 27h1v1h-1zM6 26h1v1h-1zM56 26h1v1h-1zM6 25h1v1h-1zM56 25h1v1h-1zM6 24h1v1h-1zM56 24h1v1h-1zM6 23h1v1h-1zM44 23h4v1h-4zM56 23h3v1h-3zM50 22h10v1h-10zM42 21h1v1h-1zM55 21h2v1h-2zM59 21h1v1h-1zM41 20h1v1h-1zM57 20h2v1h-2zM7 19h1v1h-1zM40 17h1v1h-1zM9 16h1v1h-1zM39 15h1v1h-1zM38 13h1v1h-1zM14 11h1v1h-1zM18 9h1v1h-1zM21 8h1v1h-1zM29 7h1v1h-1z"/>
<path fill="#f2a93c" stroke="#f2a93c" stroke-width="0.04" d="M22 52h1v1h-1zM26 52h1v1h-1zM21 51h1v1h-1zM27 51h1v1h-1zM20 50h1v1h-1zM28 50h1v1h-1zM19 49h1v1h-1zM29 49h1v1h-1zM58 46h2v1h-2zM66 46h1v1h-1zM15 45h1v1h-1zM52 45h4v1h-4zM68 45h1v1h-1zM35 44h4v1h-4zM68 39h1v1h-1zM9 38h1v1h-1zM66 35h1v1h-1zM7 33h1v1h-1zM63 33h2v1h-2zM60 32h1v1h-1zM7 31h1v1h-1zM58 31h1v1h-1zM57 30h1v1h-1zM7 29h1v1h-1zM56 29h1v1h-1zM56 28h1v1h-1zM55 25h1v1h-1zM55 24h1v1h-1zM48 23h3v1h-3zM53 23h3v1h-3zM42 22h1v1h-1zM57 21h2v1h-2zM7 20h1v1h-1zM10 15h1v1h-1zM13 12h1v1h-1zM16 10h1v1h-1zM19 9h1v1h-1zM34 9h1v1h-1zM22 8h1v1h-1zM32 8h1v1h-1z"/>
<path fill="#f3ad3c" stroke="#f3ad3c" stroke-width="0.04" d="M23 52h3v1h-3zM31 46h1v1h-1zM60 46h1v1h-1zM32 45h1v1h-1zM56 45h1v1h-1zM67 45h1v1h-1zM14 44h1v1h-1zM34 44h1v1h-1zM39 44h3v1h-3zM43 44h5v1h-5zM68 44h1v1h-1zM68 43h1v1h-1zM68 42h1v1h-1zM68 41h1v1h-1zM10 40h1v1h-1zM68 40h1v1h-1zM67 38h1v1h-1zM62 33h1v1h-1zM65 33h1v1h-1zM7 32h1v1h-1zM59 32h1v1h-1zM57 31h1v1h-1zM56 30h1v1h-1zM7 28h1v1h-1zM55 28h1v1h-1zM55 27h1v1h-1zM55 26h1v1h-1zM54 25h1v1h-1zM53 24h2v1h-2zM51 23h2v1h-2zM7 21h1v1h-1zM8 18h1v1h-1zM40 18h1v1h-1zM11 14h1v1h-1zM12 13h1v1h-1zM37 12h1v1h-1zM15 11h1v1h-1zM36 11h1v1h-1zM17 10h1v1h-1zM35 10h1v1h-1zM23 8h1v1h-1z"/>
<path fill="#f3b03d" stroke="#f3b03d" stroke-width="0.04" d="M22 51h1v1h-1zM26 51h1v1h-1zM21 50h1v1h-1zM19 48h1v1h-1zM29 48h1v1h-1zM18 47h1v1h-1zM30 47h1v1h-1zM61 46h5v1h-5zM57 45h1v1h-1zM66 45h1v1h-1zM42 44h1v1h-1zM48 44h3v1h-3zM67 44h1v1h-1zM66 36h1v1h-1zM8 35h1v1h-1zM64 34h2v1h-2zM61 33h1v1h-1zM55 29h1v1h-1zM7 27h1v1h-1zM54 27h1v1h-1zM7 26h1v1h-1zM54 26h1v1h-1zM53 25h1v1h-1zM45 24h3v1h-3zM50 24h3v1h-3zM43 23h1v1h-1zM7 22h1v1h-1zM41 21h1v1h-1zM9 17h1v1h-1zM39 16h1v1h-1zM38 14h1v1h-1zM20 9h1v1h-1zM33 9h1v1h-1zM24 8h2v1h-2zM31 8h1v1h-1z"/>
<path fill="#f3b33e" stroke="#f3b33e" stroke-width="0.04" d="M23 51h3v1h-3zM27 50h1v1h-1zM20 49h1v1h-1zM28 49h1v1h-1zM17 46h1v1h-1zM16 45h1v1h-1zM58 45h2v1h-2zM33 44h1v1h-1zM51 44h6v1h-6zM13 43h1v1h-1zM45 43h3v1h-3zM67 43h1v1h-1zM67 42h1v1h-1zM11 41h1v1h-1zM67 39h1v1h-1zM9 37h1v1h-1zM66 37h1v1h-1zM65 35h1v1h-1zM63 34h1v1h-1zM60 33h1v1h-1zM58 32h1v1h-1zM56 31h1v1h-1zM8 30h1v1h-1zM55 30h1v1h-1zM54 29h1v1h-1zM54 28h1v1h-1zM53 26h1v1h-1zM7 25h1v1h-1zM51 25h2v1h-2zM7 24h1v1h-1zM44 24h1v1h-1zM48 24h2v1h-2zM7 23h1v1h-1zM8 19h1v1h-1zM10 16h1v1h-1zM37 13h1v1h-1zM14 12h1v1h-1zM18 10h1v1h-1zM26 8h1v1h-1z"/>
<path fill="#f4b63f" stroke="#f4b63f" stroke-width="0.04" d="M22 50h1v1h-1zM26 50h1v1h-1zM30 46h1v1h-1zM31 45h1v1h-1zM60 45h1v1h-1zM65 45h1v1h-1zM32 44h1v1h-1zM57 44h1v1h-1zM66 44h1v1h-1zM35 43h4v1h-4zM43 43h2v1h-2zM48 43h1v1h-1zM12 42h1v1h-1zM67 41h1v1h-1zM67 40h1v1h-1zM10 39h1v1h-1zM62 34h1v1h-1zM57 32h1v1h-1zM55 31h1v1h-1zM8 29h1v1h-1zM53 28h1v1h-1zM29 27h1v1h-1zM53 27h1v1h-1zM52 26h1v1h-1zM50 25h1v1h-1zM42 23h1v1h-1zM41 22h1v1h-1zM8 20h1v1h-1zM40 19h1v1h-1zM39 17h1v1h-1zM11 15h1v1h-1zM38 15h1v1h-1zM12 14h1v1h-1zM13 13h1v1h-1zM36 12h1v1h-1zM16 11h1v1h-1zM35 11h1v1h-1zM34 10h1v1h-1zM21 9h1v1h-1zM27 8h1v1h-1zM30 8h1v1h-1z"/>
<path fill="#f4ba40" stroke="#f4ba40" stroke-width="0.04" d="M23 50h1v1h-1zM25 50h1v1h-1zM21 49h1v1h-1zM27 49h1v1h-1zM20 48h1v1h-1zM28 48h1v1h-1zM29 47h1v1h-1zM61 45h4v1h-4zM15 44h1v1h-1zM58 44h2v1h-2zM34 43h1v1h-1zM39 43h4v1h-4zM49 43h1v1h-1zM53 43h4v1h-4zM66 43h1v1h-1zM46 42h1v1h-1zM66 39h1v1h-1zM66 38h1v1h-1zM65 36h1v1h-1zM64 35h1v1h-1zM8 34h1v1h-1zM61 34h1v1h-1zM58 33h2v1h-2zM56 32h1v1h-1zM8 31h1v1h-1zM54 30h1v1h-1zM53 29h1v1h-1zM8 28h1v1h-1zM52 27h1v1h-1zM51 26h1v1h-1zM45 25h5v1h-5zM8 21h1v1h-1zM9 18h1v1h-1zM15 12h1v1h-1zM19 10h1v1h-1zM22 9h1v1h-1zM32 9h1v1h-1zM28 8h2v1h-2z"/>
<path fill="#f5bd41" stroke="#f5bd41" stroke-width="0.04" d="M24 50h1v1h-1zM19 47h1v1h-1zM18 46h1v1h-1zM60 44h1v1h-1zM65 44h1v1h-1zM33 43h1v1h-1zM50 43h3v1h-3zM57 43h2v1h-2zM44 42h2v1h-2zM47 42h1v1h-1zM66 42h1v1h-1zM66 40h1v1h-1zM9 36h1v1h-1zM63 35h1v1h-1zM57 33h1v1h-1zM55 32h1v1h-1zM29 28h1v1h-1zM8 27h1v1h-1zM28 27h1v1h-1zM30 27h1v1h-1zM8 26h1v1h-1zM29 26h1v1h-1zM50 26h1v1h-1zM44 25h1v1h-1zM43 24h1v1h-1zM41 23h1v1h-1zM8 22h1v1h-1zM40 20h1v1h-1zM9 19h1v1h-1zM10 17h1v1h-1zM11 16h1v1h-1zM37 14h1v1h-1zM14 13h1v1h-1zM17 11h1v1h-1z"/>
<path fill="#f5c042" stroke="#f5c042" stroke-width="0.04" d="M22 49h1v1h-1zM26 49h1v1h-1zM17 45h1v1h-1zM30 45h1v1h-1zM31 44h1v1h-1zM61 44h4v1h-4zM14 43h1v1h-1zM59 43h2v1h-2zM65 43h1v1h-1zM43 42h1v1h-1zM48 42h1v1h-1zM54 42h6v1h-6zM65 42h1v1h-1zM65 41h2v1h-2zM11 40h1v1h-1zM65 40h1v1h-1zM65 39h1v1h-1zM10 38h1v1h-1zM65 38h1v1h-1zM65 37h1v1h-1zM63 36h2v1h-2zM61 35h2v1h-2zM57 34h4v1h-4zM8 33h1v1h-1zM56 33h1v1h-1zM8 32h1v1h-1zM54 31h1v1h-1zM53 30h1v1h-1zM52 28h1v1h-1zM51 27h1v1h-1zM28 26h1v1h-1zM30 26h1v1h-1zM8 25h1v1h-1zM8 24h1v1h-1zM8 23h1v1h-1zM39 18h1v1h-1zM38 16h1v1h-1zM12 15h1v1h-1zM13 14h1v1h-1zM36 13h1v1h-1zM33 10h1v1h-1zM23 9h1v1h-1z"/>
<path fill="#f5c343" stroke="#f5c343" stroke-width="0.04" d="M23 49h3v1h-3zM21 48h1v1h-1zM27 48h1v1h-1zM28 47h1v1h-1zM29 46h1v1h-1zM16 44h1v1h-1zM32 43h1v1h-1zM61 43h4v1h-4zM35 42h4v1h-4zM40 42h3v1h-3zM49 42h1v1h-1zM53 42h1v1h-1zM60 42h2v1h-2zM64 42h1v1h-1zM55 41h6v1h-6zM64 41h1v1h-1zM58 40h1v1h-1zM64 40h1v1h-1zM64 39h1v1h-1zM64 37h1v1h-1zM61 36h2v1h-2zM9 35h1v1h-1zM58 35h1v1h-1zM60 35h1v1h-1zM56 34h1v1h-1zM55 33h1v1h-1zM9 30h1v1h-1zM28 28h1v1h-1zM30 28h1v1h-1zM45 26h5v1h-5zM29 25h1v1h-1zM42 24h1v1h-1zM40 21h1v1h-1zM9 20h1v1h-1zM10 18h1v1h-1zM16 12h1v1h-1zM35 12h1v1h-1zM18 11h1v1h-1zM34 11h1v1h-1zM20 10h1v1h-1zM31 9h1v1h-1z"/>
<path fill="#f6c744" stroke="#f6c744" stroke-width="0.04" d="M20 47h1v1h-1zM19 46h1v1h-1zM34 42h1v1h-1zM39 42h1v1h-1zM50 42h3v1h-3zM62 42h2v1h-2zM44 41h3v1h-3zM54 41h1v1h-1zM61 41h3v1h-3zM56 40h2v1h-2zM59 40h5v1h-5zM57 39h7v1h-7zM57 38h8v1h-8zM10 37h1v1h-1zM57 37h7v1h-7zM57 36h4v1h-4zM56 35h2v1h-2zM59 35h1v1h-1zM54 32h1v1h-1zM9 31h1v1h-1zM53 31h1v1h-1zM52 29h1v1h-1zM50 27h1v1h-1zM44 26h1v1h-1zM28 25h1v1h-1zM30 25h1v1h-1zM43 25h1v1h-1zM40 22h1v1h-1zM39 19h1v1h-1zM11 17h1v1h-1zM38 17h1v1h-1zM37 15h1v1h-1zM15 13h1v1h-1zM24 9h1v1h-1z"/>
<path fill="#f6ca45" stroke="#f6ca45" stroke-width="0.04" d="M22 48h1v1h-1zM25 48h2v1h-2zM18 45h1v1h-1zM30 44h1v1h-1zM13 42h1v1h-1zM12 41h1v1h-1zM43 41h1v1h-1zM47 41h1v1h-1zM53 41h1v1h-1zM54 40h2v1h-2zM56 39h1v1h-1zM56 38h1v1h-1zM56 37h1v1h-1zM56 36h1v1h-1zM9 34h1v1h-1zM55 34h1v1h-1zM54 33h1v1h-1zM9 29h1v1h-1zM29 29h1v1h-1zM51 28h1v1h-1zM27 27h1v1h-1zM31 27h1v1h-1zM27 26h1v1h-1zM31 26h1v1h-1zM42 25h1v1h-1zM41 24h1v1h-1zM9 21h1v1h-1zM10 19h1v1h-1zM12 16h1v1h-1zM13 15h1v1h-1zM14 14h1v1h-1zM36 14h1v1h-1zM17 12h1v1h-1zM21 10h1v1h-1zM32 10h1v1h-1zM30 9h1v1h-1z"/>
<path fill="#f7cd46" stroke="#f7cd46" stroke-width="0.04" d="M23 48h2v1h-2zM21 47h1v1h-1zM27 47h1v1h-1zM28 46h1v1h-1zM29 45h1v1h-1zM15 43h1v1h-1zM31 43h1v1h-1zM33 42h1v1h-1zM41 41h2v1h-2zM52 41h1v1h-1zM53 40h1v1h-1zM11 39h1v1h-1zM55 39h1v1h-1zM55 38h1v1h-1zM55 37h1v1h-1zM55 36h1v1h-1zM55 35h1v1h-1zM54 34h1v1h-1zM53 32h1v1h-1zM52 30h1v1h-1zM28 29h1v1h-1zM30 29h1v1h-1zM9 28h1v1h-1zM27 28h1v1h-1zM31 28h1v1h-1zM44 27h2v1h-2zM43 26h1v1h-1zM27 25h1v1h-1zM28 24h2v1h-2zM40 23h1v1h-1zM9 22h1v1h-1zM39 20h1v1h-1zM37 16h1v1h-1zM35 13h1v1h-1zM34 12h1v1h-1zM19 11h1v1h-1zM33 11h1v1h-1zM25 9h1v1h-1z"/>
<path fill="#f7d147" stroke="#f7d147" stroke-width="0.04" d="M20 46h1v1h-1zM17 44h1v1h-1zM32 42h1v1h-1zM36 41h2v1h-2zM40 41h1v1h-1zM48 41h1v1h-1zM51 41h1v1h-1zM53 39h2v1h-2zM54 38h1v1h-1zM54 37h1v1h-1zM10 36h1v1h-1zM54 36h1v1h-1zM54 35h1v1h-1zM9 33h1v1h-1zM53 33h1v1h-1zM9 32h1v1h-1zM52 31h1v1h-1zM51 29h1v1h-1zM50 28h1v1h-1zM9 27h1v1h-1zM46 27h4v1h-4zM9 26h1v1h-1zM9 25h1v1h-1zM31 25h1v1h-1zM41 25h1v1h-1zM9 24h1v1h-1zM30 24h1v1h-1zM9 23h1v1h-1zM10 20h1v1h-1zM11 18h1v1h-1zM38 18h1v1h-1zM16 13h1v1h-1zM26 9h1v1h-1zM29 9h1v1h-1z"/>
<path fill="#f8d447" stroke="#f8d447" stroke-width="0.04" d="M22 47h1v1h-1zM26 47h1v1h-1zM19 45h1v1h-1zM35 41h1v1h-1zM38 41h2v1h-2zM49 41h2v1h-2zM43 40h3v1h-3zM52 40h1v1h-1zM11 38h1v1h-1zM53 38h1v1h-1zM53 37h1v1h-1zM53 34h1v1h-1zM52 32h1v1h-1zM51 30h1v1h-1zM27 29h1v1h-1zM44 28h2v1h-2zM43 27h1v1h-1zM42 26h1v1h-1zM27 24h1v1h-1zM40 24h1v1h-1zM39 21h1v1h-1zM12 17h1v1h-1zM13 16h1v1h-1zM14 15h1v1h-1zM36 15h1v1h-1zM15 14h1v1h-1zM35 14h1v1h-1zM18 12h1v1h-1zM22 10h1v1h-1zM27 9h2v1h-2z"/>
<path fill="#f8d748" stroke="#f8d748" stroke-width="0.04" d="M23 47h3v1h-3zM27 46h1v1h-1zM16 43h1v1h-1zM30 43h1v1h-1zM14 42h1v1h-1zM34 41h1v1h-1zM12 40h1v1h-1zM42 40h1v1h-1zM46 40h1v1h-1zM52 39h1v1h-1zM53 36h1v1h-1zM10 35h1v1h-1zM53 35h1v1h-1zM29 30h1v1h-1zM31 29h1v1h-1zM26 28h1v1h-1zM46 28h1v1h-1zM49 28h1v1h-1zM26 27h1v1h-1zM32 27h1v1h-1zM26 26h1v1h-1zM32 26h1v1h-1zM31 24h1v1h-1zM39 22h1v1h-1zM10 21h1v1h-1zM11 19h1v1h-1zM38 19h1v1h-1zM37 17h1v1h-1zM34 13h1v1h-1zM20 11h1v1h-1zM31 10h1v1h-1z"/>
<path fill="#f9da49" stroke="#f9da49" stroke-width="0.04" d="M21 46h1v1h-1zM28 45h1v1h-1zM18 44h1v1h-1zM29 44h1v1h-1zM31 42h1v1h-1zM13 41h1v1h-1zM33 41h1v1h-1zM41 40h1v1h-1zM51 40h1v1h-1zM52 38h1v1h-1zM11 37h1v1h-1zM52 37h1v1h-1zM52 34h1v1h-1zM52 33h1v1h-1zM51 31h1v1h-1zM28 30h1v1h-1zM30 30h1v1h-1zM26 29h1v1h-1zM45 29h1v1h-1zM50 29h1v1h-1zM32 28h1v1h-1zM47 28h1v1h-1zM26 25h1v1h-1zM32 25h1v1h-1zM40 25h1v1h-1zM28 23h2v1h-2zM39 23h1v1h-1zM36 16h1v1h-1zM17 13h1v1h-1zM33 12h1v1h-1zM32 11h1v1h-1z"/>
<path fill="#f9de4a" stroke="#f9de4a" stroke-width="0.04" d="M26 46h1v1h-1zM20 45h1v1h-1zM39 40h2v1h-2zM47 40h1v1h-1zM43 39h2v1h-2zM51 39h1v1h-1zM52 36h1v1h-1zM52 35h1v1h-1zM10 34h1v1h-1zM51 32h1v1h-1zM27 30h1v1h-1zM44 29h1v1h-1zM46 29h1v1h-1zM43 28h1v1h-1zM48 28h1v1h-1zM41 26h1v1h-1zM27 23h1v1h-1zM30 23h1v1h-1zM10 22h1v1h-1zM38 20h1v1h-1zM12 18h1v1h-1zM37 18h1v1h-1zM35 15h1v1h-1zM16 14h1v1h-1zM23 10h1v1h-1z"/>
<path fill="#fae14b" stroke="#fae14b" stroke-width="0.04" d="M22 46h1v1h-1zM25 46h1v1h-1zM19 44h1v1h-1zM17 43h1v1h-1zM15 42h1v1h-1zM32 41h1v1h-1zM35 40h4v1h-4zM50 40h1v1h-1zM12 39h1v1h-1zM42 39h1v1h-1zM45 39h1v1h-1zM51 38h1v1h-1zM11 36h1v1h-1zM10 33h1v1h-1zM51 33h1v1h-1zM10 32h1v1h-1zM10 31h1v1h-1zM29 31h1v1h-1zM10 30h1v1h-1zM26 30h1v1h-1zM31 30h1v1h-1zM44 30h2v1h-2zM50 30h1v1h-1zM32 29h1v1h-1zM43 29h1v1h-1zM47 29h1v1h-1zM49 29h1v1h-1zM25 28h1v1h-1zM25 27h1v1h-1zM42 27h1v1h-1zM25 26h1v1h-1zM26 24h1v1h-1zM32 24h1v1h-1zM39 24h1v1h-1zM10 23h1v1h-1zM38 21h1v1h-1zM11 20h1v1h-1zM37 19h1v1h-1zM13 17h1v1h-1zM36 17h1v1h-1zM14 16h1v1h-1zM15 15h1v1h-1zM34 14h1v1h-1zM19 12h1v1h-1zM30 10h1v1h-1z"/>
<path fill="#fae44c" stroke="#fae44c" stroke-width="0.04" d="M23 46h2v1h-2zM21 45h1v1h-1zM27 45h1v1h-1zM48 40h2v1h-2zM41 39h1v1h-1zM51 34h1v1h-1zM28 31h1v1h-1zM30 31h1v1h-1zM50 31h1v1h-1zM43 30h1v1h-1zM46 30h1v1h-1zM10 29h1v1h-1zM48 29h1v1h-1zM10 28h1v1h-1zM33 27h1v1h-1zM10 26h1v1h-1zM33 26h1v1h-1zM40 26h1v1h-1zM10 25h1v1h-1zM25 25h1v1h-1zM10 24h1v1h-1zM31 23h1v1h-1zM38 22h1v1h-1zM12 19h1v1h-1zM33 13h1v1h-1zM21 11h1v1h-1z"/>
<path fill="#fbe84d" stroke="#fbe84d" stroke-width="0.04" d="M20 44h1v1h-1zM28 44h1v1h-1zM18 43h1v1h-1zM29 43h1v1h-1zM34 40h1v1h-1zM40 39h1v1h-1zM46 39h1v1h-1zM50 39h1v1h-1zM12 38h1v1h-1zM43 38h2v1h-2zM51 37h1v1h-1zM11 35h1v1h-1zM51 35h1v1h-1zM50 32h1v1h-1zM27 31h1v1h-1zM43 31h3v1h-3zM32 30h1v1h-1zM49 30h1v1h-1zM25 29h1v1h-1zM33 28h1v1h-1zM42 28h1v1h-1zM10 27h1v1h-1zM41 27h1v1h-1zM33 25h1v1h-1zM39 25h1v1h-1zM25 24h1v1h-1zM26 23h1v1h-1zM38 23h1v1h-1zM11 21h1v1h-1zM37 20h1v1h-1zM36 18h1v1h-1zM35 16h1v1h-1zM18 13h1v1h-1zM31 11h1v1h-1zM24 10h1v1h-1z"/>
<path fill="#fceb4e" stroke="#fceb4e" stroke-width="0.04" d="M22 45h1v1h-1zM26 45h1v1h-1zM30 42h1v1h-1zM31 41h1v1h-1zM13 40h1v1h-1zM33 40h1v1h-1zM38 39h2v1h-2zM42 38h1v1h-1zM51 36h1v1h-1zM43 32h2v1h-2zM31 31h1v1h-1zM47 30h2v1h-2zM42 29h1v1h-1zM38 24h1v1h-1zM11 22h1v1h-1zM37 21h1v1h-1zM36 19h1v1h-1zM13 18h1v1h-1zM14 17h1v1h-1zM16 15h1v1h-1zM34 15h1v1h-1zM17 14h1v1h-1zM32 12h1v1h-1zM25 10h1v1h-1zM29 10h1v1h-1z"/>
<path fill="#fcee4f" stroke="#fcee4f" stroke-width="0.04" d="M25 45h1v1h-1zM19 43h1v1h-1zM16 42h1v1h-1zM14 41h1v1h-1zM32 40h1v1h-1zM36 39h2v1h-2zM47 39h1v1h-1zM41 38h1v1h-1zM45 38h1v1h-1zM50 38h1v1h-1zM12 37h1v1h-1zM43 37h1v1h-1zM11 34h1v1h-1zM43 33h2v1h-2zM50 33h1v1h-1zM29 32h1v1h-1zM45 32h1v1h-1zM26 31h1v1h-1zM42 31h1v1h-1zM46 31h1v1h-1zM49 31h1v1h-1zM42 30h1v1h-1zM33 29h1v1h-1zM24 28h1v1h-1zM24 27h1v1h-1zM40 27h1v1h-1zM24 26h1v1h-1zM39 26h1v1h-1zM24 25h1v1h-1zM25 23h1v1h-1zM27 22h3v1h-3zM37 22h1v1h-1zM12 20h1v1h-1zM36 20h1v1h-1zM35 17h1v1h-1zM15 16h1v1h-1zM33 14h1v1h-1zM20 12h1v1h-1zM22 11h1v1h-1z"/>
<path fill="#fdf250" stroke="#fdf250" stroke-width="0.04" d="M23 45h2v1h-2zM21 44h1v1h-1zM27 44h1v1h-1zM17 42h1v1h-1zM34 39h2v1h-2zM49 39h1v1h-1zM40 38h1v1h-1zM42 37h1v1h-1zM44 37h1v1h-1zM43 36h1v1h-1zM43 34h2v1h-2zM50 34h1v1h-1zM11 33h1v1h-1zM42 33h1v1h-1zM11 32h1v1h-1zM28 32h1v1h-1zM30 32h1v1h-1zM42 32h1v1h-1zM32 31h1v1h-1zM47 31h2v1h-2zM25 30h1v1h-1zM41 28h1v1h-1zM38 25h1v1h-1zM24 24h1v1h-1zM33 24h1v1h-1zM11 23h1v1h-1zM32 23h1v1h-1zM37 23h1v1h-1zM26 22h1v1h-1zM13 19h1v1h-1zM35 18h1v1h-1zM19 13h1v1h-1zM26 10h3v1h-3z"/>
<path fill="#fdf551" stroke="#fdf551" stroke-width="0.04" d="M20 43h1v1h-1zM31 40h1v1h-1zM13 39h1v1h-1zM32 39h2v1h-2zM48 39h1v1h-1zM36 38h4v1h-4zM46 38h1v1h-1zM41 37h1v1h-1zM45 37h1v1h-1zM50 37h1v1h-1zM12 36h1v1h-1zM42 36h1v1h-1zM44 36h1v1h-1zM43 35h2v1h-2zM50 35h1v1h-1zM42 34h1v1h-1zM45 33h1v1h-1zM27 32h1v1h-1zM31 32h1v1h-1zM46 32h1v1h-1zM49 32h1v1h-1zM11 31h1v1h-1zM33 30h1v1h-1zM24 29h1v1h-1zM34 28h1v1h-1zM34 27h1v1h-1zM39 27h1v1h-1zM34 26h1v1h-1zM38 26h1v1h-1zM11 24h1v1h-1zM37 24h1v1h-1zM24 23h1v1h-1zM25 22h1v1h-1zM30 22h1v1h-1zM12 21h1v1h-1zM36 21h1v1h-1zM35 20h1v1h-1zM35 19h1v1h-1zM14 18h1v1h-1zM34 16h1v1h-1zM18 14h1v1h-1zM32 13h1v1h-1zM30 11h1v1h-1z"/>
<path fill="#fef852" stroke="#fef852" stroke-width="0.04" d="M22 44h1v1h-1zM25 44h2v1h-2zM28 43h1v1h-1zM18 42h1v1h-1zM29 42h1v1h-1zM30 41h1v1h-1zM31 39h1v1h-1zM34 38h2v1h-2zM40 37h1v1h-1zM45 36h1v1h-1zM50 36h1v1h-1zM42 35h1v1h-1zM45 35h1v1h-1zM45 34h1v1h-1zM46 33h1v1h-1zM47 32h1v1h-1zM11 30h1v1h-1zM11 29h1v1h-1zM41 29h1v1h-1zM40 28h1v1h-1zM11 26h1v1h-1zM11 25h1v1h-1zM34 25h1v1h-1zM37 25h1v1h-1zM33 23h1v1h-1zM36 23h1v1h-1zM12 22h1v1h-1zM36 22h1v1h-1zM35 21h1v1h-1zM13 20h1v1h-1zM15 17h1v1h-1zM16 16h1v1h-1zM17 15h1v1h-1zM33 15h1v1h-1zM21 12h1v1h-1zM31 12h1v1h-1zM23 11h1v1h-1z"/>
<path fill="#fefc53" stroke="#fefc53" stroke-width="0.04" d="M23 44h2v1h-2zM21 43h1v1h-1zM15 41h1v1h-1zM14 40h1v1h-1zM13 38h1v1h-1zM33 38h1v1h-1zM47 38h1v1h-1zM49 38h1v1h-1zM39 37h1v1h-1zM46 37h1v1h-1zM41 36h1v1h-1zM12 35h1v1h-1zM46 34h1v1h-1zM49 33h1v1h-1zM26 32h1v1h-1zM32 32h1v1h-1zM48 32h1v1h-1zM25 31h1v1h-1zM33 31h1v1h-1zM41 31h1v1h-1zM41 30h1v1h-1zM34 29h1v1h-1zM11 28h1v1h-1zM11 27h1v1h-1zM38 27h1v1h-1zM23 26h1v1h-1zM23 25h1v1h-1zM34 24h1v1h-1zM36 24h1v1h-1zM24 22h1v1h-1zM31 22h1v1h-1zM35 22h1v1h-1zM34 20h1v1h-1zM34 19h1v1h-1zM34 18h1v1h-1zM34 17h1v1h-1z"/>
<path fill="#ffff54" stroke="#ffff54" stroke-width="0.04" d="M27 43h1v1h-1zM19 42h1v1h-1zM16 41h1v1h-1zM30 40h1v1h-1zM32 38h1v1h-1zM48 38h1v1h-1zM35 37h4v1h-4zM40 36h1v1h-1zM46 36h1v1h-1zM41 35h1v1h-1zM46 35h1v1h-1zM12 34h1v1h-1zM41 34h1v1h-1zM49 34h1v1h-1zM27 33h4v1h-4zM41 33h1v1h-1zM47 33h1v1h-1zM41 32h1v1h-1zM24 30h1v1h-1zM34 30h1v1h-1zM23 28h1v1h-1zM39 28h1v1h-1zM23 27h1v1h-1zM35 27h1v1h-1zM37 26h1v1h-1zM35 25h2v1h-2zM23 24h1v1h-1zM35 24h1v1h-1zM12 23h1v1h-1zM34 23h2v1h-2zM32 22h1v1h-1zM34 22h1v1h-1zM13 21h1v1h-1zM26 21h4v1h-4zM34 21h1v1h-1zM14 19h1v1h-1zM32 14h1v1h-1zM20 13h1v1h-1z"/>
<path fill="#ffff55" stroke="#ffff55" stroke-width="0.04" d="M22 43h2v1h-2zM26 43h1v1h-1zM20 42h1v1h-1zM17 41h1v1h-1zM13 37h1v1h-1zM47 37h1v1h-1zM49 37h1v1h-1zM49 36h1v1h-1zM49 35h1v1h-1zM47 34h1v1h-1zM12 33h1v1h-1zM31 33h1v1h-1zM48 33h1v1h-1zM12 32h1v1h-1zM35 28h1v1h-1zM38 28h1v1h-1zM37 27h1v1h-1zM35 26h2v1h-2zM12 24h1v1h-1zM23 23h1v1h-1zM33 22h1v1h-1zM25 21h1v1h-1zM33 21h1v1h-1zM33 20h1v1h-1zM15 18h1v1h-1zM16 17h1v1h-1zM17 16h1v1h-1zM33 16h1v1h-1zM18 15h1v1h-1zM19 14h1v1h-1zM22 12h1v1h-1zM30 12h1v1h-1zM24 11h1v1h-1zM29 11h1v1h-1z"/>
<path fill="#ffff56" stroke="#ffff56" stroke-width="0.04" d="M24 43h2v1h-2zM28 42h1v1h-1zM18 41h1v1h-1zM29 41h1v1h-1zM15 40h1v1h-1zM14 39h1v1h-1zM31 38h1v1h-1zM48 37h1v1h-1zM39 36h1v1h-1zM47 36h1v1h-1zM47 35h2v1h-2zM48 34h1v1h-1zM32 33h1v1h-1zM33 32h1v1h-1zM12 31h1v1h-1zM23 29h1v1h-1zM35 29h1v1h-1zM40 29h1v1h-1zM36 27h1v1h-1zM12 26h1v1h-1zM12 25h1v1h-1zM13 22h1v1h-1zM30 21h1v1h-1zM14 20h1v1h-1zM33 19h1v1h-1zM31 13h1v1h-1zM25 11h1v1h-1zM28 11h1v1h-1z"/>
<path fill="#ffff58" stroke="#ffff58" stroke-width="0.04" d="M21 42h1v1h-1zM16 40h1v1h-1zM30 39h1v1h-1zM34 37h1v1h-1zM13 36h1v1h-1zM48 36h1v1h-1zM26 33h1v1h-1zM25 32h1v1h-1zM24 31h1v1h-1zM34 31h1v1h-1zM12 30h1v1h-1zM35 30h1v1h-1zM12 29h1v1h-1zM12 28h1v1h-1zM36 28h2v1h-2zM12 27h1v1h-1zM13 23h1v1h-1zM24 21h1v1h-1zM31 21h2v1h-2zM15 19h1v1h-1zM33 18h1v1h-1zM33 17h1v1h-1zM32 15h1v1h-1zM21 13h1v1h-1zM23 12h1v1h-1zM26 11h2v1h-2z"/>
<path fill="#ffff5b" stroke="#ffff5b" stroke-width="0.04" d="M22 42h2v1h-2zM27 42h1v1h-1zM19 41h1v1h-1zM17 40h1v1h-1zM29 40h1v1h-1zM14 38h1v1h-1zM13 35h1v1h-1zM40 35h1v1h-1zM28 34h4v1h-4zM33 33h1v1h-1zM40 30h1v1h-1zM36 29h1v1h-1zM38 29h2v1h-2zM23 22h1v1h-1zM14 21h1v1h-1zM27 20h1v1h-1zM29 20h1v1h-1zM32 20h1v1h-1zM16 18h1v1h-1zM17 17h1v1h-1zM18 16h1v1h-1zM19 15h1v1h-1zM20 14h1v1h-1zM29 12h1v1h-1z"/>
<path fill="#ffff5f" stroke="#ffff5f" stroke-width="0.04" d="M24 42h3v1h-3zM20 41h1v1h-1zM28 41h1v1h-1zM18 40h1v1h-1zM15 39h1v1h-1zM33 37h1v1h-1zM38 36h1v1h-1zM39 35h1v1h-1zM13 34h1v1h-1zM27 34h1v1h-1zM32 34h1v1h-1zM34 32h1v1h-1zM23 30h1v1h-1zM37 29h1v1h-1zM13 24h1v1h-1zM15 20h1v1h-1zM26 20h1v1h-1zM28 20h1v1h-1zM30 20h1v1h-1zM22 13h1v1h-1zM30 13h1v1h-1zM24 12h1v1h-1z"/>
<path fill="#ffff63" stroke="#ffff63" stroke-width="0.04" d="M21 41h1v1h-1zM14 37h1v1h-1zM35 36h3v1h-3zM33 34h1v1h-1zM40 34h1v1h-1zM13 33h1v1h-1zM40 33h1v1h-1zM35 31h1v1h-1zM40 31h1v1h-1zM36 30h1v1h-1zM39 30h1v1h-1zM13 26h1v1h-1zM13 25h1v1h-1zM22 25h1v1h-1zM14 22h1v1h-1zM25 20h1v1h-1zM31 20h1v1h-1zM27 19h1v1h-1zM32 19h1v1h-1zM21 14h1v1h-1zM31 14h1v1h-1zM23 13h1v1h-1zM25 12h4v1h-4z"/>
<path fill="#ffff68" stroke="#ffff68" stroke-width="0.04" d="M22 41h1v1h-1zM27 41h1v1h-1zM19 40h1v1h-1zM28 40h1v1h-1zM16 39h1v1h-1zM29 39h1v1h-1zM15 38h1v1h-1zM30 38h1v1h-1zM32 37h1v1h-1zM14 36h1v1h-1zM34 36h1v1h-1zM29 35h4v1h-4zM26 34h1v1h-1zM25 33h1v1h-1zM34 33h1v1h-1zM13 32h1v1h-1zM24 32h1v1h-1zM40 32h1v1h-1zM13 31h1v1h-1zM23 31h1v1h-1zM37 30h2v1h-2zM13 29h1v1h-1zM13 28h1v1h-1zM22 28h1v1h-1zM13 27h1v1h-1zM22 26h1v1h-1zM24 20h1v1h-1zM16 19h1v1h-1zM26 19h1v1h-1zM28 19h2v1h-2zM31 19h1v1h-1zM17 18h1v1h-1zM32 18h1v1h-1zM18 17h1v1h-1zM19 16h1v1h-1zM32 16h1v1h-1zM20 15h1v1h-1zM29 13h1v1h-1z"/>
<path fill="#ffff6e" stroke="#ffff6e" stroke-width="0.04" d="M23 41h4v1h-4zM20 40h1v1h-1zM17 39h1v1h-1zM31 37h1v1h-1zM14 35h1v1h-1zM28 35h1v1h-1zM33 35h1v1h-1zM38 35h1v1h-1zM34 34h1v1h-1zM39 34h1v1h-1zM35 32h1v1h-1zM36 31h1v1h-1zM39 31h1v1h-1zM13 30h1v1h-1zM22 29h1v1h-1zM22 27h1v1h-1zM14 23h1v1h-1zM23 21h1v1h-1zM25 19h1v1h-1zM30 19h1v1h-1zM27 18h1v1h-1zM32 17h1v1h-1zM31 15h1v1h-1zM22 14h1v1h-1zM30 14h1v1h-1zM24 13h1v1h-1zM28 13h1v1h-1z"/>
<path fill="#ffff74" stroke="#ffff74" stroke-width="0.04" d="M18 39h1v1h-1zM28 39h1v1h-1zM15 37h1v1h-1zM30 37h1v1h-1zM30 36h4v1h-4zM27 35h1v1h-1zM34 35h2v1h-2zM14 34h1v1h-1zM24 33h1v1h-1zM35 33h1v1h-1zM39 33h1v1h-1zM39 32h1v1h-1zM37 31h2v1h-2zM22 24h1v1h-1zM15 21h1v1h-1zM16 20h1v1h-1zM23 20h1v1h-1zM17 19h1v1h-1zM24 19h1v1h-1zM18 18h1v1h-1zM26 18h1v1h-1zM28 18h4v1h-4zM20 16h1v1h-1zM31 16h1v1h-1zM21 15h1v1h-1zM23 14h1v1h-1zM29 14h1v1h-1zM25 13h3v1h-3z"/>
<path fill="#ffff7b" stroke="#ffff7b" stroke-width="0.04" d="M21 40h1v1h-1zM26 40h2v1h-2zM19 39h1v1h-1zM16 38h1v1h-1zM29 38h1v1h-1zM29 36h1v1h-1zM37 35h1v1h-1zM25 34h1v1h-1zM35 34h1v1h-1zM14 33h1v1h-1zM36 32h1v1h-1zM22 30h1v1h-1zM14 24h1v1h-1zM22 23h1v1h-1zM23 19h1v1h-1zM25 18h1v1h-1zM19 17h1v1h-1zM31 17h1v1h-1zM30 15h1v1h-1zM24 14h1v1h-1zM28 14h1v1h-1z"/>
<path fill="#ffff82" stroke="#ffff82" stroke-width="0.04" d="M22 40h1v1h-1zM24 40h2v1h-2zM27 39h1v1h-1zM17 38h1v1h-1zM28 38h1v1h-1zM28 37h2v1h-2zM15 36h1v1h-1zM27 36h2v1h-2zM26 35h1v1h-1zM36 35h1v1h-1zM24 34h1v1h-1zM38 34h1v1h-1zM23 33h1v1h-1zM36 33h1v1h-1zM38 33h1v1h-1zM14 32h1v1h-1zM23 32h1v1h-1zM37 32h2v1h-2zM14 25h1v1h-1zM23 18h2v1h-2zM24 17h7v1h-7zM21 16h1v1h-1zM24 16h1v1h-1zM29 16h2v1h-2zM22 15h3v1h-3zM28 15h2v1h-2zM25 14h3v1h-3z"/>
<path fill="#ffff8a" stroke="#ffff8a" stroke-width="0.04" d="M23 40h1v1h-1zM20 39h1v1h-1zM26 39h1v1h-1zM27 38h1v1h-1zM16 37h1v1h-1zM27 37h1v1h-1zM26 36h1v1h-1zM15 35h1v1h-1zM25 35h1v1h-1zM15 34h1v1h-1zM36 34h2v1h-2zM37 33h1v1h-1zM14 31h1v1h-1zM22 31h1v1h-1zM22 22h1v1h-1zM22 21h1v1h-1zM17 20h1v1h-1zM18 19h1v1h-1zM19 18h1v1h-1zM20 17h1v1h-1zM23 17h1v1h-1zM22 16h2v1h-2zM25 16h2v1h-2zM28 16h1v1h-1zM25 15h1v1h-1z"/>
<path fill="#ffff91" stroke="#ffff91" stroke-width="0.04" d="M21 39h1v1h-1zM25 39h1v1h-1zM18 38h1v1h-1zM26 38h1v1h-1zM26 37h1v1h-1zM16 36h1v1h-1zM24 35h1v1h-1zM15 33h1v1h-1zM14 30h1v1h-1zM14 29h1v1h-1zM21 29h1v1h-1zM14 28h1v1h-1zM14 27h1v1h-1zM14 26h1v1h-1zM15 22h1v1h-1zM16 21h1v1h-1zM22 20h1v1h-1zM22 19h1v1h-1zM22 18h1v1h-1zM21 17h2v1h-2zM27 16h1v1h-1zM26 15h2v1h-2z"/>
<path fill="#ffff99" stroke="#ffff99" stroke-width="0.04" d="M22 39h3v1h-3zM19 38h1v1h-1zM25 38h1v1h-1zM17 37h1v1h-1zM25 37h1v1h-1zM25 36h1v1h-1zM16 35h1v1h-1zM16 34h1v1h-1zM23 34h1v1h-1zM15 32h1v1h-1zM21 28h1v1h-1zM21 27h1v1h-1zM21 26h1v1h-1zM15 23h1v1h-1z"/>
<path fill="#ffffa1" stroke="#ffffa1" stroke-width="0.04" d="M24 38h1v1h-1zM18 37h1v1h-1zM17 36h1v1h-1zM16 33h1v1h-1zM16 32h1v1h-1zM22 32h1v1h-1zM15 31h1v1h-1zM15 30h1v1h-1zM21 30h1v1h-1zM15 29h1v1h-1zM21 25h1v1h-1zM15 24h1v1h-1zM19 19h1v1h-1zM20 18h1v1h-1z"/>
<path fill="#ffffaa" stroke="#ffffaa" stroke-width="0.04" d="M20 38h1v1h-1zM23 38h1v1h-1zM24 37h1v1h-1zM24 36h1v1h-1zM17 35h1v1h-1zM23 35h1v1h-1zM22 33h1v1h-1zM16 31h1v1h-1zM16 30h1v1h-1zM15 28h1v1h-1zM15 25h1v1h-1zM21 24h1v1h-1zM21 23h1v1h-1zM17 21h1v1h-1zM18 20h1v1h-1zM21 19h1v1h-1zM21 18h1v1h-1z"/>
<path fill="#ffffb2" stroke="#ffffb2" stroke-width="0.04" d="M21 38h2v1h-2zM19 37h1v1h-1zM18 36h1v1h-1zM17 34h1v1h-1zM21 31h1v1h-1zM16 29h1v1h-1zM15 27h1v1h-1zM15 26h1v1h-1zM16 22h1v1h-1zM21 22h1v1h-1zM21 21h1v1h-1zM21 20h1v1h-1zM20 19h1v1h-1z"/>
<path fill="#ffffbb" stroke="#ffffbb" stroke-width="0.04" d="M23 37h1v1h-1zM23 36h1v1h-1zM18 35h1v1h-1zM22 34h1v1h-1zM17 33h1v1h-1zM17 32h1v1h-1zM16 28h1v1h-1zM19 20h1v1h-1z"/>
<path fill="#ffffc4" stroke="#ffffc4" stroke-width="0.04" d="M20 37h3v1h-3zM19 36h1v1h-1zM22 35h1v1h-1zM21 32h1v1h-1zM17 31h1v1h-1zM17 30h1v1h-1zM20 28h1v1h-1zM16 27h1v1h-1zM20 27h1v1h-1zM16 26h1v1h-1zM20 26h1v1h-1zM16 25h1v1h-1zM16 24h1v1h-1zM16 23h1v1h-1zM17 22h1v1h-1zM18 21h1v1h-1zM20 20h1v1h-1z"/>
<path fill="#ffffcd" stroke="#ffffcd" stroke-width="0.04" d="M20 36h1v1h-1zM22 36h1v1h-1zM19 35h1v1h-1zM18 34h1v1h-1zM21 34h1v1h-1zM21 33h1v1h-1zM17 29h1v1h-1zM20 29h1v1h-1zM20 25h1v1h-1zM17 23h1v1h-1zM18 22h1v1h-1zM19 21h1v1h-1z"/>
<path fill="#ffffd6" stroke="#ffffd6" stroke-width="0.04" d="M21 36h1v1h-1zM20 35h2v1h-2zM18 33h1v1h-1zM20 31h1v1h-1zM20 30h1v1h-1zM17 28h1v1h-1zM17 27h1v1h-1zM17 26h1v1h-1zM17 25h1v1h-1zM17 24h1v1h-1zM20 24h1v1h-1zM18 23h1v1h-1zM20 23h1v1h-1zM20 22h1v1h-1zM20 21h1v1h-1z"/>
<path fill="#ffffdf" stroke="#ffffdf" stroke-width="0.04" d="M19 34h2v1h-2zM20 33h1v1h-1zM18 32h1v1h-1zM20 32h1v1h-1zM18 31h1v1h-1zM18 24h1v1h-1zM19 23h1v1h-1zM19 22h1v1h-1z"/>
<path fill="#ffffe8" stroke="#ffffe8" stroke-width="0.04" d="M19 33h1v1h-1zM19 32h1v1h-1zM18 30h1v1h-1zM18 29h1v1h-1zM19 27h1v1h-1zM19 26h1v1h-1zM18 25h2v1h-2zM19 24h1v1h-1z"/>
<path fill="#fffff1" stroke="#fffff1" stroke-width="0.04" d="M19 31h1v1h-1zM19 30h1v1h-1zM19 29h1v1h-1zM18 28h2v1h-2zM18 27h1v1h-1zM18 26h1v1h-1z"/>
</g></g>
<path d="M2553.5 1018.8L2545.0 1009.2L2542.5 998.3L2542.0 997.3M2526.8 973.7L2522.1 965.5L2519.4 954.6L2512.0 943.7L2507.5 935.1L2506.6 932.8L2498.0 921.9L2496.8 911.0L2497.1 900.0L2497.4 889.1L2496.0 878.2L2486.6 867.3M2461.8 1522.1L2472.7 1511.2L2473.0 1510.9L2484.5 1508.0L2496.0 1501.1L2498.8 1489.3L2503.2 1484.4M2528.7 1456.6L2530.5 1454.5L2541.0 1445.7L2553.5 1434.7M2553.5 1412.8L2550.7 1411.8M2521.1 1391.1L2520.5 1380.2L2530.0 1369.3L2541.7 1358.4L2553.0 1347.5L2553.5 1346.3M2553.5 1165.4L2551.0 1163.7M2519.0 1144.1L2507.5 1140.1L2495.9 1129.2L2484.5 1118.3L2438.5 1075.0L2426.7 1063.7L2403.9 1041.9L2392.5 1030.9L2381.1 1020.1L2370.4 1009.2L2369.5 1003.3L2368.4 998.3L2359.2 987.4L2349.4 976.4L2346.5 965.5L2346.5 954.6L2337.3 943.7L2335.2 932.8L2336.1 921.9L2335.0 911.0L2326.4 900.0L2324.6 889.1L2325.1 878.2L2324.5 867.3M2410.9 1522.1L2413.5 1511.2L2415.5 1503.5L2416.6 1500.3L2419.5 1489.3L2422.8 1478.4L2427.0 1468.4L2430.4 1467.5L2438.5 1457.4L2438.8 1456.6L2438.4 1445.7L2438.5 1444.2L2443.4 1434.8L2450.0 1428.1L2452.8 1423.9L2461.5 1416.0L2462.2 1413.0L2462.7 1402.0L2462.9 1391.1L2461.9 1380.2L2461.5 1379.5L2450.0 1374.8L2446.4 1369.3L2438.5 1361.9L2437.5 1358.4L2435.5 1347.5L2437.0 1336.6L2437.5 1325.7L2438.5 1319.2L2440.4 1314.7L2446.2 1303.8L2450.0 1295.2L2451.1 1292.9L2458.1 1282.0L2461.5 1278.4L2471.1 1271.1L2484.5 1265.6L2494.8 1260.2L2519.0 1250.7L2522.9 1249.3L2530.5 1245.2L2537.4 1238.3L2542.0 1228.6L2542.6 1227.4L2544.2 1216.5L2542.3 1205.6L2539.0 1194.7L2533.9 1183.8L2530.5 1179.5L2524.3 1172.9L2519.0 1166.6L2507.5 1164.6L2502.4 1162.0L2496.0 1159.0L2484.9 1151.0L2473.0 1142.6L2472.0 1140.1L2461.4 1129.2L2450.0 1118.7L2438.5 1108.0L2427.0 1097.5L2425.6 1096.5L2415.5 1087.1L2413.7 1085.6L2392.5 1064.8L2381.0 1053.3L2369.5 1042.8L2367.9 1041.9L2358.0 1037.8L2349.8 1031.0L2336.9 1020.1L2324.7 1009.2L2323.5 1007.7L2317.1 998.3L2312.0 992.8L2302.6 987.4L2300.5 986.2L2289.0 982.3L2265.3 976.4L2254.4 971.6L2243.4 965.5L2233.5 954.6L2231.4 945.3L2231.0 943.7L2231.4 937.5L2231.7 932.8L2231.4 932.0L2221.0 921.9L2219.9 921.1L2208.4 918.5L2199.0 911.0L2196.9 909.2L2185.8 900.0L2185.4 899.9L2173.9 897.0L2163.3 889.1L2162.4 888.8M2124.1 887.8L2116.4 887.0L2105.5 878.2L2094.4 867.3M1564.2 1239.6L1567.8 1249.3L1572.8 1260.2L1575.7 1265.9L1578.5 1271.1L1583.6 1282.0L1587.2 1290.5L1592.0 1303.8L1594.2 1314.7M1596.8 1351.1L1597.1 1358.4L1598.1 1369.3L1598.7 1370.6L1608.1 1380.2L1610.2 1391.1L1621.5 1402.0L1633.2 1412.8L1633.3 1413.0L1633.2 1421.1L1633.1 1423.9L1621.8 1434.8L1617.7 1445.7L1610.2 1453.5L1608.8 1456.6L1608.1 1467.5L1608.2 1478.4L1608.1 1489.3L1609.0 1500.3L1610.2 1502.6L1618.3 1511.2L1621.6 1522.1M1564.2 913.3L1566.0 921.9L1566.9 932.8L1565.1 943.7L1564.2 946.0M1597.4 867.3L1587.2 876.4L1575.7 887.5L1573.9 889.1L1564.2 899.8M1784.9 867.3L1782.8 867.5L1771.3 869.1M1733.7 868.7L1727.6 867.3M1953.4 1522.1L1955.3 1521.2L1966.8 1511.9L1968.1 1511.2M2005.1 1501.6L2008.8 1500.3L2012.9 1499.0L2024.4 1496.5L2033.7 1500.3L2035.9 1501.6L2047.7 1511.2L2057.5 1522.1M2387.7 1522.1L2392.2 1500.3L2396.2 1478.4L2400.9 1456.6L2402.7 1445.7L2404.0 1442.4L2407.4 1434.8L2413.8 1423.9L2415.5 1421.0L2427.0 1404.5L2429.2 1402.0L2434.5 1391.1L2433.2 1380.2L2429.0 1369.3L2427.0 1364.8L2425.4 1358.4L2423.9 1347.5L2423.3 1336.6L2423.1 1325.7L2425.2 1314.7L2427.0 1304.6L2431.7 1292.9L2434.7 1282.0L2438.5 1273.1L2440.2 1271.1L2450.0 1260.6L2461.5 1250.1L2466.2 1249.3L2473.0 1247.2L2484.5 1239.5L2488.6 1238.3L2496.0 1231.6L2499.0 1227.4L2506.7 1216.5L2507.5 1207.9L2507.5 1205.4L2499.4 1194.7L2496.5 1183.8L2496.0 1183.3L2484.5 1180.9L2473.0 1180.7L2461.5 1173.6L2451.6 1162.0L2450.0 1159.7L2441.9 1151.0L2430.3 1140.1L2427.0 1134.5L2422.8 1129.2L2415.5 1124.6L2404.0 1120.7L2398.8 1118.3L2392.5 1115.3L2381.0 1106.7L2369.5 1096.9L2369.1 1096.5L2362.5 1085.6L2358.0 1079.7L2354.8 1074.7L2348.9 1063.7L2346.5 1061.5L2341.8 1052.8L2335.1 1041.9L2323.5 1033.0L2320.6 1031.0L2312.0 1023.3L2309.3 1020.1L2301.2 1009.2L2300.5 1008.4L2289.0 1001.3L2278.6 998.3L2277.5 997.9L2269.8 997.7M2235.2 997.4L2231.4 997.0L2219.9 988.3L2208.4 984.9L2197.3 976.4L2196.9 976.2L2185.4 973.6L2175.6 965.5L2173.9 964.2L2162.4 953.2L2152.1 943.7L2140.3 932.8L2139.4 931.8L2128.1 921.9L2127.9 921.8L2116.4 921.0L2104.9 920.7L2093.4 916.8L2081.9 911.1L2070.4 909.5L2058.9 908.2L2047.7 900.0L2047.4 899.9L2035.9 899.2L2024.4 897.7L2012.9 889.8L2001.4 889.1L1989.9 886.1L1978.7 878.2L1978.3 878.1L1966.8 877.4L1955.3 878.1L1943.8 875.5L1933.4 867.3M1564.2 1136.8L1565.2 1140.1L1569.9 1151.0L1573.5 1162.0L1575.2 1172.9L1575.4 1183.8L1575.1 1194.7L1574.6 1205.6L1575.0 1216.5L1575.7 1218.4L1578.5 1227.4L1583.0 1238.3L1587.2 1246.1L1588.7 1249.3L1598.7 1265.8L1601.1 1271.1L1605.1 1282.0L1610.2 1293.8L1613.7 1303.8L1617.6 1314.7M1631.6 1350.2L1636.5 1358.4L1644.7 1368.6L1651.1 1380.2L1655.1 1391.1L1656.2 1393.0L1660.7 1402.0L1667.7 1409.7L1670.4 1413.0L1678.4 1423.9L1679.2 1428.6L1680.2 1434.8L1679.2 1441.3L1677.7 1445.7L1667.7 1456.1L1667.2 1456.6L1665.5 1467.5L1665.4 1478.4L1666.8 1489.3L1675.8 1500.3L1679.2 1509.6L1679.6 1511.2L1687.9 1522.1M1874.3 867.3L1863.3 877.9L1863.1 878.2L1851.8 886.7L1840.3 888.0L1828.8 888.1L1817.3 887.9L1805.8 888.3L1797.8 889.1L1794.3 889.6L1782.8 897.6L1771.3 899.6L1759.7 900.0L1751.1 903.4M1713.8 900.0L1702.3 908.0L1690.7 910.0L1679.2 909.8L1667.7 910.7L1656.2 920.8L1655.3 921.9L1644.7 931.8L1643.9 932.8L1633.2 942.9L1621.3 954.6L1610.9 965.5L1610.2 971.1L1609.8 976.4L1608.6 987.4L1598.7 996.4L1597.3 998.3L1587.3 1009.2L1586.9 1020.1L1587.6 1031.0L1585.3 1041.9L1579.5 1052.8L1575.6 1063.7L1574.7 1074.7L1572.3 1085.6L1564.2 1096.1M1897.6 1522.1L1909.3 1512.3L1920.8 1502.7L1923.5 1500.3L1932.3 1493.1L1943.8 1483.0L1949.5 1478.4L1955.3 1473.9M1995.1 1467.5L2001.4 1464.3L2012.9 1458.0L2024.4 1462.0L2035.0 1467.5L2047.4 1474.3L2054.9 1478.4L2058.9 1480.5L2070.4 1484.4L2081.9 1488.2L2114.0 1500.3L2116.4 1501.6L2127.6 1511.2L2139.4 1521.6L2150.9 1521.6L2162.4 1511.8L2174.4 1500.3L2185.4 1490.6M2223.8 1484.5L2231.4 1485.2L2239.3 1489.3L2242.9 1491.9L2254.4 1501.9L2265.9 1510.5L2269.3 1511.2L2277.5 1512.5L2289.0 1521.9L2289.2 1522.1M2361.9 1522.1L2365.3 1511.2L2368.1 1500.3L2373.4 1478.4L2378.3 1467.5L2381.0 1462.4L2384.1 1456.6L2389.0 1445.7L2392.5 1439.6L2394.8 1434.8L2402.1 1423.9L2404.0 1421.3L2409.4 1413.0L2417.9 1402.0L2424.5 1391.1L2423.5 1380.2L2420.2 1369.3L2419.3 1358.4L2418.8 1347.5L2417.8 1336.6L2417.1 1325.7L2419.7 1314.7L2419.1 1303.8L2422.6 1292.9L2424.3 1282.0L2427.0 1271.4L2431.3 1260.2L2434.1 1249.3L2435.3 1238.3L2436.8 1227.4L2438.5 1217.2L2438.7 1216.5L2438.8 1205.6L2434.2 1194.7L2427.0 1185.7L2415.9 1172.9L2415.5 1172.1L2407.0 1162.0L2404.0 1160.4L2392.5 1152.4L2390.9 1151.0L2381.0 1143.4L2378.8 1140.1L2373.9 1129.2L2369.5 1124.2L2363.7 1118.3L2358.0 1113.6L2352.3 1107.4L2346.5 1096.8L2341.3 1085.6L2335.0 1077.0L2332.9 1074.7L2325.9 1063.7L2323.5 1056.6L2320.6 1052.8L2312.0 1047.4L2304.9 1041.9L2300.5 1037.8L2296.3 1031.0L2289.0 1021.0L2287.6 1020.1L2277.5 1016.1L2265.9 1013.4L2254.4 1012.3L2242.9 1014.6L2231.4 1016.5L2219.9 1018.2L2208.4 1018.6L2196.9 1014.7L2187.9 1009.2L2185.4 1007.1L2175.8 998.3L2173.9 996.7L2151.9 976.4L2139.4 965.9L2127.9 962.2L2116.4 959.8L2104.8 954.6L2093.4 950.1L2081.9 949.2L2070.4 949.1L2058.9 947.9L2047.4 947.8L2035.9 943.8L2024.4 934.5L2021.4 932.8L2012.9 927.9L1999.2 921.9L1989.9 917.0L1978.3 911.9L1976.3 911.0L1966.8 905.8L1955.3 901.0L1952.9 900.0L1943.8 896.0L1932.3 891.3L1925.3 889.1L1920.8 887.0L1909.3 884.7L1897.8 888.4L1896.8 889.1L1886.3 893.4L1874.8 896.2L1863.3 898.4L1855.6 899.2M1817.3 899.6L1805.8 902.6L1794.3 907.9L1788.7 911.0L1782.8 913.5L1771.3 920.7L1769.8 921.9L1759.8 927.0L1748.3 930.8L1741.1 932.8L1736.8 933.6L1725.3 934.9L1713.8 933.5L1702.3 936.9L1690.7 942.6L1679.2 948.7L1670.8 954.6L1667.7 956.9L1657.0 965.5L1656.7 976.4L1656.2 978.5L1653.6 987.4L1644.7 996.3L1633.2 1007.0L1630.7 1009.2L1619.4 1020.1L1610.2 1031.9L1602.2 1041.9L1598.7 1047.3L1595.3 1052.8L1590.9 1063.7L1587.2 1075.3L1584.1 1085.6L1579.4 1096.5L1576.0 1107.4L1573.6 1118.3L1574.0 1129.2L1575.7 1134.0L1577.4 1140.1L1581.7 1151.0L1587.2 1171.5L1587.5 1172.9L1590.5 1183.8L1594.0 1194.7L1591.3 1205.6L1587.9 1216.5L1590.7 1227.4L1595.6 1238.3L1598.7 1243.9L1601.6 1249.3L1607.9 1260.2L1610.2 1264.6L1613.2 1271.1L1617.7 1282.0L1621.7 1291.3L1626.4 1303.8L1633.2 1322.7L1634.3 1325.7L1640.1 1336.6L1644.7 1344.2L1646.8 1347.5L1654.2 1358.4L1656.2 1361.4L1660.8 1369.3L1665.0 1380.2L1667.0 1391.1L1674.7 1402.0L1679.2 1407.7L1683.8 1413.0L1691.2 1423.9L1696.8 1434.8L1701.7 1445.7L1707.0 1456.6L1709.9 1467.5L1703.9 1478.4L1699.3 1489.3L1700.6 1500.3L1702.6 1511.2L1704.9 1522.1M1862.9 1522.1L1863.3 1521.8L1886.3 1510.2L1897.8 1502.5L1900.5 1500.3L1909.3 1493.7L1920.8 1484.8L1928.4 1478.4L1939.4 1467.5L1943.8 1462.7L1950.8 1456.6L1955.3 1451.6L1962.7 1445.7L1966.8 1441.8L1976.0 1434.8L1978.3 1432.7L1989.9 1424.7L1998.3 1423.9L2001.4 1423.6L2012.9 1423.8L2024.4 1423.6L2026.6 1423.9L2035.9 1425.6L2047.4 1433.8L2058.9 1434.4L2070.4 1436.4L2081.9 1441.6L2093.4 1445.3L2096.3 1445.7L2104.9 1447.7L2116.4 1454.7L2124.3 1456.6L2127.9 1457.8L2139.4 1466.3L2150.9 1466.8L2162.4 1457.1L2162.9 1456.6L2173.9 1448.0L2184.5 1445.7L2196.9 1444.3L2208.4 1441.7L2219.9 1443.1L2231.4 1445.5L2238.9 1445.6M2277.5 1445.7L2289.0 1448.5L2299.2 1456.6L2300.5 1457.9L2311.2 1467.5L2312.0 1468.3L2323.5 1477.8L2327.4 1478.4L2335.0 1480.6L2346.2 1489.3L2346.8 1489.3L2358.0 1480.8L2358.3 1478.4L2362.0 1467.5L2369.5 1456.3L2374.6 1445.7L2381.0 1435.4L2389.1 1423.9L2392.5 1419.9L2397.3 1413.0L2404.0 1405.1L2406.3 1402.0L2415.5 1391.5L2415.7 1391.1L2414.0 1380.2L2411.1 1369.3L2404.0 1361.2L2402.5 1358.4L2404.0 1355.9L2412.2 1347.5L2409.4 1336.6L2408.1 1325.7L2413.3 1314.7L2411.1 1303.8L2415.1 1292.9L2415.5 1290.3L2416.4 1282.0L2417.8 1271.1L2418.5 1260.2L2418.4 1249.3L2415.5 1241.3L2408.1 1227.4L2405.8 1216.5L2404.0 1206.9L2403.4 1205.6L2393.5 1194.7L2392.5 1194.2L2381.3 1183.8L2369.5 1173.7L2368.6 1172.9L2361.4 1162.0L2358.0 1155.1L2348.4 1140.1L2335.0 1121.1L2333.5 1118.3L2330.1 1107.4L2327.8 1096.5L2323.5 1086.8L2322.8 1085.6L2312.0 1077.9L2308.4 1074.7L2300.5 1066.5L2298.5 1063.7L2290.9 1052.8L2289.0 1049.9L2285.2 1041.9L2277.5 1031.6L2276.5 1031.0L2265.9 1025.7L2254.4 1023.3L2242.9 1025.2L2231.4 1027.8L2219.9 1030.3L2208.4 1030.9L2196.9 1031.4L2191.4 1031.0L2185.4 1030.3L2173.9 1025.6L2163.9 1020.1L2151.7 1009.2L2140.2 998.3L2128.1 987.4L2127.9 987.2L2116.4 986.2L2104.9 986.6L2093.4 984.7L2082.7 976.4L2081.9 976.1L2074.1 976.4L2070.4 976.7L2058.9 973.8L2048.7 965.5L2035.9 961.4L2026.2 954.6L2012.9 944.2L2001.4 937.1L1992.8 932.8L1978.3 925.6L1971.2 921.9L1955.3 913.4L1943.8 908.0L1932.3 903.6L1920.8 900.6L1914.2 900.0L1909.3 899.5L1907.2 900.0L1897.8 901.7L1886.3 904.9L1874.8 906.9L1863.3 907.9L1851.8 908.2L1840.3 908.0L1828.8 908.0L1817.3 908.9L1811.5 911.0L1805.8 912.7L1794.3 917.5L1785.9 921.9L1782.8 923.4L1771.3 929.8L1766.1 932.8L1759.8 935.4L1736.8 941.3L1725.3 944.4L1713.8 946.5L1702.3 950.8L1695.1 954.6L1690.7 957.0L1679.2 965.1L1678.8 965.5L1669.5 976.4L1667.7 979.3L1663.9 987.4L1656.2 997.1L1644.7 1008.8L1633.7 1020.1L1623.9 1031.0L1615.0 1041.9L1610.2 1048.6L1607.1 1052.8L1601.8 1063.7L1598.7 1071.6L1597.4 1074.7L1589.7 1096.5L1587.2 1105.5L1586.6 1107.4L1584.5 1118.3L1584.4 1129.2L1587.1 1140.1L1590.4 1151.0L1592.7 1162.0L1595.4 1172.9L1598.7 1181.0L1599.7 1183.8L1603.3 1194.7L1602.2 1205.6L1598.7 1216.6L1601.0 1227.4L1605.9 1238.3L1610.2 1245.9L1617.8 1260.2L1621.7 1268.2L1623.1 1271.1L1632.5 1292.9L1641.2 1314.7L1644.7 1322.5L1646.3 1325.7L1653.0 1336.6L1667.9 1358.4L1674.4 1369.3L1679.2 1380.0L1685.6 1391.1L1690.7 1397.7L1694.1 1402.0L1701.7 1413.0L1707.6 1423.9L1713.2 1434.8L1719.3 1445.7L1723.2 1456.6L1723.2 1467.5L1722.5 1478.4L1721.4 1489.3L1721.5 1500.3L1724.4 1511.2L1725.3 1512.9L1730.4 1522.1M1843.5 1522.1L1851.8 1513.6L1855.0 1511.2L1863.3 1506.0L1874.8 1500.0L1886.3 1493.2L1891.9 1489.3L1897.8 1485.1L1906.8 1478.4L1909.3 1476.4L1919.4 1467.5L1929.2 1456.6L1937.9 1445.7L1943.8 1437.7L1955.3 1424.0L1966.8 1413.2L1978.3 1406.1L1988.8 1402.0L1989.9 1401.7L2001.4 1399.6L2012.9 1398.2L2024.4 1397.2L2035.9 1397.2L2047.4 1400.2L2051.8 1402.0L2058.9 1406.2L2070.4 1411.2L2081.9 1415.5L2093.4 1418.6L2116.4 1423.9L2127.9 1426.1L2139.4 1426.2L2150.9 1424.7L2162.4 1426.2M2200.8 1425.8L2208.4 1426.0L2219.9 1427.4L2231.4 1428.8L2242.9 1430.0L2254.4 1430.7L2265.9 1430.6L2277.5 1430.2L2289.0 1430.2L2300.5 1431.4L2312.0 1434.1L2314.2 1434.8L2323.5 1438.8L2335.0 1440.1L2346.5 1438.1L2358.0 1430.8L2364.7 1423.9L2369.5 1420.4L2377.1 1413.0L2381.0 1409.8L2387.3 1402.0L2392.5 1397.2L2398.1 1391.1L2402.1 1380.2L2401.4 1369.3L2396.6 1358.4L2401.6 1347.5L2394.1 1336.6L2395.0 1325.7L2404.0 1315.0L2404.0 1313.6L2402.5 1303.8L2402.9 1292.9L2404.0 1287.0L2404.8 1282.0L2404.5 1260.2L2404.0 1258.5L2399.1 1249.3L2391.9 1238.3L2385.4 1227.4L2381.0 1219.5L2379.6 1216.5L2373.2 1205.6L2369.5 1198.0L2366.1 1194.7L2361.1 1183.8L2358.0 1180.9L2345.5 1172.9L2335.0 1165.4L2330.9 1162.0L2325.0 1151.0L2318.8 1140.1L2313.1 1129.2L2312.0 1119.5L2311.5 1107.4L2309.3 1096.5L2302.9 1085.6L2300.5 1083.3L2289.0 1068.4L2286.2 1063.7L2282.2 1052.8L2277.5 1045.8L2272.7 1041.9L2265.9 1036.7L2254.4 1033.5L2242.9 1033.8L2231.4 1036.2L2219.9 1038.2L2208.4 1039.9L2202.0 1041.9L2196.9 1043.3L2185.4 1042.4L2173.6 1041.9L2162.4 1040.6L2150.9 1036.0L2139.4 1031.2L2127.9 1029.3L2116.4 1029.6L2104.9 1029.3L2093.4 1025.9L2081.9 1017.8L2070.9 1009.2L2058.9 1004.3L2053.4 998.3L2047.4 991.3L2044.5 987.4L2035.9 978.2L2034.4 976.4L2024.4 968.4L2021.2 965.5L2012.9 958.5L2008.3 954.6L2001.4 949.5L1991.5 943.7L1978.3 937.1L1970.1 932.8L1966.8 931.1L1951.1 921.9L1943.8 918.1L1932.3 913.8L1920.8 910.8L1909.3 909.3L1897.8 911.0L1886.3 913.7L1874.8 915.6L1863.3 916.2L1840.3 916.3L1828.8 916.3L1817.3 917.3L1805.8 920.7L1794.3 925.9L1782.8 931.3L1780.2 932.8L1771.3 937.3L1759.8 941.4L1752.1 943.7L1748.3 945.0L1736.8 948.4L1717.6 954.6L1713.8 956.2L1702.3 961.7L1695.9 965.5L1690.7 968.7L1681.4 976.4L1679.2 978.5L1672.9 987.4L1667.7 993.7L1664.2 998.3L1656.2 1007.2L1654.2 1009.2L1644.5 1020.1L1634.9 1031.0L1625.8 1041.9L1621.7 1047.2L1617.5 1052.8L1611.5 1063.7L1610.2 1066.6L1606.7 1074.7L1602.8 1085.6L1599.0 1096.5L1596.0 1107.4L1594.4 1118.3L1593.7 1129.2L1595.2 1140.1L1597.8 1151.0L1600.0 1162.0L1602.9 1172.9L1606.7 1183.8L1610.2 1193.8L1610.6 1194.7L1610.4 1205.6L1608.3 1216.5L1610.7 1227.4L1615.5 1238.3L1621.7 1250.2L1626.8 1260.2L1632.1 1271.1L1637.0 1282.0L1646.4 1303.8L1651.4 1314.7L1656.2 1323.3L1657.6 1325.7L1664.8 1336.6L1667.7 1340.7L1679.2 1356.0L1681.4 1358.4L1689.7 1369.3L1690.7 1370.9L1698.3 1380.2L1702.3 1385.1L1707.4 1391.1L1713.8 1399.0L1716.2 1402.0L1722.1 1413.0L1725.3 1420.2L1727.0 1423.9L1732.5 1434.8L1736.8 1443.4L1737.9 1445.7L1740.9 1456.6L1741.6 1467.5L1742.6 1478.4L1743.8 1489.3L1746.4 1500.3L1748.3 1504.0L1752.4 1511.2L1758.8 1522.1M1798.6 1511.2L1805.8 1513.1L1817.3 1517.4L1828.8 1516.2L1833.7 1511.2L1840.3 1506.0L1848.0 1500.3L1863.3 1490.7L1865.6 1489.3L1874.8 1483.3L1882.1 1478.4L1886.3 1475.3L1896.2 1467.5L1907.8 1456.6L1917.1 1445.7L1920.8 1440.7L1932.3 1424.8L1941.6 1413.0L1943.8 1410.3L1952.1 1402.0L1955.3 1399.3L1966.8 1391.7L1968.1 1391.1L1978.3 1387.1L1989.9 1384.4L2001.4 1383.0L2012.9 1382.4L2024.4 1382.4L2035.9 1383.0L2047.4 1384.8L2058.9 1387.5L2070.4 1389.9L2077.8 1391.1L2081.9 1392.1L2093.4 1394.4L2104.9 1396.6L2116.4 1398.6L2127.9 1400.8L2134.4 1402.0L2139.4 1403.3L2162.4 1408.0L2173.9 1409.9L2185.4 1411.5L2195.2 1413.0L2208.4 1414.7L2231.4 1417.0L2242.9 1418.3L2254.4 1419.4L2265.9 1418.9L2277.5 1418.2L2289.0 1417.2L2300.5 1415.5L2312.0 1413.3L2323.5 1411.0L2335.0 1407.5L2346.5 1402.3L2347.1 1402.0L2358.0 1398.3L2369.5 1393.3L2372.3 1391.1L2381.0 1385.1L2387.0 1380.2L2392.3 1369.3L2389.8 1358.4L2388.8 1347.5L2385.7 1336.6L2385.8 1325.7L2388.3 1314.7L2389.4 1303.8L2388.9 1292.9L2388.2 1282.0L2383.9 1271.1L2381.0 1266.3L2371.3 1249.3L2369.5 1245.4L2366.9 1238.3L2363.7 1227.4L2360.1 1216.5L2358.0 1214.9L2346.5 1208.3L2342.5 1205.6L2335.0 1197.2L2333.1 1194.7L2332.9 1183.8L2323.5 1176.0L2312.0 1174.3L2306.1 1172.9L2299.6 1162.0L2294.7 1151.0L2293.2 1140.1L2292.7 1118.3L2292.3 1107.4L2292.1 1096.5L2289.2 1085.6L2282.2 1074.7L2277.3 1063.7L2271.9 1052.8L2265.9 1048.0L2254.4 1042.7L2247.6 1041.9L2242.9 1041.6L2241.3 1041.9L2231.4 1044.7L2219.9 1047.0L2196.9 1051.3L2187.9 1052.8L2185.4 1053.5L2173.9 1055.8L2162.4 1057.4L2150.9 1057.1L2139.4 1052.6L2127.9 1051.6L2116.4 1052.6L2115.7 1052.8L2104.9 1057.8L2093.4 1062.4L2081.9 1061.2L2072.1 1052.8L2061.7 1041.9L2058.9 1032.8L2058.0 1031.0L2047.4 1020.6L2047.2 1020.1L2039.2 1009.2L2035.9 1004.4L2032.5 998.3L2025.0 987.4L2016.2 976.4L2004.4 965.5L2001.4 962.9L1990.6 954.6L1978.3 948.2L1966.8 942.2L1955.3 935.5L1950.9 932.8L1943.8 928.6L1932.3 923.7L1924.9 921.9L1920.8 920.9L1909.3 918.8L1897.8 920.0L1886.3 922.3L1874.8 924.1M1836.5 924.9L1828.8 925.0L1817.3 926.0L1805.8 929.3L1797.4 932.8L1782.8 939.3L1771.3 944.3L1759.8 948.1L1748.3 951.7L1738.3 954.6L1725.3 960.5L1713.7 965.5L1702.3 972.5L1696.0 976.4L1690.7 980.0L1683.1 987.4L1679.2 991.2L1673.6 998.3L1667.7 1004.7L1663.8 1009.2L1656.2 1018.1L1654.5 1020.1L1644.7 1031.8L1633.2 1046.1L1628.0 1052.8L1621.7 1063.0L1616.4 1074.7L1612.3 1085.6L1610.2 1091.6L1608.6 1096.5L1605.8 1107.4L1604.3 1118.3L1603.1 1129.2L1603.9 1140.1L1605.8 1151.0L1607.5 1162.0L1610.0 1172.9L1614.7 1183.8L1618.7 1194.7L1619.2 1205.6L1618.1 1216.5L1620.3 1227.4L1621.7 1230.9L1624.6 1238.3L1629.9 1249.3L1633.2 1255.7L1640.7 1271.1L1645.7 1282.0L1650.5 1292.9L1655.5 1303.8L1661.1 1314.7L1668.0 1325.7L1675.9 1336.6L1679.2 1340.8L1690.7 1353.4L1696.9 1358.4L1702.3 1363.5L1709.5 1369.3L1719.9 1380.2L1729.9 1391.1L1736.8 1400.9L1737.5 1402.0L1743.2 1413.0L1748.3 1422.2L1755.3 1434.8L1760.0 1445.7L1765.5 1467.5L1769.9 1478.4L1771.3 1480.9L1777.1 1489.3L1782.8 1498.3L1784.3 1500.3L1794.3 1509.8L1798.6 1511.2M1806.1 1478.4L1817.3 1485.2L1828.8 1487.2L1840.3 1484.4L1851.8 1479.1L1863.3 1471.7L1869.4 1467.5L1874.8 1463.6L1883.5 1456.6L1886.3 1454.1L1894.9 1445.7L1897.8 1442.6L1904.4 1434.8L1909.3 1428.6L1920.8 1412.9L1929.2 1402.0L1932.3 1398.3L1939.1 1391.1L1943.8 1386.7L1952.9 1380.2L1955.3 1378.7L1966.8 1373.8L1978.3 1370.8L1989.9 1369.3L2001.4 1369.0L2013.0 1369.3L2024.4 1370.2L2035.9 1371.4L2070.4 1375.4L2081.9 1377.0L2100.7 1380.2L2104.9 1381.0L2116.4 1382.7L2139.4 1385.9L2150.9 1387.7L2162.4 1389.8L2167.5 1391.1L2173.9 1392.5L2185.4 1395.4L2196.9 1398.5L2208.4 1401.4L2213.0 1402.0L2219.9 1402.9L2242.9 1405.4M2281.3 1404.6L2289.0 1403.6L2297.0 1402.0L2312.0 1399.0L2323.5 1396.5L2335.0 1394.1L2344.3 1391.1L2346.5 1390.4L2358.0 1385.9L2369.5 1381.0L2370.5 1380.2L2381.0 1369.3L2380.8 1358.4L2378.3 1347.5L2376.7 1336.6L2376.0 1325.7L2375.6 1314.7L2375.4 1303.8L2374.9 1292.9L2371.7 1282.0L2365.2 1271.1L2359.3 1260.2L2348.1 1238.3L2346.5 1234.4L2338.0 1216.5L2335.0 1214.4L2323.5 1209.1L2320.4 1205.6L2318.4 1194.7L2312.2 1183.8L2310.2 1183.8L2300.5 1184.8L2289.0 1192.9L2278.5 1183.8L2277.5 1183.2L2265.9 1173.4L2265.4 1172.9L2257.7 1162.0L2255.3 1151.0L2261.5 1140.1L2265.9 1134.8L2269.6 1129.2L2273.6 1118.3L2273.8 1107.4L2274.6 1096.5L2276.3 1085.6L2269.1 1074.7L2265.9 1068.2L2261.8 1063.7L2254.4 1058.2L2242.9 1056.1L2231.4 1057.3L2219.9 1059.0L2208.4 1061.0L2196.9 1063.8L2185.4 1067.6L2173.9 1070.9L2162.4 1073.8L2158.7 1074.7L2150.9 1076.7L2127.9 1080.7L2116.4 1083.1L2104.9 1086.0L2093.4 1089.6L2079.3 1085.6L2070.4 1083.2L2062.6 1074.7L2058.9 1071.5L2048.5 1063.7L2047.4 1062.8L2041.4 1052.8L2035.9 1043.0L2030.9 1031.0L2025.9 1020.1L2021.6 1009.2L2015.9 998.3L2012.9 993.4L2008.8 987.4L2001.4 978.8L1999.2 976.4L1989.9 967.9L1986.8 965.5L1978.3 960.2L1968.8 954.6L1955.3 947.1L1943.8 940.2L1932.3 934.7L1925.6 932.8L1920.8 931.6L1909.3 929.6L1897.8 930.1L1886.3 931.7L1874.8 933.1L1863.3 933.9L1828.8 935.0L1817.3 936.1L1805.8 939.4L1793.8 943.7L1782.8 948.2L1771.3 952.4L1762.8 954.6L1759.8 955.6L1736.8 964.3L1734.0 965.5L1713.8 976.5L1702.3 984.0L1697.3 987.4L1690.7 992.5L1685.1 998.3L1679.2 1004.2L1667.7 1017.3L1656.2 1031.4L1648.1 1041.9L1639.7 1052.8L1633.2 1062.5L1632.5 1063.7L1627.3 1074.7L1623.0 1085.6L1621.7 1089.4L1619.6 1096.5L1616.8 1107.4L1615.2 1118.3L1613.8 1129.2L1613.9 1140.1L1615.3 1151.0L1617.0 1162.0L1619.9 1172.9L1621.7 1177.9L1624.3 1183.8L1628.2 1194.7L1628.4 1205.6L1627.8 1216.5L1629.5 1227.4L1633.5 1238.3L1638.6 1249.3L1644.7 1261.8L1649.2 1271.1L1659.1 1292.9L1664.4 1303.8L1667.7 1309.9L1670.5 1314.7L1677.9 1325.7L1679.2 1327.4L1686.8 1336.6L1690.7 1340.8L1702.3 1350.4L1713.8 1358.4L1726.7 1369.3L1738.0 1380.2L1747.6 1391.1L1755.4 1402.0L1759.8 1408.8L1762.7 1413.0L1769.8 1423.9L1776.3 1434.8L1782.0 1445.7L1782.8 1447.5L1788.0 1456.6L1794.3 1466.1L1795.5 1467.5L1805.8 1478.2L1806.1 1478.4M1829.0 1456.6L1840.3 1457.3L1851.8 1454.1L1863.3 1448.1L1874.8 1439.9L1886.3 1429.5L1897.8 1416.7L1918.0 1391.1L1920.8 1387.7L1927.5 1380.2L1932.3 1375.3L1939.9 1369.3L1943.8 1366.6L1955.3 1361.0L1964.2 1358.4L1966.8 1357.7L1978.3 1356.0L1989.9 1355.5L2001.4 1355.7L2012.9 1356.6L2024.4 1358.0L2035.9 1359.7L2047.4 1360.7L2070.4 1361.9L2081.9 1362.6L2093.4 1363.6L2104.9 1365.1L2112.6 1365.5M2150.9 1366.1L2162.4 1367.7L2172.7 1369.3L2173.9 1369.5L2185.4 1372.9L2196.9 1376.9L2208.4 1378.9L2214.2 1380.2L2219.9 1381.4L2231.4 1382.7L2242.9 1386.3L2254.4 1386.3L2265.9 1389.9L2277.5 1388.9L2300.5 1385.7L2312.0 1384.6L2323.5 1381.6L2335.0 1380.8L2337.1 1380.2L2346.5 1376.8L2358.0 1373.4L2367.6 1369.3L2367.8 1358.4L2365.0 1347.5L2363.1 1336.6L2362.0 1325.7L2361.7 1314.7L2360.6 1303.8L2358.0 1293.4L2357.8 1292.9L2346.5 1274.0L2344.9 1271.1L2340.2 1260.2L2335.1 1249.3L2327.2 1238.3L2324.6 1227.4L2323.5 1225.5L2313.4 1216.5L2312.0 1213.4L2300.5 1214.6L2289.0 1215.0L2277.5 1212.3L2265.9 1205.7L2254.4 1201.0L2243.3 1194.7L2234.7 1183.8L2231.4 1176.3L2229.9 1172.9L2221.6 1162.0L2219.9 1154.4L2219.4 1151.0L2219.9 1145.6L2220.9 1140.1L2231.4 1130.9L2238.7 1129.2L2242.9 1128.4L2253.7 1118.3L2254.4 1114.1L2255.0 1107.4L2255.2 1096.5L2254.7 1085.6L2254.4 1085.2L2242.9 1075.1L2231.4 1074.7L2219.9 1075.0L2208.4 1076.4L2196.9 1084.5L2192.3 1085.6L2185.4 1088.0L2173.9 1094.4L2162.4 1094.3L2152.1 1096.5L2139.4 1100.4L2127.9 1103.6L2116.4 1107.1L2104.9 1110.3L2093.4 1112.1L2081.9 1112.4L2070.4 1109.7L2066.9 1107.4L2057.0 1096.5L2047.4 1087.1L2038.0 1074.7L2035.9 1071.1L2033.2 1063.7L2028.3 1052.8L2024.4 1044.4L2018.4 1031.0L2012.9 1019.1L2007.8 1009.2L2001.1 998.3L1992.7 987.4L1989.9 984.3L1981.5 976.4L1978.3 973.9L1966.3 965.5L1955.3 959.0L1943.8 952.4L1932.3 946.6L1920.8 942.9L1909.3 940.9L1897.8 940.4L1886.3 941.1L1863.3 943.8L1851.8 944.7L1840.3 945.4L1828.8 946.3L1817.3 948.1L1805.8 951.0L1794.0 954.6L1782.8 958.5L1771.3 962.4L1760.6 965.5L1748.3 970.4L1736.8 975.6L1735.1 976.4L1725.3 982.2L1716.7 987.4L1702.3 997.3L1690.7 1007.2L1679.2 1019.1L1667.7 1033.1L1661.0 1041.9L1656.2 1048.2L1652.8 1052.8L1645.6 1063.7L1640.0 1074.7L1635.6 1085.6L1633.2 1093.2L1632.3 1096.5L1629.8 1107.4L1628.0 1118.3L1627.0 1129.2L1627.0 1140.1L1628.0 1151.0L1629.9 1162.0L1633.2 1173.1L1637.4 1183.8L1639.6 1194.7L1638.5 1205.6L1637.2 1216.5L1638.6 1227.4L1642.3 1238.3L1647.2 1249.3L1652.5 1260.2L1657.7 1271.1L1667.7 1293.2L1673.0 1303.8L1679.5 1314.7L1687.4 1325.7L1690.7 1329.6L1698.2 1336.6L1702.3 1340.0L1713.8 1347.7L1725.3 1355.7L1729.1 1358.4L1736.8 1364.7L1742.4 1369.3L1748.3 1374.9L1754.0 1380.2L1759.8 1386.8L1763.9 1391.1L1771.3 1400.2L1772.9 1402.0L1781.7 1413.0L1782.8 1414.5L1790.5 1423.9L1794.3 1429.0L1799.6 1434.8L1805.8 1442.0L1817.3 1451.5L1828.8 1456.6L1829.0 1456.6M1819.5 1423.9L1828.8 1428.4L1840.3 1430.4L1851.8 1428.7L1863.3 1423.6L1874.8 1415.7L1886.3 1405.3L1897.8 1392.9L1909.3 1379.0L1917.6 1369.3L1920.8 1365.7L1929.1 1358.4L1932.3 1355.9L1943.8 1349.6L1949.4 1347.5L1955.3 1345.5L1966.8 1343.1L1978.3 1342.1L1989.9 1342.0L2001.4 1342.6L2012.9 1343.5L2035.9 1345.5L2047.4 1345.9L2058.9 1345.3L2070.4 1344.0L2081.9 1342.3L2093.4 1341.2L2104.9 1342.8L2116.4 1346.4L2123.8 1347.5L2127.9 1347.9L2162.4 1350.1L2185.4 1351.1L2196.9 1351.6L2208.4 1352.6L2219.9 1356.3L2224.2 1358.4L2231.4 1361.1L2242.9 1362.4L2254.4 1364.1L2265.9 1368.8M2304.7 1369.1L2312.0 1368.6L2323.5 1358.7L2323.9 1358.4L2334.8 1347.5L2340.0 1336.6L2343.4 1314.7L2342.5 1303.8L2338.4 1292.9L2335.0 1286.8L2332.3 1282.0L2326.7 1271.1L2323.5 1262.4L2322.5 1260.2L2314.9 1249.3L2312.7 1238.3L2312.0 1236.4L2300.5 1237.1L2289.0 1234.2L2277.5 1231.0L2265.9 1227.7L2254.4 1222.4L2242.9 1218.8L2236.9 1216.5L2219.9 1208.6L2214.5 1205.6L2208.4 1200.3L2202.2 1194.7L2196.9 1187.4L2194.8 1183.8L2191.0 1172.9L2186.9 1162.0L2185.7 1151.0L2185.4 1150.5L2173.9 1138.2L2163.6 1129.2L2162.4 1128.7L2150.9 1129.1L2139.4 1130.1L2127.9 1126.4L2116.4 1127.1L2104.9 1128.3L2093.4 1128.3L2081.9 1128.6L2070.4 1126.4L2058.9 1119.5L2056.1 1118.3L2047.4 1113.4L2041.2 1107.4L2037.0 1096.5L2035.9 1095.1L2031.3 1085.6L2027.5 1074.7L2024.4 1067.3L2017.7 1052.8L2012.9 1042.6L2007.1 1031.0L2001.4 1020.4L1993.9 1009.2L1989.9 1003.3L1986.0 998.3L1978.3 989.8L1975.8 987.4L1966.8 979.9L1962.7 976.4L1955.3 971.4L1945.6 965.5L1932.3 958.2L1923.1 954.6L1920.8 953.8L1909.3 951.5L1897.8 949.9L1886.3 949.7L1874.8 950.8L1851.8 953.9L1845.5 954.6L1840.3 955.1L1828.8 956.6L1817.3 959.1L1805.8 961.9L1794.3 965.6L1782.8 969.6L1764.2 976.4L1759.8 978.2L1748.3 983.0L1739.5 987.4L1736.8 988.8L1725.3 996.1L1722.0 998.3L1713.8 1004.2L1707.3 1009.2L1702.3 1013.5L1695.2 1020.1L1690.7 1024.4L1684.9 1031.0L1679.2 1037.7L1667.7 1052.1L1660.2 1063.7L1654.3 1074.7L1649.7 1085.6L1646.6 1096.5L1644.3 1107.4L1642.5 1118.3L1642.0 1129.2L1642.6 1140.1L1643.7 1151.0L1644.7 1157.8L1645.3 1162.0L1647.9 1172.9L1651.5 1183.8L1653.6 1194.7L1649.7 1205.6L1646.6 1216.5L1647.7 1227.4L1651.3 1238.3L1656.2 1249.6L1661.4 1260.2L1666.3 1271.1L1676.0 1292.9L1681.5 1303.8L1688.3 1314.7L1690.7 1318.1L1697.2 1325.7L1702.3 1330.4L1711.0 1336.6L1713.8 1338.5L1728.6 1347.5L1744.3 1358.4L1758.0 1369.3L1770.0 1380.2L1781.0 1391.1L1782.8 1393.0L1792.1 1402.0L1794.3 1404.3L1804.2 1413.0L1805.8 1414.5L1817.3 1422.9L1819.5 1423.9M1820.4 1402.0L1828.8 1405.5L1840.3 1407.3L1851.8 1405.9L1861.2 1402.0L1863.3 1401.3L1874.8 1394.3L1878.6 1391.1L1886.3 1384.9L1897.8 1372.6L1909.3 1358.8L1920.8 1347.6L1932.3 1340.2L1940.3 1336.6L1943.8 1335.1L1955.3 1331.8L1966.8 1329.5L1978.3 1328.7L1989.9 1328.9L2001.4 1329.6L2012.9 1330.0L2024.4 1330.0L2035.9 1329.5L2047.4 1328.1L2058.9 1326.0L2070.4 1323.5L2081.9 1321.6L2093.4 1320.7L2104.9 1322.4L2117.6 1325.7L2127.9 1330.0L2139.4 1332.4L2150.9 1333.2L2162.4 1332.6L2173.9 1329.7L2185.4 1325.8L2196.9 1325.3L2208.4 1325.7L2219.9 1325.8L2231.4 1326.6L2242.9 1334.6L2248.2 1336.6L2254.4 1337.9L2265.9 1346.3L2274.9 1347.5L2277.5 1347.6L2289.0 1347.7L2295.8 1347.5L2300.5 1347.2L2312.0 1336.6L2313.5 1325.7L2319.4 1314.7L2313.9 1303.8L2312.7 1292.9L2313.0 1282.0L2312.1 1271.1L2301.5 1260.2L2300.5 1259.5L2289.0 1258.3L2277.5 1250.0L2275.5 1249.3L2265.9 1247.2L2254.6 1238.3L2242.9 1237.1L2231.4 1237.4L2219.9 1235.9L2208.4 1227.4L2196.9 1220.2L2193.8 1216.5L2185.4 1207.1L2184.2 1205.6L2174.6 1194.7L2173.9 1193.8L2168.4 1183.8L2162.7 1172.9L2152.5 1162.0L2150.9 1160.8L2139.4 1153.4L2127.9 1147.2L2120.2 1146.5M2081.9 1146.4L2070.4 1142.8L2067.3 1140.1L2058.9 1133.8L2051.2 1129.2L2047.4 1127.7L2035.9 1120.5L2034.1 1118.3L2029.1 1107.4L2026.7 1096.5L2021.9 1085.6L2017.7 1074.7L2012.7 1063.7L2006.9 1052.8L2001.3 1041.9L1995.0 1031.0L1989.9 1023.2L1978.3 1008.2L1969.8 998.3L1958.2 987.4L1955.3 985.0L1944.1 976.4L1932.3 969.3L1925.3 965.5L1920.8 963.4L1909.3 960.4L1897.8 958.1L1886.3 957.3L1874.8 957.9L1863.3 959.2L1840.3 962.3L1828.8 964.9L1805.8 970.9L1794.3 975.3L1782.8 980.1L1771.3 985.1L1759.8 990.4L1748.3 995.8L1744.0 998.3L1736.8 1002.9L1727.8 1009.2L1725.3 1011.1L1714.4 1020.1L1702.3 1031.0L1692.3 1041.9L1683.1 1052.8L1679.2 1057.8L1675.1 1063.7L1669.5 1074.7L1664.1 1085.6L1660.7 1096.5L1656.5 1118.3L1656.0 1129.2L1656.7 1140.1L1657.2 1151.0L1657.8 1162.0L1659.7 1172.9L1665.6 1194.7L1661.7 1205.6L1656.2 1216.5L1656.9 1227.4L1660.7 1238.3L1665.5 1249.3L1670.5 1260.2L1675.2 1271.1L1679.7 1282.0L1684.4 1292.9L1690.0 1303.8L1697.3 1314.7L1702.3 1320.4L1707.9 1325.7L1713.8 1330.0L1725.6 1336.6L1743.8 1347.5L1748.3 1350.6L1760.1 1358.4L1774.8 1369.3L1782.8 1376.2L1787.8 1380.2L1794.3 1385.8L1801.7 1391.1L1805.8 1394.4L1817.3 1401.0L1820.4 1402.0M1897.8 1174.5L1893.6 1172.9L1886.3 1166.1L1884.4 1162.0L1886.3 1154.9L1889.1 1151.0L1897.8 1146.3L1906.7 1151.0L1909.3 1154.3L1911.4 1162.0L1909.3 1166.4L1901.9 1172.9L1897.8 1174.5M1810.6 1380.2L1817.3 1383.7L1828.8 1386.9L1840.3 1387.4L1851.8 1386.4L1863.3 1383.1L1868.5 1380.2L1874.8 1377.0L1886.3 1367.8L1895.0 1358.4L1905.0 1347.5L1909.3 1343.2L1917.3 1336.6L1920.8 1333.8L1932.3 1326.9L1935.4 1325.7L1943.8 1322.8L1955.3 1319.4L1966.8 1316.5L1978.3 1315.8L1989.9 1316.2L2001.4 1316.8L2012.9 1316.5L2024.4 1315.1L2035.9 1313.0L2047.4 1310.5L2058.9 1308.0L2070.4 1306.9L2081.9 1307.4L2093.4 1308.9L2104.9 1311.5L2116.4 1314.9L2127.9 1317.4L2139.4 1318.1L2150.9 1316.5L2156.1 1314.7L2162.4 1310.9L2170.4 1303.8L2173.9 1298.6L2182.7 1292.9L2185.4 1286.7L2186.7 1282.0L2186.4 1271.1L2186.8 1260.2L2186.4 1249.3L2185.4 1247.6L2175.2 1227.4L2173.9 1225.0L2169.9 1216.5L2162.4 1206.7L2161.7 1205.6L2156.5 1194.7L2150.9 1185.4L2150.2 1183.8L2141.6 1172.9L2139.4 1171.4L2127.9 1162.7L2123.7 1162.0L2116.4 1161.0L2095.5 1162.0L2093.4 1162.1L2081.9 1167.4L2070.4 1166.1L2065.9 1162.0L2058.9 1155.9L2053.4 1151.0L2047.4 1146.4L2037.6 1140.1L2035.9 1138.8L2028.2 1129.2L2024.4 1123.8L2021.5 1118.3L2018.3 1107.4L2015.4 1096.5L2012.9 1089.4L2011.3 1085.6L2006.2 1074.7L2001.4 1065.0L1994.4 1052.8L1989.9 1044.6L1988.2 1041.9L1980.8 1031.0L1978.3 1027.9L1971.9 1020.1L1963.2 1009.2L1955.3 1000.5L1953.5 998.3L1943.8 988.7L1942.4 987.4L1932.3 980.1L1927.1 976.4L1920.8 972.7L1909.3 968.3L1902.0 966.5M1863.3 965.4L1851.8 967.0L1840.3 968.7L1828.8 971.4L1817.3 975.0L1805.8 978.9L1794.3 983.8L1786.8 987.4L1765.6 998.3L1748.3 1008.5L1736.8 1016.8L1732.5 1020.1L1725.3 1026.2L1719.8 1031.0L1713.8 1036.8L1708.5 1041.9L1702.3 1048.8L1698.8 1052.8L1690.3 1063.7L1683.5 1074.7L1678.0 1085.6L1673.7 1096.5L1670.8 1107.4L1668.4 1118.3L1667.3 1129.2L1667.2 1140.1L1667.2 1151.0L1667.6 1162.0L1669.0 1172.9L1671.1 1183.8L1673.0 1194.7L1671.7 1205.6L1667.7 1214.6L1666.6 1216.5L1667.2 1227.4L1670.9 1238.3L1675.5 1249.3L1680.0 1260.2L1684.3 1271.1L1688.4 1282.0L1692.9 1292.9L1698.7 1303.8L1702.3 1308.9L1706.7 1314.7L1713.8 1321.3L1719.9 1325.7L1725.3 1328.8L1736.8 1334.4L1741.1 1336.6L1748.3 1340.9L1759.8 1347.2L1771.3 1353.9L1778.7 1358.4L1793.6 1369.3L1805.8 1377.8L1810.6 1380.2M1886.3 1186.1L1881.1 1183.8L1874.8 1178.6L1871.0 1172.9L1868.5 1162.0L1869.0 1151.0L1872.7 1140.1L1874.8 1136.8L1882.3 1129.2M1918.1 1136.5L1920.8 1139.0L1921.7 1140.1L1926.2 1151.0L1926.2 1162.0L1922.5 1172.9L1920.8 1175.2L1911.7 1183.8L1909.3 1185.6L1897.8 1189.1L1886.3 1186.1M1819.2 1369.3L1828.8 1371.9L1840.3 1371.7L1851.8 1371.0L1863.3 1367.8L1874.8 1362.4L1879.8 1358.4L1886.3 1353.6L1892.1 1347.5L1897.8 1342.4L1903.7 1336.6L1909.3 1331.3L1916.4 1325.7L1920.8 1321.6L1932.3 1315.0L1943.8 1311.6L1955.3 1307.7L1966.8 1304.2M2005.8 1303.4L2012.9 1302.7L2024.4 1299.6L2035.9 1296.4L2047.4 1293.1L2058.9 1290.3L2070.4 1291.0L2076.4 1292.9L2081.9 1294.2L2093.4 1298.1L2104.9 1302.3L2109.6 1303.8L2116.4 1305.7L2127.9 1306.5L2139.4 1304.5L2140.9 1303.8L2149.5 1292.9L2150.9 1287.2L2152.4 1282.0L2157.4 1271.1L2159.8 1260.2L2159.1 1249.3L2156.2 1238.3L2152.8 1227.4L2150.9 1222.7L2148.8 1216.5L2143.9 1205.6L2139.4 1194.7L2128.6 1183.8L2127.9 1183.2L2116.4 1178.6L2104.9 1181.4L2099.1 1183.8L2093.4 1186.3L2081.9 1192.5L2070.4 1192.3L2058.9 1180.2L2055.0 1172.9L2048.3 1162.0L2047.4 1161.1L2035.9 1155.0L2030.0 1151.0L2024.4 1146.1L2019.1 1140.1L2012.8 1129.2L2008.3 1118.3L2005.0 1107.4L2001.6 1096.5L1996.7 1085.6L1991.2 1074.7L1985.3 1063.7L1979.6 1052.8L1973.2 1041.9L1966.8 1033.5L1955.3 1019.5L1948.2 1009.2L1943.8 1003.9L1939.5 998.3L1932.3 991.4L1927.8 987.4L1920.8 982.4L1910.8 976.4L1909.3 975.8L1897.8 972.0L1886.3 970.2L1874.8 970.0L1863.3 970.8L1851.8 972.4L1840.3 974.4L1833.0 976.4L1817.3 981.7L1805.8 986.2L1803.4 987.4L1794.3 992.1L1782.8 998.4L1771.3 1005.5L1765.2 1009.2L1749.9 1020.1L1736.5 1031.0L1724.7 1041.9L1714.1 1052.8L1705.1 1063.7L1702.3 1067.8L1697.6 1074.7L1691.4 1085.6L1686.4 1096.5L1682.4 1107.4L1679.3 1118.3L1677.5 1129.2L1676.8 1140.1L1676.3 1151.0L1676.2 1162.0L1677.0 1172.9L1678.2 1183.8L1679.7 1194.7L1679.7 1205.6L1679.2 1209.1L1678.1 1216.5L1678.7 1227.4L1682.0 1238.3L1686.0 1249.3L1697.4 1282.0L1701.6 1292.9L1702.3 1294.2L1708.2 1303.8L1716.5 1314.7L1725.3 1321.3L1734.9 1325.7L1748.3 1332.0L1758.7 1336.6L1782.4 1347.5L1794.3 1354.8L1805.8 1362.6L1817.3 1368.8L1819.2 1369.3M1866.9 1194.7L1863.3 1192.3L1857.7 1183.8L1853.6 1172.9L1852.9 1162.0L1852.5 1151.0L1854.9 1140.1L1861.9 1129.2L1873.0 1118.3L1874.8 1117.5L1886.3 1115.6L1897.8 1114.9L1909.3 1117.7L1911.5 1118.3L1920.8 1122.1L1930.3 1129.2L1932.3 1131.9L1937.4 1140.1L1940.3 1151.0L1940.0 1162.0L1937.1 1172.9L1932.3 1182.6L1931.5 1183.8L1921.8 1194.7L1920.8 1195.5L1909.3 1202.2L1901.7 1203.3M1806.7 1347.5L1817.3 1353.5L1828.8 1357.7L1832.6 1357.9M1869.1 1351.0L1874.8 1348.9L1876.8 1347.5L1886.3 1341.7L1892.0 1336.6L1903.7 1325.7L1909.3 1319.8L1914.8 1314.7L1920.8 1307.5L1927.9 1303.8L1932.3 1300.2L1943.8 1297.4L1955.3 1294.2L1963.2 1292.9L1966.8 1291.8L1978.3 1290.0L1989.9 1288.6L2001.4 1287.4L2012.9 1285.8L2024.4 1282.3L2025.1 1282.0L2035.9 1276.8L2047.4 1272.1L2050.7 1271.1L2058.9 1266.5L2070.4 1269.0L2072.3 1271.1L2081.9 1276.5L2088.1 1282.0L2093.4 1284.8L2104.9 1291.6L2108.2 1292.9L2116.4 1295.3L2127.9 1293.7L2129.2 1292.9L2137.3 1282.0L2139.4 1277.6L2142.2 1271.1L2144.7 1260.2L2143.1 1249.3L2140.1 1238.3L2136.2 1227.4L2130.6 1216.5L2127.9 1211.6L2121.1 1205.6L2116.4 1202.6L2104.9 1204.5L2103.0 1205.6L2093.4 1211.6L2086.6 1216.5L2081.9 1221.5L2074.2 1227.4L2070.4 1232.0L2058.9 1234.8L2053.5 1227.4L2048.6 1216.5L2047.4 1213.2L2044.5 1194.7L2041.8 1183.8L2035.9 1173.3L2035.6 1172.9L2024.4 1164.3L2020.4 1162.0L2012.9 1156.0L2008.1 1151.0L2001.2 1140.1L1995.8 1129.2L1991.6 1118.3L1989.9 1113.2L1987.2 1107.4L1981.9 1096.5L1978.3 1089.6L1975.8 1085.6L1970.4 1074.7L1966.8 1063.2L1964.1 1052.8L1958.3 1041.9L1949.4 1031.0L1943.8 1023.5L1935.6 1009.2L1932.3 1005.0L1926.4 998.3L1920.8 993.3L1913.7 987.4L1909.3 984.6L1897.8 979.0L1886.3 976.5L1874.8 975.7L1863.3 976.3L1851.8 978.3L1840.3 980.8L1828.8 984.4L1820.3 987.4L1817.3 988.7L1805.8 994.4L1798.3 998.3L1781.4 1009.2L1771.3 1016.7L1766.5 1020.1L1759.8 1025.6L1753.1 1031.0L1740.9 1041.9L1730.1 1052.8L1725.3 1057.9L1720.2 1063.7L1713.8 1072.4L1712.2 1074.7L1705.6 1085.6L1702.3 1091.5L1699.7 1096.5L1694.9 1107.4L1690.7 1117.4L1690.4 1118.3L1688.0 1129.2L1686.8 1140.1L1685.9 1151.0L1685.2 1162.0L1685.6 1172.9L1686.4 1183.8L1687.4 1194.7L1688.6 1205.6L1689.9 1216.5L1690.7 1227.4L1693.5 1238.3L1696.5 1249.3L1699.6 1260.2L1707.0 1282.0L1711.3 1292.9L1713.8 1296.9L1718.6 1303.8L1725.3 1312.9L1727.3 1314.7L1736.8 1318.9L1748.3 1323.2L1759.8 1327.1L1771.3 1331.2L1785.9 1336.6L1794.3 1340.3L1805.8 1347.0L1806.7 1347.5M1897.8 1218.4L1887.5 1216.5L1874.8 1212.7L1863.3 1206.7L1862.1 1205.6L1851.8 1195.2L1844.0 1183.8L1840.3 1175.2L1839.4 1172.9L1838.0 1162.0L1837.2 1151.0L1837.3 1140.1L1839.7 1129.2L1840.3 1127.0L1845.9 1118.3L1851.8 1114.0L1863.3 1108.1L1866.0 1107.4L1870.4 1106.6M1905.7 1108.4L1909.3 1109.4L1920.8 1112.8L1932.3 1117.9L1933.0 1118.3L1943.8 1128.7L1944.3 1129.2L1950.6 1140.1L1952.4 1151.0L1952.5 1162.0L1950.7 1172.9L1946.4 1183.8L1940.8 1194.7L1932.3 1205.5L1920.8 1212.6L1910.5 1216.5L1909.3 1216.9L1897.8 1218.4M1819.5 1336.6L1828.8 1339.4L1840.3 1340.2L1851.8 1339.4L1863.3 1338.2L1869.8 1336.6L1874.8 1335.2L1886.3 1328.4L1889.3 1325.7L1897.8 1317.4L1900.2 1314.7L1908.6 1303.8L1909.3 1302.7L1915.1 1292.9L1920.8 1286.6L1929.7 1282.0L1932.3 1281.1L1943.8 1279.1L1955.3 1276.3L1964.5 1271.1L1966.8 1269.9L1978.3 1269.4L1989.9 1269.8L2001.4 1269.3L2012.9 1264.6L2018.8 1260.2L2024.4 1257.5L2035.0 1249.3L2034.7 1238.3L2034.9 1227.4L2035.0 1216.5L2031.6 1194.7L2027.2 1183.8L2024.4 1180.6L2012.9 1175.1L2005.1 1172.9L2001.4 1171.0L1990.4 1162.0L1989.9 1161.2L1978.8 1151.0L1978.3 1150.4L1976.0 1151.0L1969.8 1162.0L1966.8 1171.1L1966.7 1172.9L1963.7 1183.8L1957.2 1194.7L1955.3 1197.1L1949.8 1205.6L1943.8 1213.1L1940.0 1216.5L1932.3 1222.6L1920.8 1227.2L1912.7 1228.6M1874.8 1228.5L1872.7 1227.4L1863.3 1221.0L1851.8 1210.9L1847.1 1205.6L1840.3 1196.7L1831.6 1183.8L1828.8 1176.3L1828.0 1172.9L1827.4 1162.0L1826.3 1151.0L1826.0 1140.1L1827.6 1129.2L1828.8 1121.6L1829.9 1118.3L1836.3 1107.4L1840.3 1102.9L1851.8 1098.1L1857.8 1096.5L1863.3 1095.2L1874.8 1093.3L1886.3 1095.4L1897.8 1095.5L1900.6 1096.5L1909.3 1099.0L1920.8 1103.0L1932.3 1104.8L1943.8 1106.0L1947.1 1096.5L1947.3 1085.6L1948.5 1074.7L1950.0 1063.7L1950.4 1052.8L1945.2 1041.9L1943.8 1040.3L1937.2 1031.0L1932.3 1023.3L1930.5 1020.1L1923.7 1009.2L1920.8 1006.0L1898.5 987.4L1897.8 987.0L1886.3 984.7L1874.8 983.5L1863.3 984.0L1851.8 985.5L1840.7 987.4L1828.8 993.0L1817.3 997.3L1815.2 998.3L1805.8 1004.2L1797.4 1009.2L1782.8 1020.3L1769.9 1031.0L1759.8 1040.1L1757.7 1041.9L1748.3 1051.2L1746.6 1052.8L1736.6 1063.7L1727.7 1074.7L1715.0 1096.5L1709.8 1107.4L1704.3 1118.3L1702.3 1123.3L1700.5 1129.2L1699.0 1140.1L1697.6 1151.0L1696.2 1162.0L1696.3 1172.9L1696.6 1183.8L1697.0 1194.7L1699.5 1205.6L1701.5 1216.5L1702.7 1227.4L1704.7 1238.3L1707.0 1249.3L1709.6 1260.2L1713.8 1272.0L1717.8 1282.0L1723.2 1292.9L1725.3 1296.0L1732.1 1303.8L1736.8 1308.0L1748.3 1312.4L1757.3 1314.7L1759.8 1315.2L1771.3 1318.6L1782.8 1323.1L1789.5 1325.7L1805.8 1331.2L1817.3 1336.0L1819.5 1336.6M2103.0 1271.1L2104.9 1273.0L2116.4 1279.6L2126.1 1271.1L2127.9 1263.6L2128.3 1260.2L2127.9 1254.8L2126.1 1238.3L2117.4 1227.4L2116.4 1226.5M2099.4 1260.2L2103.0 1271.1M1803.1 1314.7L1805.8 1315.6L1817.3 1319.5L1825.0 1321.0M1863.3 1321.7L1874.8 1318.2L1880.0 1314.7L1886.3 1310.0L1892.5 1303.8L1897.8 1298.7L1902.0 1292.9L1909.3 1285.7L1912.6 1282.0L1920.8 1275.1L1932.3 1272.5L1939.3 1271.1L1943.8 1269.3L1955.3 1264.4L1965.9 1260.2L1966.8 1259.8L1971.2 1260.2L1978.3 1260.6L1985.4 1260.2L1989.9 1259.8L2001.4 1258.3L2011.9 1249.3L2023.8 1238.3L2024.4 1235.3L2026.1 1216.5L2024.4 1207.5L2023.3 1205.6L2016.6 1194.7L2012.9 1191.7L2001.4 1188.6L1989.9 1186.9L1978.3 1193.3L1977.2 1194.7L1966.8 1204.8L1958.0 1216.5L1955.3 1220.3L1949.9 1227.4L1943.8 1234.6L1938.6 1238.3L1932.3 1242.1L1920.8 1243.5L1909.3 1244.0L1897.8 1245.6L1886.3 1243.4L1874.8 1240.4L1863.3 1235.2L1855.0 1227.4L1842.9 1216.5L1833.4 1205.6L1828.8 1197.3L1827.7 1194.7L1821.4 1183.8L1820.1 1172.9L1820.2 1162.0L1818.8 1151.0L1818.4 1140.1L1821.7 1129.2L1823.1 1118.3L1826.8 1107.4L1828.8 1103.0L1834.2 1096.5L1840.3 1090.2L1851.8 1086.4L1855.4 1085.6L1863.3 1081.1L1874.8 1075.6L1886.3 1080.5L1897.8 1080.0L1909.3 1083.9L1920.8 1085.1L1931.8 1074.7L1932.3 1073.8L1935.6 1063.7L1937.6 1052.8L1934.5 1041.9L1932.3 1038.9L1925.6 1031.0L1920.8 1020.4L1920.5 1020.1L1909.3 1012.1L1904.4 1009.2L1897.8 1004.2L1888.2 998.3L1886.3 997.5L1874.8 995.8L1863.3 997.2L1851.8 998.0L1850.6 998.3L1840.3 1001.7L1828.8 1006.7L1817.3 1011.3L1805.8 1018.2L1803.1 1020.1L1794.3 1026.7L1788.8 1031.0L1782.8 1036.3L1776.6 1041.9L1771.3 1046.9L1765.2 1052.8L1759.8 1058.5L1755.1 1063.7L1748.3 1071.1L1745.2 1074.7L1737.6 1085.6L1736.8 1086.4L1729.6 1096.5L1725.3 1104.8L1723.7 1107.4L1719.7 1118.3L1715.8 1129.2L1713.8 1138.4L1713.3 1140.1L1711.8 1151.0L1709.8 1162.0L1709.8 1172.9L1709.3 1183.8L1708.5 1194.7L1710.5 1205.6L1712.0 1216.5L1713.9 1227.4L1716.2 1238.3L1718.2 1249.3L1721.0 1260.2L1725.3 1270.0L1731.5 1282.0L1736.8 1289.2L1742.5 1292.9L1748.3 1295.9L1759.8 1299.0L1771.3 1303.0L1782.8 1307.6L1794.3 1312.0L1803.1 1314.7M1814.3 1303.8L1817.3 1304.8L1828.8 1306.6L1840.3 1305.7L1851.8 1304.0L1853.6 1303.8L1863.3 1302.3L1874.8 1295.2L1886.0 1282.0L1896.1 1271.1L1886.6 1260.2L1874.8 1258.3L1863.0 1249.3L1851.8 1242.9L1844.9 1238.3L1840.3 1235.5L1833.2 1227.4L1829.2 1216.5L1819.8 1205.6L1817.3 1198.4L1816.2 1194.7L1811.2 1183.8L1811.5 1172.9L1811.7 1162.0L1811.0 1151.0L1811.5 1140.1L1815.2 1129.2L1816.6 1118.3L1817.3 1115.6L1819.1 1107.4L1821.6 1096.5L1824.5 1085.6L1827.5 1074.7L1828.8 1067.8L1835.7 1063.7L1840.3 1061.2L1851.8 1053.9L1863.3 1053.2M1901.7 1053.2L1909.3 1053.1L1909.8 1052.8L1910.7 1041.9L1909.3 1039.8L1898.8 1031.0L1886.3 1026.5L1876.4 1020.1L1874.8 1019.4L1863.3 1017.9L1851.8 1019.7L1851.0 1020.1L1840.3 1029.1L1828.8 1029.9L1818.2 1031.0L1817.3 1031.1L1805.8 1039.5L1802.6 1041.9L1794.3 1047.3L1788.1 1052.8L1782.8 1057.3L1776.2 1063.7L1771.3 1068.1L1764.6 1074.7L1759.8 1079.2L1753.4 1085.6L1748.3 1089.8L1741.8 1096.5L1736.8 1101.3L1732.8 1107.4L1727.3 1129.2L1724.1 1140.1L1721.8 1151.0L1721.0 1162.0L1721.2 1172.9L1720.8 1183.8L1720.2 1194.7L1721.8 1205.6L1723.8 1216.5L1725.3 1222.6L1727.1 1227.4L1730.6 1238.3L1733.4 1249.3L1736.1 1260.2L1736.8 1261.6L1742.6 1271.1L1748.3 1277.4L1754.9 1282.0L1759.8 1284.0L1771.3 1287.7L1784.7 1292.9L1794.3 1296.8L1805.8 1301.0L1814.3 1303.8M1971.5 1238.3L1978.3 1247.9M2004.7 1223.8L2002.6 1216.5L2001.4 1215.5L1989.9 1214.4M1972.7 1235.6L1971.5 1238.3M1828.8 1285.9L1834.5 1282.0L1840.3 1272.1L1840.8 1271.1L1840.7 1260.2L1840.3 1259.8L1830.9 1249.3L1828.8 1246.1L1824.7 1238.3L1818.3 1227.4L1814.4 1216.5L1808.5 1205.6L1805.2 1194.7L1801.4 1183.8L1802.0 1172.9L1801.7 1162.0L1802.4 1151.0L1804.1 1140.1L1805.8 1133.5L1806.7 1129.2L1807.1 1118.3L1808.8 1107.4L1809.4 1096.5L1809.5 1085.6L1808.8 1074.7L1805.8 1064.8L1794.3 1068.1L1784.4 1074.7L1782.8 1075.5L1771.3 1084.8L1759.8 1096.1L1748.3 1103.7L1744.3 1107.4L1739.9 1118.3L1738.2 1129.2L1736.8 1134.0L1735.4 1140.1L1732.8 1151.0L1733.1 1162.0L1734.9 1172.9L1736.8 1181.4L1738.0 1183.8L1740.5 1194.7L1744.3 1205.6L1748.3 1214.3L1750.8 1227.4L1754.2 1238.3L1758.1 1249.3L1759.8 1252.5L1763.9 1260.2L1771.3 1269.7L1772.5 1271.1L1782.8 1277.4L1791.2 1282.0M1805.7 1260.2L1806.3 1260.2L1807.1 1249.3L1805.8 1241.6L1805.2 1238.3L1801.8 1227.4L1799.2 1216.5L1796.4 1205.6L1794.6 1194.7L1794.3 1193.1L1791.5 1183.8L1790.6 1172.9L1790.5 1162.0L1791.2 1151.0L1794.3 1137.5L1795.3 1129.2L1795.0 1118.3L1794.9 1107.4L1794.3 1098.5L1782.8 1097.1L1771.9 1107.4L1771.3 1108.8L1766.0 1118.3L1759.8 1127.3L1759.1 1129.2L1757.1 1140.1L1754.6 1151.0L1757.4 1162.0L1759.8 1172.3L1759.9 1172.9L1763.2 1183.8L1763.9 1194.7L1765.1 1205.6L1767.5 1216.5L1769.6 1227.4L1771.3 1235.0L1773.0 1238.3M1802.8 1258.6L1805.7 1260.2" fill="none" stroke="#8c2c22" stroke-opacity="0.95" stroke-width="1.4" stroke-linejoin="round"/>
<g font-family="Liberation Sans,sans-serif" font-size="12.5" fill="#8c2c22" fill-opacity="0.5" text-anchor="middle">
<text transform="translate(1751.1 869.5) rotate(0)" y="4.5">105</text>
<text transform="translate(1734.6 899.3) rotate(0)" y="4.5">110</text>
<text transform="translate(1837.9 899.3) rotate(0)" y="4.5">115</text>
<text transform="translate(1854.9 924.8) rotate(0)" y="4.5">130</text>
<text transform="translate(1883.6 968.5) rotate(0)" y="4.5">155</text>
<text transform="translate(1883.6 1053.7) rotate(0)" y="4.5">180</text>
<text transform="translate(1887.9 1107.5) rotate(3)" y="4.5">165</text>
<text transform="translate(1900.7 1134.1) rotate(15)" y="4.5">155</text>
<text transform="translate(1883.6 1198.5) rotate(4)" y="4.5">160</text>
<text transform="translate(1895.4 1228.9) rotate(0)" y="4.5">170</text>
<text transform="translate(1789.4 1247.5) rotate(22)" y="4.5">190</text>
<text transform="translate(1809.1 1284.8) rotate(8)" y="4.5">185</text>
<text transform="translate(1843.2 1321.5) rotate(2)" y="4.5">175</text>
<text transform="translate(1850.1 1355.0) rotate(-8)" y="4.5">165</text>
<text transform="translate(1986.9 1304.5) rotate(0)" y="4.5">160</text>
<text transform="translate(1990.1 1232.6) rotate(-62)" y="4.5">180</text>
<text transform="translate(2105.1 1242.2) rotate(-55)" y="4.5">170</text>
<text transform="translate(2101.9 1147.4) rotate(0)" y="4.5">150</text>
<text transform="translate(2130.7 1365.7) rotate(0)" y="4.5">140</text>
<text transform="translate(2286.2 1369.4) rotate(0)" y="4.5">145</text>
<text transform="translate(2263.3 1404.6) rotate(0)" y="4.5">135</text>
<text transform="translate(2182.3 1425.9) rotate(0)" y="4.5">125</text>
<text transform="translate(2258.0 1445.6) rotate(0)" y="4.5">120</text>
<text transform="translate(1975.8 1470.6) rotate(-5)" y="4.5">115</text>
<text transform="translate(2205.2 1487.1) rotate(-8)" y="4.5">115</text>
<text transform="translate(1986.9 1505.2) rotate(-15)" y="4.5">110</text>
<text transform="translate(2142.4 888.6) rotate(0)" y="4.5">105</text>
<text transform="translate(2252.6 998.3) rotate(0)" y="4.5">110</text>
<text transform="translate(2533.2 985.0) rotate(62)" y="4.5">95</text>
<text transform="translate(2535.9 1152.7) rotate(28)" y="4.5">100</text>
<text transform="translate(2538.5 1399.2) rotate(52)" y="4.5">100</text>
<text transform="translate(2516.2 1470.6) rotate(-45)" y="4.5">100</text>
<text transform="translate(1594.0 1333.7) rotate(80)" y="4.5">105</text>
<text transform="translate(1624.3 1333.7) rotate(62)" y="4.5">110</text>
</g>
<rect x="1558.5" y="861.9" width="1000.8" height="665.7" fill="none" stroke="#1a1a1a" stroke-width="2"/>
<path d="M1667.7 1527.5 v15M1782.8 1527.5 v15M1897.8 1527.5 v15M2012.9 1527.5 v15M2127.9 1527.5 v15M2242.9 1527.5 v15M2358.0 1527.5 v15M2473.0 1527.5 v15M1558.5 1423.9 h-15M1558.5 1314.7 h-15M1558.5 1205.6 h-15M1558.5 1096.5 h-15M1558.5 987.4 h-15M1558.5 878.2 h-15" fill="none" stroke="#1a1a1a" stroke-width="1.6"/>
<g font-family="Liberation Sans,sans-serif" font-size="24" fill="#111" text-anchor="middle">
<text x="1667.7" y="1579.3">100</text>
<text x="1782.8" y="1579.3">200</text>
<text x="1897.8" y="1579.3">300</text>
<text x="2012.9" y="1579.3">400</text>
<text x="2127.9" y="1579.3">500</text>
<text x="2242.9" y="1579.3">600</text>
<text x="2358.0" y="1579.3">700</text>
<text x="2473.0" y="1579.3">800</text>
<text transform="translate(1523.0 1423.9) rotate(-90)">100</text>
<text transform="translate(1523.0 1314.7) rotate(-90)">200</text>
<text transform="translate(1523.0 1205.6) rotate(-90)">300</text>
<text transform="translate(1523.0 1096.5) rotate(-90)">400</text>
<text transform="translate(1523.0 987.4) rotate(-90)">500</text>
<text transform="translate(1523.0 878.2) rotate(-90)">600</text>
<text x="2059" y="1636">x</text>
<text x="2059" y="1665.3">col=heat.colors(100)</text>
<text transform="translate(1465 1194) rotate(-90)">y</text>
<text x="2059.5" y="815" font-size="29.3" font-weight="bold" font-style="italic" fill="#000">Maunga Whau Volcano</text>
</g>
</svg>
<!-- PLOT-END -->
</body>
</html>
